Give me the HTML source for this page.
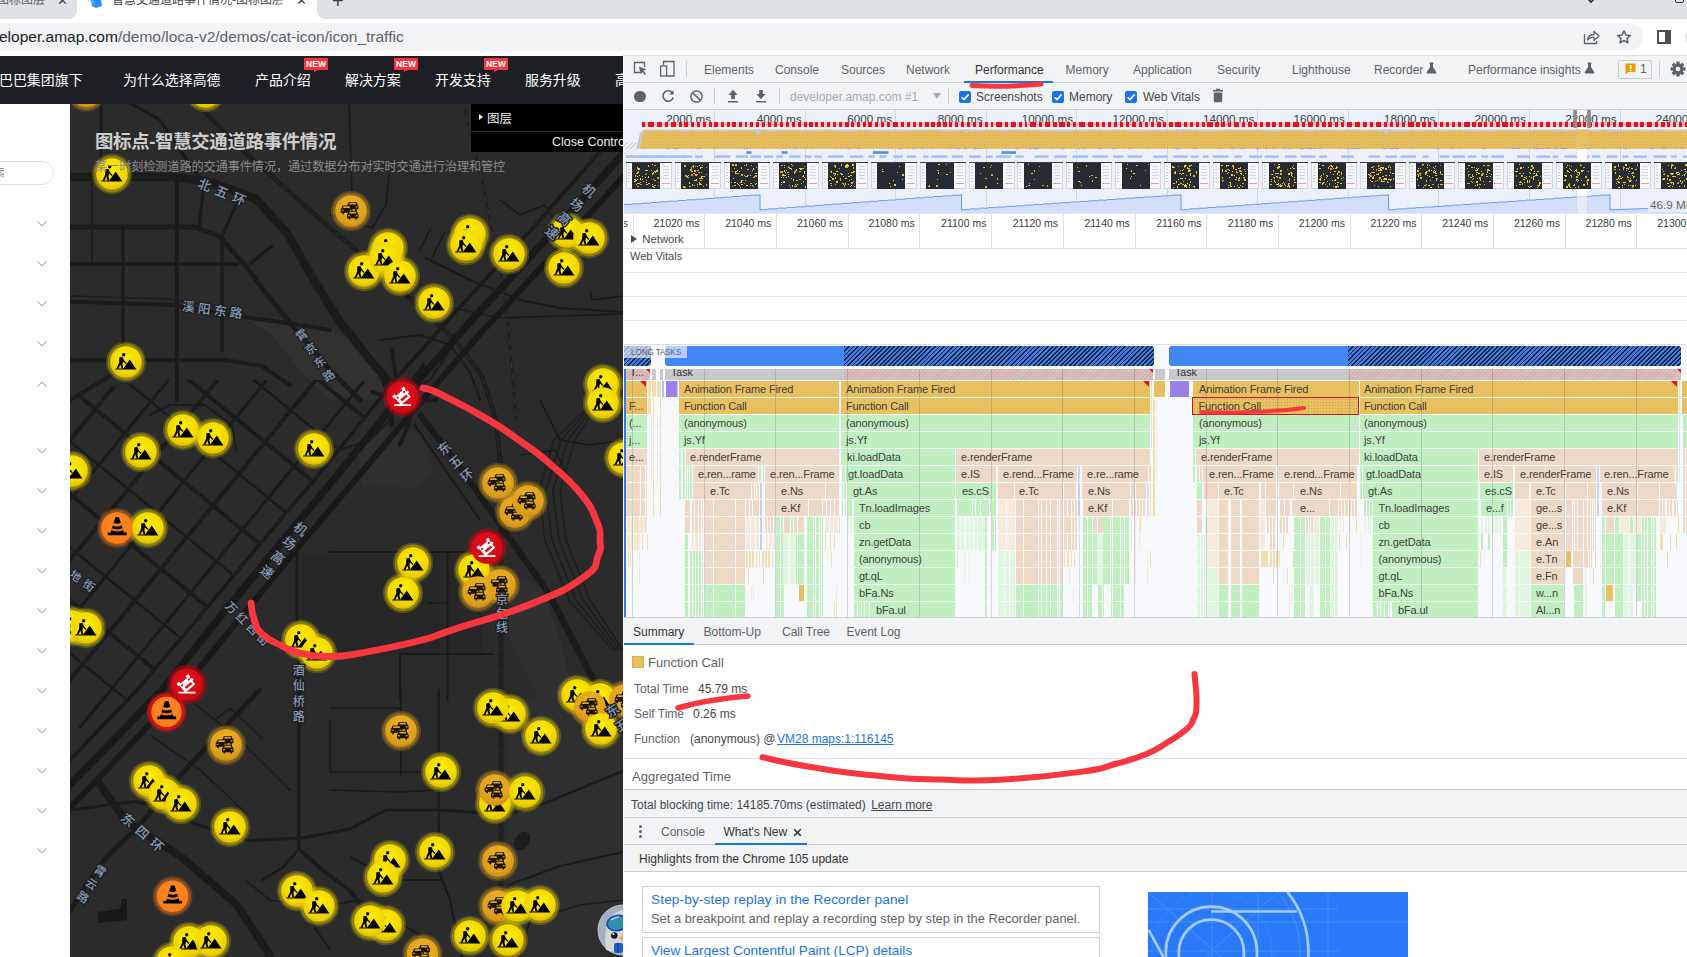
<!DOCTYPE html>
<html lang="zh"><head><meta charset="utf-8"><title>智慧交通道路事件情况-图标图层</title>
<style>
*{box-sizing:border-box;margin:0;padding:0}
html,body{width:1687px;height:957px;overflow:hidden;background:#fff}
body{position:relative;font-family:"Liberation Sans","Noto Sans CJK SC",sans-serif;font-size:12px;color:#303942}
.abs{position:absolute}
#tabstrip{left:0;top:0;width:1687px;height:19px;background:#dee1e6}
#tab0{left:-20px;top:-16px;width:96px;height:34px;border-radius:0 0 8px 8px;background:#dee1e6}
#tabA{left:77px;top:-20px;width:240px;height:40px;background:#fff;border-radius:8px 8px 0 0}
#toolbar{left:0;top:19px;width:1687px;height:37px;background:#fff}
#omni{left:-40px;top:23px;width:1683px;height:28px;border-radius:14px;background:#f1f3f4}
#url{left:-1px;top:26px;font-size:15.5px;line-height:22px;color:#5f6368;white-space:nowrap;letter-spacing:0px}
#url b{font-weight:normal;color:#202124}
#nav{left:0;top:56px;width:623px;height:48px;background:#1d1f24}
.navi{top:56.6px;height:47px;line-height:47px;color:#fff;font-size:13.95px;white-space:nowrap}
.new{top:58px;width:24px;height:12px;background:#f4363c;color:#fff;font-size:8.5px;line-height:12px;text-align:center;border-radius:1px;font-weight:bold}
.new:after{content:"";position:absolute;left:10px;top:12px;border:solid transparent;border-top-color:#f4363c;border-left-color:#f4363c;border-width:1.8px 2.4px}
#side{left:0;top:103px;width:70px;height:854px;background:#fff}
#map{left:70px;top:103px;width:553px;height:854px;background:#2a2a2a;overflow:hidden}
#dt{left:623px;top:56px;width:1064px;height:901px;background:#fff;overflow:hidden;font-size:12px}

.tab{top:63px;font-size:12px;line-height:15px;white-space:nowrap}
.ovl{top:111px;width:80px;text-align:right;font-size:11.7px;line-height:15px;color:#3a3d42;white-space:nowrap}
.rl{top:216px;width:80px;text-align:right;font-size:10.5px;line-height:15px;color:#3c4043;white-space:nowrap}
.fb{position:absolute;height:16px;overflow:hidden;white-space:nowrap;font-size:11px;line-height:16px;color:#404040;letter-spacing:-0.12px}
.shot{top:162px;width:46px;height:26.5px;background:#f4f6fa;outline:1px solid #d4d7de;outline-offset:-1px;overflow:hidden}
.sm{width:28.2px;height:26.5px;background:#262b34}
i.sp{position:absolute;top:0;width:0.9px;height:100%;background:#f8f9fd}
i.sp2{width:0.9px;height:16px;background:#f8f9fd}
.sm i{position:absolute;width:1.3px;height:1.3px}
</style></head>
<body>
<div class="abs" id="tabstrip"></div>
<div class="abs" id="tabA"></div>
<div class="abs" style="left:69px;top:11px;width:8px;height:8px;background:#fff"></div><div class="abs" style="left:61px;top:3px;width:16px;height:16px;border-radius:8px;background:#dee1e6"></div>
<div class="abs" style="left:317px;top:11px;width:8px;height:8px;background:#fff"></div><div class="abs" style="left:317px;top:3px;width:16px;height:16px;border-radius:8px;background:#dee1e6"></div>
<div class="abs" style="left:-3px;top:-7px;font-size:12px;color:#5f6368;white-space:nowrap;line-height:14px;height:14px;overflow:hidden">图标图层</div>
<div class="abs" style="left:57px;top:-6px;font-size:13px;color:#3c4043;line-height:14px">✕</div>
<svg class="abs" style="left:88px;top:0" width="16" height="10" viewBox="0 0 16 10"><path d="M3 0 L13 0 L14 6 L8 8 L4 6 Z" fill="#2a8cf0"/><path d="M2 2 L6 0 L7 5 Z" fill="#55b4ff"/></svg>
<div class="abs" style="left:112px;top:-7px;font-size:12px;color:#3c4043;white-space:nowrap;line-height:14px;width:176px;overflow:hidden">智慧交通道路事件情况-图标图层</div>
<div class="abs" style="left:273px;top:-7px;width:16px;height:16px;background:linear-gradient(90deg,rgba(255,255,255,0),#fff)"></div>
<div class="abs" style="left:296px;top:-6px;font-size:13px;color:#3c4043;line-height:14px">✕</div>
<div class="abs" style="left:332px;top:-9px;font-size:20px;color:#3c4043;line-height:20px">+</div>
<svg class="abs" style="left:1585px;top:0" width="12" height="4" viewBox="0 0 12 4"><path d="M2 -2 L6 2 L10 -2" stroke="#333" stroke-width="1.6" fill="none"/></svg>
<div class="abs" style="left:1675px;top:-6px;width:9px;height:9px;border:1.5px solid #333;border-radius:2px"></div>
<div class="abs" id="toolbar"></div><div class="abs" id="omni"></div>
<div class="abs" id="url"><b>eloper.amap.com</b>/demo/loca-v2/demos/cat-icon/icon_traffic</div>
<svg class="abs" style="left:1583px;top:29px" width="18" height="16" viewBox="0 0 18 16"><path d="M1.5 5 V14.5 H13.5 V12" stroke="#5f6368" stroke-width="1.3" fill="none"/><path d="M4.5 11 C5 7 8 5.5 11 5.5 V2.5 L16 7 L11 11.5 V8.5 C8 8.3 6 9 4.5 11 Z" stroke="#5f6368" stroke-width="1.3" fill="none" stroke-linejoin="round"/></svg>
<svg class="abs" style="left:1616px;top:29px" width="16" height="16" viewBox="0 0 16 16"><path d="M8 1.8 L9.9 6 L14.4 6.4 L11 9.4 L12 13.8 L8 11.5 L4 13.8 L5 9.4 L1.6 6.4 L6.1 6 Z" stroke="#5f6368" stroke-width="1.5" fill="none" stroke-linejoin="round"/></svg>
<div class="abs" style="left:1657px;top:30px;width:14px;height:14px;border:2px solid #4a4f55;border-right-width:6px"></div>
<div class="abs" style="left:1685px;top:28px;width:20px;height:20px;border-radius:10px;background:#e3e5e8"></div>
<div class="abs" id="nav"></div>
<div class="abs navi" style="left:-1px">巴巴集团旗下</div>
<div class="abs navi" style="left:123px">为什么选择高德</div>
<div class="abs navi" style="left:255px">产品介绍</div>
<div class="abs navi" style="left:345px">解决方案</div>
<div class="abs navi" style="left:435px">开发支持</div>
<div class="abs navi" style="left:525px">服务升级</div>
<div class="abs navi" style="left:615px">高</div>
<div class="abs new" style="left:304px">NEW</div>
<div class="abs new" style="left:394px">NEW</div>
<div class="abs new" style="left:484px">NEW</div>
<div class="abs" id="side"></div>
<div class="abs" style="left:-20px;top:161px;width:74px;height:24px;border:1px solid #dcdfe6;border-radius:12px;background:#fff"></div>
<div class="abs" style="left:-6px;top:166px;font-size:11px;color:#888;line-height:14px;width:10px;overflow:hidden">索</div>
<svg class="abs" style="left:36.3px;top:220.4px" width="12" height="8" viewBox="0 0 12 8"><path d="M1.5 1.5 L6 6 L10.5 1.5" stroke="#b4b8bf" stroke-width="1.2" fill="none"/></svg>
<svg class="abs" style="left:36.3px;top:260.4px" width="12" height="8" viewBox="0 0 12 8"><path d="M1.5 1.5 L6 6 L10.5 1.5" stroke="#b4b8bf" stroke-width="1.2" fill="none"/></svg>
<svg class="abs" style="left:36.3px;top:300.4px" width="12" height="8" viewBox="0 0 12 8"><path d="M1.5 1.5 L6 6 L10.5 1.5" stroke="#b4b8bf" stroke-width="1.2" fill="none"/></svg>
<svg class="abs" style="left:36.3px;top:340.4px" width="12" height="8" viewBox="0 0 12 8"><path d="M1.5 1.5 L6 6 L10.5 1.5" stroke="#b4b8bf" stroke-width="1.2" fill="none"/></svg>
<svg class="abs" style="left:36.3px;top:447.4px" width="12" height="8" viewBox="0 0 12 8"><path d="M1.5 1.5 L6 6 L10.5 1.5" stroke="#b4b8bf" stroke-width="1.2" fill="none"/></svg>
<svg class="abs" style="left:36.3px;top:487.4px" width="12" height="8" viewBox="0 0 12 8"><path d="M1.5 1.5 L6 6 L10.5 1.5" stroke="#b4b8bf" stroke-width="1.2" fill="none"/></svg>
<svg class="abs" style="left:36.3px;top:527.4px" width="12" height="8" viewBox="0 0 12 8"><path d="M1.5 1.5 L6 6 L10.5 1.5" stroke="#b4b8bf" stroke-width="1.2" fill="none"/></svg>
<svg class="abs" style="left:36.3px;top:567.4px" width="12" height="8" viewBox="0 0 12 8"><path d="M1.5 1.5 L6 6 L10.5 1.5" stroke="#b4b8bf" stroke-width="1.2" fill="none"/></svg>
<svg class="abs" style="left:36.3px;top:607.4px" width="12" height="8" viewBox="0 0 12 8"><path d="M1.5 1.5 L6 6 L10.5 1.5" stroke="#b4b8bf" stroke-width="1.2" fill="none"/></svg>
<svg class="abs" style="left:36.3px;top:647.4px" width="12" height="8" viewBox="0 0 12 8"><path d="M1.5 1.5 L6 6 L10.5 1.5" stroke="#b4b8bf" stroke-width="1.2" fill="none"/></svg>
<svg class="abs" style="left:36.3px;top:687.4px" width="12" height="8" viewBox="0 0 12 8"><path d="M1.5 1.5 L6 6 L10.5 1.5" stroke="#b4b8bf" stroke-width="1.2" fill="none"/></svg>
<svg class="abs" style="left:36.3px;top:727.4px" width="12" height="8" viewBox="0 0 12 8"><path d="M1.5 1.5 L6 6 L10.5 1.5" stroke="#b4b8bf" stroke-width="1.2" fill="none"/></svg>
<svg class="abs" style="left:36.3px;top:767.4px" width="12" height="8" viewBox="0 0 12 8"><path d="M1.5 1.5 L6 6 L10.5 1.5" stroke="#b4b8bf" stroke-width="1.2" fill="none"/></svg>
<svg class="abs" style="left:36.3px;top:807.4px" width="12" height="8" viewBox="0 0 12 8"><path d="M1.5 1.5 L6 6 L10.5 1.5" stroke="#b4b8bf" stroke-width="1.2" fill="none"/></svg>
<svg class="abs" style="left:36.3px;top:847.4px" width="12" height="8" viewBox="0 0 12 8"><path d="M1.5 1.5 L6 6 L10.5 1.5" stroke="#b4b8bf" stroke-width="1.2" fill="none"/></svg>
<svg class="abs" style="left:36.3px;top:379.6px" width="12" height="8" viewBox="0 0 12 8"><path d="M1.5 6.5 L6 2 L10.5 6.5" stroke="#b4b8bf" stroke-width="1.2" fill="none"/></svg>
<svg class="abs" style="left:70px;top:103px" width="553" height="854" viewBox="70 103 553 854">

<defs>
<clipPath id="cw"><polygon points="70,395 150,380 340,380 392,383 137,690 70,760"/></clipPath>
<radialGradient id="gy" cx="50%" cy="38%" r="65%"><stop offset="0" stop-color="#fff000"/><stop offset="0.75" stop-color="#f0d400"/><stop offset="1" stop-color="#d8b800"/></radialGradient>
<radialGradient id="ga" cx="50%" cy="35%" r="70%"><stop offset="0" stop-color="#eeb428"/><stop offset="0.7" stop-color="#dfa01c"/><stop offset="1" stop-color="#c48a14"/></radialGradient>
<radialGradient id="go" cx="50%" cy="40%" r="65%"><stop offset="0" stop-color="#ff8a26"/><stop offset="1" stop-color="#f87a18"/></radialGradient>
<radialGradient id="gr" cx="50%" cy="40%" r="65%"><stop offset="0" stop-color="#e8101c"/><stop offset="1" stop-color="#cc0812"/></radialGradient>
<g id="wk"><path d="M-10.8 6.4 H10.2 V7.4 H-10.8 Z M-3.2 7 L3.8 -2.6 L10 7 Z" fill="#000"/><circle cx="-2.3" cy="-7.2" r="1.7" fill="#000"/><path d="M-6.8 -4.6 L-3.6 -5.2 L-2 -1.8 L0.6 1.2 L-0.2 2 L-3 -0.4 L-3.6 2.2 L-2.6 6.6 L-4.4 6.8 L-5.6 2.6 L-7.6 6.8 L-9.4 6.6 L-6.8 0.4 Z" fill="#000"/></g>
<g id="car1"><path d="M-4.6 0.2 L-3.4 -2.6 H3.4 L4.6 0.2 L5.2 0.8 V4 H3.8 V5.2 H2.2 V4 H-2.2 V5.2 H-3.8 V4 H-5.2 V0.8 Z" fill="#1a1408"/><path d="M-3.2 -0.2 L-2.6 -1.8 H2.6 L3.2 -0.2 Z" fill="#e0a422"/><rect x="-4.4" y="1.3" width="1.8" height="1" fill="#e0a422"/><rect x="2.6" y="1.3" width="1.8" height="1" fill="#e0a422"/></g>
<g id="cars"><use href="#car1" x="1.5" y="-5.5"/><use href="#car1" x="-4" y="-2.4" /><use href="#car1" x="1.6" y="2.4"/></g>
<g id="cone"><path d="M-9.2 4.6 H9.6 V7.2 H-9.2 Z M-1.6 -10.8 H2 L7 4.6 H-6.4 Z" fill="#000"/><path d="M-3.2 -5 Q0.4 -3.4 4 -5.2 L4.9 -2.6 Q0.4 -0.6 -4.2 -2.2 Z" fill="#ff8420"/><path d="M-5 0.2 Q0.4 2.4 5.8 0 L6.4 2.2 Q0.4 4.4 -5.8 2.6 Z" fill="#ff8420" opacity="0.9"/></g>
<g id="crash"><path d="M-8.5 7.2 H8.5 V9 H-8.5 Z" fill="#fff"/><g transform="rotate(-40)"><rect x="-6.5" y="-5" width="13" height="10.2" rx="0.8" fill="#fff"/><rect x="-7.6" y="-7.2" width="3.2" height="3" fill="#fff"/><rect x="4.4" y="-7.2" width="3.2" height="3" fill="#fff"/><rect x="6" y="-1.8" width="2.2" height="2.4" fill="#fff"/><circle cx="-4.3" cy="-2.5" r="1.15" fill="#dc0c16"/><circle cx="4.6" cy="-2.7" r="1.15" fill="#dc0c16"/><rect x="-3.4" y="0.5" width="8" height="2.5" fill="#dc0c16"/></g></g>
<g id="iy_g"><circle r="20.2" fill="#e8d000" opacity="0.22"/><circle r="18.4" fill="#e8d000" opacity="0.38"/></g><g id="iy"><circle r="15.8" fill="url(#gy)"/><use href="#wk"/></g>
<g id="ia_g"><circle r="20.2" fill="#e0a010" opacity="0.22"/><circle r="18.4" fill="#e0a010" opacity="0.36"/></g><g id="ia"><circle r="15.8" fill="url(#ga)"/><use href="#cars" transform="scale(1.12)"/></g>
<g id="io_g"><circle r="20.2" fill="#f07818" opacity="0.22"/><circle r="18.4" fill="#f07818" opacity="0.38"/></g><g id="io"><circle r="15.8" fill="url(#go)"/><use href="#cone"/></g>
<g id="ior_g"><circle r="20.2" fill="#d01018" opacity="0.4"/><circle r="18.4" fill="#e01018" opacity="0.85"/></g><g id="ior"><circle r="15.2" fill="url(#go)"/><use href="#cone"/></g>
<g id="ir_g"><circle r="20.2" fill="#c00812" opacity="0.3"/><circle r="18.4" fill="#b00a14" opacity="0.55"/></g><g id="ir"><circle r="15.8" fill="url(#gr)"/><use href="#crash"/></g>
</defs>
<rect x="70" y="103" width="553" height="854" fill="#2b2b2b"/>
<polygon points="244,317 287,323 330,330 372,350 392,385 380,400 330,400 300,370 272,335" fill="#313131"/>
<polygon points="355,440 380,428 420,432 433,470 420,488 362,486" fill="#2f2f2f"/>
<polygon points="302,554 483,554 483,655 302,655" fill="#272727"/>
<polygon points="505,575 540,585 560,640 575,700 540,700 510,640" fill="#303030"/>
<polygon points="508,700 623,690 623,957 508,957" fill="#2f2f2f"/>
<polyline points="70,177 172,177 210,182 256,199 287,233 312,277 340,322 372,362 401,396" fill="none" stroke="#1b1b1b" stroke-width="8.5" stroke-linejoin="round" stroke-linecap="round" />
<polyline points="70,227 194,227 219,236 244,264 272,301 293,326 330,370 360,400" fill="none" stroke="#1b1b1b" stroke-width="5" stroke-linejoin="round" stroke-linecap="round" />
<polyline points="70,264 237,264" fill="none" stroke="#1b1b1b" stroke-width="4" stroke-linejoin="round" stroke-linecap="round" />
<polyline points="70,301.6 172,305 244,317 287,323 330,330" fill="none" stroke="#1b1b1b" stroke-width="4" stroke-linejoin="round" stroke-linecap="round" />
<polyline points="70,296 170,299 240,311" fill="none" stroke="#1b1b1b" stroke-width="1.5" stroke-linejoin="round" stroke-linecap="round" />
<polyline points="70,360.5 225,360 262,366 290,385" fill="none" stroke="#1b1b1b" stroke-width="4" stroke-linejoin="round" stroke-linecap="round" />
<polyline points="123,227 123,360" fill="none" stroke="#1b1b1b" stroke-width="3.5" stroke-linejoin="round" stroke-linecap="round" />
<polyline points="177,179 177,400" fill="none" stroke="#1b1b1b" stroke-width="4" stroke-linejoin="round" stroke-linecap="round" />
<polyline points="222,236 222,351" fill="none" stroke="#1b1b1b" stroke-width="3.5" stroke-linejoin="round" stroke-linecap="round" />
<polyline points="92,183 92,264" fill="none" stroke="#1b1b1b" stroke-width="1.5" stroke-linejoin="round" stroke-linecap="round" />
<polyline points="203,193 199,227" fill="none" stroke="#1b1b1b" stroke-width="3" stroke-linejoin="round" stroke-linecap="round" />
<polyline points="237.5,202 222,236" fill="none" stroke="#1b1b1b" stroke-width="3" stroke-linejoin="round" stroke-linecap="round" />
<polyline points="272,246 250,264" fill="none" stroke="#1b1b1b" stroke-width="3" stroke-linejoin="round" stroke-linecap="round" />
<polyline points="101,103 101,165" fill="none" stroke="#1b1b1b" stroke-width="3" stroke-linejoin="round" stroke-linecap="round" />
<polyline points="70,400 110,376 123,360" fill="none" stroke="#1b1b1b" stroke-width="4" stroke-linejoin="round" stroke-linecap="round" />
<polyline points="130,103 160,120 180,150 200,178" fill="none" stroke="#1b1b1b" stroke-width="3" stroke-linejoin="round" stroke-linecap="round" />
<polyline points="196,103 240,148 330,228 355,249 414,302 457,342 482,376 496,420 501,470 501,957" fill="none" stroke="#1e1e1e" stroke-width="4.5" stroke-linejoin="round" stroke-linecap="round" />
<polyline points="196,103 240,148 330,228 355,249 414,302 457,342 482,376 496,420 501,470 501,957" fill="none" stroke="#2f2f2f" stroke-width="1" stroke-linejoin="round" stroke-linecap="round" stroke-dasharray="5 5"/>
<polyline points="463,103 472,140 482,180 490,220 498,258 507,314 513,382 516,420" fill="none" stroke="#202020" stroke-width="2.5" stroke-linejoin="round" stroke-linecap="round" />
<polyline points="463,103 472,140 482,180 490,220 498,258 507,314 513,382 516,420" fill="none" stroke="#3a3a3a" stroke-width="1" stroke-linejoin="round" stroke-linecap="round" stroke-dasharray="6 6"/>
<polyline points="349,103 352,193 345,215" fill="none" stroke="#1b1b1b" stroke-width="1.5" stroke-linejoin="round" stroke-linecap="round" />
<polyline points="389,174 386,205 372,228" fill="none" stroke="#1b1b1b" stroke-width="1.5" stroke-linejoin="round" stroke-linecap="round" />
<polyline points="330,215 372,228" fill="none" stroke="#1b1b1b" stroke-width="1.5" stroke-linejoin="round" stroke-linecap="round" />
<polyline points="426,258 470,280 520,300 560,308 623,312" fill="none" stroke="#1b1b1b" stroke-width="2" stroke-linejoin="round" stroke-linecap="round" />
<polyline points="454,308 500,318 560,316 623,314" fill="none" stroke="#1b1b1b" stroke-width="1.5" stroke-linejoin="round" stroke-linecap="round" />
<polyline points="500,200 520,215 545,205 555,222" fill="none" stroke="#1b1b1b" stroke-width="1.5" stroke-linejoin="round" stroke-linecap="round" />
<polyline points="590,290 592,300 623,296" fill="none" stroke="#1b1b1b" stroke-width="1.5" stroke-linejoin="round" stroke-linecap="round" />
<polyline points="430,230 420,250" fill="none" stroke="#1b1b1b" stroke-width="1.5" stroke-linejoin="round" stroke-linecap="round" />
<polyline points="445,232 432,258" fill="none" stroke="#1b1b1b" stroke-width="1.5" stroke-linejoin="round" stroke-linecap="round" />
<polyline points="380,340 420,335 450,345 470,372 480,400" fill="none" stroke="#1b1b1b" stroke-width="2" stroke-linejoin="round" stroke-linecap="round" />
<polyline points="640,135 560,224 470,322 417,382 401,396 330,484 290,532 220,617 162,690 70,785" fill="none" stroke="#191919" stroke-width="7.5" stroke-linejoin="round" stroke-linecap="round" />
<polyline points="640,158 570,236 480,334 426,396 345,492 300,545 232,628 175,698 70,808" fill="none" stroke="#191919" stroke-width="6" stroke-linejoin="round" stroke-linecap="round" />
<polyline points="610,140 540,220 450,318 395,380 316,478 275,526 205,610 137,690 70,760" fill="none" stroke="#1b1b1b" stroke-width="3.5" stroke-linejoin="round" stroke-linecap="round" />
<polyline points="401,396 390,420 370,440 340,450" fill="none" stroke="#1b1b1b" stroke-width="2" stroke-linejoin="round" stroke-linecap="round" />
<polyline points="401,396 430,380 450,350" fill="none" stroke="#1b1b1b" stroke-width="2" stroke-linejoin="round" stroke-linecap="round" />
<polyline points="378,366 388,392 392,425" fill="none" stroke="#1b1b1b" stroke-width="5" stroke-linejoin="round" stroke-linecap="round" />
<polyline points="424,366 404,392 380,420" fill="none" stroke="#1b1b1b" stroke-width="5" stroke-linejoin="round" stroke-linecap="round" />
<polyline points="372,392 402,402 436,400" fill="none" stroke="#1b1b1b" stroke-width="4" stroke-linejoin="round" stroke-linecap="round" />
<polyline points="392,350 396,380" fill="none" stroke="#1b1b1b" stroke-width="4" stroke-linejoin="round" stroke-linecap="round" />
<polyline points="410,420 400,445" fill="none" stroke="#1b1b1b" stroke-width="4" stroke-linejoin="round" stroke-linecap="round" />
<g clip-path="url(#cw)">
<polyline points="422.346,310.068 79.986,727.488" fill="none" stroke="#1b1b1b" stroke-width="3" stroke-linejoin="round" stroke-linecap="round" />
<polyline points="392.972,285.976 50.612,703.396" fill="none" stroke="#1b1b1b" stroke-width="4" stroke-linejoin="round" stroke-linecap="round" />
<polyline points="363.598,261.884 21.238,679.304" fill="none" stroke="#1b1b1b" stroke-width="3" stroke-linejoin="round" stroke-linecap="round" />
<polyline points="334.224,237.792 -8.136,655.212" fill="none" stroke="#1b1b1b" stroke-width="4" stroke-linejoin="round" stroke-linecap="round" />
<polyline points="304.85,213.7 -37.51,631.12" fill="none" stroke="#1b1b1b" stroke-width="3" stroke-linejoin="round" stroke-linecap="round" />
<polyline points="275.476,189.608 -66.884,607.028" fill="none" stroke="#1b1b1b" stroke-width="4" stroke-linejoin="round" stroke-linecap="round" />
<polyline points="246.102,165.516 -96.258,582.936" fill="none" stroke="#1b1b1b" stroke-width="3" stroke-linejoin="round" stroke-linecap="round" />
<polyline points="375.98,427.19 66.78,173.59" fill="none" stroke="#1b1b1b" stroke-width="4" stroke-linejoin="round" stroke-linecap="round" />
<polyline points="349.986,458.883 40.786,205.283" fill="none" stroke="#1b1b1b" stroke-width="2.5" stroke-linejoin="round" stroke-linecap="round" />
<polyline points="323.992,490.576 14.792,236.976" fill="none" stroke="#1b1b1b" stroke-width="4" stroke-linejoin="round" stroke-linecap="round" />
<polyline points="297.998,522.269 -11.202,268.669" fill="none" stroke="#1b1b1b" stroke-width="2.5" stroke-linejoin="round" stroke-linecap="round" />
<polyline points="272.004,553.962 -37.196,300.362" fill="none" stroke="#1b1b1b" stroke-width="4" stroke-linejoin="round" stroke-linecap="round" />
<polyline points="246.01,585.655 -63.19,332.055" fill="none" stroke="#1b1b1b" stroke-width="2.5" stroke-linejoin="round" stroke-linecap="round" />
<polyline points="220.016,617.348 -89.184,363.748" fill="none" stroke="#1b1b1b" stroke-width="4" stroke-linejoin="round" stroke-linecap="round" />
<polyline points="194.022,649.041 -115.178,395.441" fill="none" stroke="#1b1b1b" stroke-width="2.5" stroke-linejoin="round" stroke-linecap="round" />
<polyline points="168.028,680.734 -141.172,427.134" fill="none" stroke="#1b1b1b" stroke-width="4" stroke-linejoin="round" stroke-linecap="round" />
<polyline points="142.034,712.427 -167.166,458.827" fill="none" stroke="#1b1b1b" stroke-width="2.5" stroke-linejoin="round" stroke-linecap="round" />
</g>
<polyline points="150,415 170,405 205,405 232,425 236,450" fill="none" stroke="#1b1b1b" stroke-width="2" stroke-linejoin="round" stroke-linecap="round" />
<polyline points="421,416 462,470 505.5,532 549,594 590,673 606,700 623,730" fill="none" stroke="#1b1b1b" stroke-width="6.5" stroke-linejoin="round" stroke-linecap="round" />
<polyline points="414,424 440,462 480,520" fill="none" stroke="#1b1b1b" stroke-width="2" stroke-linejoin="round" stroke-linecap="round" />
<polyline points="330,552 483.6,552" fill="none" stroke="#1b1b1b" stroke-width="2" stroke-linejoin="round" stroke-linecap="round" />
<polyline points="447.5,552 447.5,700" fill="none" stroke="#1b1b1b" stroke-width="2" stroke-linejoin="round" stroke-linecap="round" />
<polyline points="297,553.6 297,660" fill="none" stroke="#1b1b1b" stroke-width="3" stroke-linejoin="round" stroke-linecap="round" />
<polyline points="399,654 493,654" fill="none" stroke="#1b1b1b" stroke-width="2" stroke-linejoin="round" stroke-linecap="round" />
<polyline points="400,654 400,700" fill="none" stroke="#1b1b1b" stroke-width="1.5" stroke-linejoin="round" stroke-linecap="round" />
<polyline points="483,552 483,600" fill="none" stroke="#1b1b1b" stroke-width="1.5" stroke-linejoin="round" stroke-linecap="round" />
<polyline points="428,603 447,603" fill="none" stroke="#1b1b1b" stroke-width="1.5" stroke-linejoin="round" stroke-linecap="round" />
<polyline points="600,400 575,440 560,490 566,540 590,600 623,650" fill="none" stroke="#1e1e1e" stroke-width="1.5" stroke-linejoin="round" stroke-linecap="round" />
<polyline points="598.6,400 568,440 553,490 559,540 583,600 619.5,650" fill="none" stroke="#1e1e1e" stroke-width="1.5" stroke-linejoin="round" stroke-linecap="round" />
<polyline points="597.2,400 561,440 546,490 552,540 576,600 616,650" fill="none" stroke="#1e1e1e" stroke-width="1.5" stroke-linejoin="round" stroke-linecap="round" />
<polyline points="595.8,400 554,440 539,490 545,540 569,600 612.5,650" fill="none" stroke="#1e1e1e" stroke-width="1.5" stroke-linejoin="round" stroke-linecap="round" />
<polyline points="540,400 560,440 590,445 623,440" fill="none" stroke="#1b1b1b" stroke-width="1.5" stroke-linejoin="round" stroke-linecap="round" />
<polyline points="520,455 555,450 565,470" fill="none" stroke="#1b1b1b" stroke-width="1.5" stroke-linejoin="round" stroke-linecap="round" />
<polyline points="299,660 299,849 320,868 350,891 380,930" fill="none" stroke="#1b1b1b" stroke-width="4" stroke-linejoin="round" stroke-linecap="round" />
<polyline points="299,849 282,868 262,880" fill="none" stroke="#1b1b1b" stroke-width="2.5" stroke-linejoin="round" stroke-linecap="round" />
<polyline points="98,782 126,821 181.5,857 237,905 271,957" fill="none" stroke="#1b1b1b" stroke-width="8" stroke-linejoin="round" stroke-linecap="round" />
<polyline points="259.6,690 181.5,774 152,810 136,829 108.5,855 85.4,886 70,911" fill="none" stroke="#1b1b1b" stroke-width="5" stroke-linejoin="round" stroke-linecap="round" />
<polyline points="70,810 134,801.5 165,808 195.5,824 248.5,840.6 301.5,838 350,829 386,810 441.6,810 483.5,813" fill="none" stroke="#1b1b1b" stroke-width="3" stroke-linejoin="round" stroke-linecap="round" />
<polyline points="623,771 542,804.4 505,815" fill="none" stroke="#1b1b1b" stroke-width="2.5" stroke-linejoin="round" stroke-linecap="round" />
<polyline points="623,852 560,866 508.6,885" fill="none" stroke="#1b1b1b" stroke-width="2" stroke-linejoin="round" stroke-linecap="round" />
<polyline points="438.8,690 438.8,871 450,900 462,957" fill="none" stroke="#1b1b1b" stroke-width="2" stroke-linejoin="round" stroke-linecap="round" />
<polyline points="401,690 401,775" fill="none" stroke="#1b1b1b" stroke-width="1.5" stroke-linejoin="round" stroke-linecap="round" />
<polyline points="330,708 401,708" fill="none" stroke="#1b1b1b" stroke-width="1.5" stroke-linejoin="round" stroke-linecap="round" />
<polyline points="330,772 438,772" fill="none" stroke="#1b1b1b" stroke-width="1.5" stroke-linejoin="round" stroke-linecap="round" />
<polyline points="330,790 400,792 438,790" fill="none" stroke="#1b1b1b" stroke-width="1.5" stroke-linejoin="round" stroke-linecap="round" />
<polyline points="150,735 200,770 245,812" fill="none" stroke="#1b1b1b" stroke-width="1.5" stroke-linejoin="round" stroke-linecap="round" />
<polyline points="190,700 240,740 290,790" fill="none" stroke="#1b1b1b" stroke-width="1.5" stroke-linejoin="round" stroke-linecap="round" />
<polyline points="215,720 230,708 262,738" fill="none" stroke="#1b1b1b" stroke-width="1.5" stroke-linejoin="round" stroke-linecap="round" />
<polyline points="350,857 395,880 440,880" fill="none" stroke="#1b1b1b" stroke-width="2" stroke-linejoin="round" stroke-linecap="round" />
<polyline points="330,905 360,900 420,935" fill="none" stroke="#1b1b1b" stroke-width="2" stroke-linejoin="round" stroke-linecap="round" />
<polyline points="245,880 270,900 300,905 330,950" fill="none" stroke="#1b1b1b" stroke-width="1.5" stroke-linejoin="round" stroke-linecap="round" />
<polyline points="330,720 330,770" fill="none" stroke="#1b1b1b" stroke-width="1.5" stroke-linejoin="round" stroke-linecap="round" />
<polyline points="520,957 530,920 580,905 623,900" fill="none" stroke="#1b1b1b" stroke-width="1.5" stroke-linejoin="round" stroke-linecap="round" />
<path d="M98 912 l22 -3 l2 -10 l5 0 l0 21 l-29 3 Z" fill="#181818"/>
<ellipse cx="522" cy="841" rx="7" ry="10" fill="#1c1c1c" transform="rotate(35 522 841)"/>
<use href="#ia_g" x="86.5" y="91.5"/>
<use href="#iy_g" x="205.5" y="92"/>
<use href="#iy_g" x="112" y="174"/>
<use href="#ia_g" x="351" y="211"/>
<use href="#iy_g" x="388" y="248"/>
<use href="#iy_g" x="364" y="271"/>
<use href="#iy_g" x="385" y="258"/>
<use href="#iy_g" x="400" y="276"/>
<use href="#iy_g" x="470" y="234"/>
<use href="#iy_g" x="466" y="245"/>
<use href="#iy_g" x="509" y="254"/>
<use href="#iy_g" x="434" y="303"/>
<use href="#iy_g" x="567" y="232"/>
<use href="#iy_g" x="589" y="238"/>
<use href="#iy_g" x="564" y="268"/>
<use href="#iy_g" x="126" y="362"/>
<use href="#iy_g" x="603" y="384"/>
<use href="#iy_g" x="603" y="403"/>
<use href="#iy_g" x="183" y="430"/>
<use href="#iy_g" x="213" y="438"/>
<use href="#iy_g" x="141" y="452"/>
<use href="#iy_g" x="314" y="449"/>
<use href="#iy_g" x="72" y="471"/>
<use href="#iy_g" x="624" y="458"/>
<use href="#io_g" x="117" y="528"/>
<use href="#iy_g" x="148" y="528"/>
<use href="#ia_g" x="515" y="512"/>
<use href="#ia_g" x="528" y="501"/>
<use href="#ia_g" x="498" y="483"/>
<use href="#iy_g" x="413" y="563"/>
<use href="#iy_g" x="403" y="593"/>
<use href="#iy_g" x="474" y="570"/>
<use href="#ia_g" x="500" y="585"/>
<use href="#ia_g" x="478" y="592"/>
<use href="#ir_g" x="487" y="548"/>
<use href="#iy_g" x="72" y="626"/>
<use href="#iy_g" x="86" y="628"/>
<use href="#iy_g" x="301" y="640"/>
<use href="#iy_g" x="317" y="653"/>
<use href="#ir_g" x="402.5" y="397"/>
<use href="#ior_g" x="166.5" y="712"/>
<use href="#ir_g" x="187" y="684.5"/>
<use href="#ia_g" x="226" y="745"/>
<use href="#ia_g" x="401" y="731"/>
<use href="#iy_g" x="510" y="714"/>
<use href="#iy_g" x="493" y="708"/>
<use href="#iy_g" x="577" y="695"/>
<use href="#iy_g" x="600" y="699"/>
<use href="#ia_g" x="590" y="707"/>
<use href="#iy_g" x="601" y="729"/>
<use href="#ia_g" x="625" y="700"/>
<use href="#iy_g" x="541" y="736"/>
<use href="#iy_g" x="441" y="772"/>
<use href="#iy_g" x="495" y="804"/>
<use href="#ia_g" x="495" y="790"/>
<use href="#iy_g" x="525" y="792"/>
<use href="#iy_g" x="149" y="781"/>
<use href="#iy_g" x="164" y="794"/>
<use href="#iy_g" x="181" y="804"/>
<use href="#iy_g" x="230" y="827"/>
<use href="#iy_g" x="435" y="852"/>
<use href="#iy_g" x="390" y="860"/>
<use href="#iy_g" x="383" y="877"/>
<use href="#ia_g" x="498" y="861"/>
<use href="#io_g" x="172.5" y="896.3"/>
<use href="#iy_g" x="297" y="891"/>
<use href="#iy_g" x="319" y="906"/>
<use href="#iy_g" x="386" y="925"/>
<use href="#iy_g" x="370" y="921"/>
<use href="#ia_g" x="498" y="906"/>
<use href="#iy_g" x="517" y="906"/>
<use href="#iy_g" x="540" y="905"/>
<use href="#iy_g" x="470" y="936"/>
<use href="#iy_g" x="508" y="940"/>
<use href="#iy_g" x="189" y="942"/>
<use href="#iy_g" x="211" y="941"/>
<use href="#ia_g" x="422.5" y="954"/>
<use href="#iy_g" x="172" y="962"/>
<use href="#ia" x="86.5" y="91.5"/>
<use href="#iy" x="205.5" y="92"/>
<use href="#iy" x="112" y="174"/>
<use href="#ia" x="351" y="211"/>
<use href="#iy" x="388" y="248"/>
<use href="#iy" x="364" y="271"/>
<use href="#iy" x="385" y="258"/>
<use href="#iy" x="400" y="276"/>
<use href="#iy" x="470" y="234"/>
<use href="#iy" x="466" y="245"/>
<use href="#iy" x="509" y="254"/>
<use href="#iy" x="434" y="303"/>
<use href="#iy" x="567" y="232"/>
<use href="#iy" x="589" y="238"/>
<use href="#iy" x="564" y="268"/>
<use href="#iy" x="126" y="362"/>
<use href="#iy" x="603" y="384"/>
<use href="#iy" x="603" y="403"/>
<use href="#iy" x="183" y="430"/>
<use href="#iy" x="213" y="438"/>
<use href="#iy" x="141" y="452"/>
<use href="#iy" x="314" y="449"/>
<use href="#iy" x="72" y="471"/>
<use href="#iy" x="624" y="458"/>
<use href="#io" x="117" y="528"/>
<use href="#iy" x="148" y="528"/>
<use href="#ia" x="515" y="512"/>
<use href="#ia" x="528" y="501"/>
<use href="#ia" x="498" y="483"/>
<use href="#iy" x="413" y="563"/>
<use href="#iy" x="403" y="593"/>
<use href="#iy" x="474" y="570"/>
<use href="#ia" x="500" y="585"/>
<use href="#ia" x="478" y="592"/>
<use href="#ir" x="487" y="548"/>
<use href="#iy" x="72" y="626"/>
<use href="#iy" x="86" y="628"/>
<use href="#iy" x="301" y="640"/>
<use href="#iy" x="317" y="653"/>
<use href="#ir" x="402.5" y="397"/>
<use href="#ior" x="166.5" y="712"/>
<use href="#ir" x="187" y="684.5"/>
<use href="#ia" x="226" y="745"/>
<use href="#ia" x="401" y="731"/>
<use href="#iy" x="510" y="714"/>
<use href="#iy" x="493" y="708"/>
<use href="#iy" x="577" y="695"/>
<use href="#iy" x="600" y="699"/>
<use href="#ia" x="590" y="707"/>
<use href="#iy" x="601" y="729"/>
<use href="#ia" x="625" y="700"/>
<use href="#iy" x="541" y="736"/>
<use href="#iy" x="441" y="772"/>
<use href="#iy" x="495" y="804"/>
<use href="#ia" x="495" y="790"/>
<use href="#iy" x="525" y="792"/>
<use href="#iy" x="149" y="781"/>
<use href="#iy" x="164" y="794"/>
<use href="#iy" x="181" y="804"/>
<use href="#iy" x="230" y="827"/>
<use href="#iy" x="435" y="852"/>
<use href="#iy" x="390" y="860"/>
<use href="#iy" x="383" y="877"/>
<use href="#ia" x="498" y="861"/>
<use href="#io" x="172.5" y="896.3"/>
<use href="#iy" x="297" y="891"/>
<use href="#iy" x="319" y="906"/>
<use href="#iy" x="386" y="925"/>
<use href="#iy" x="370" y="921"/>
<use href="#ia" x="498" y="906"/>
<use href="#iy" x="517" y="906"/>
<use href="#iy" x="540" y="905"/>
<use href="#iy" x="470" y="936"/>
<use href="#iy" x="508" y="940"/>
<use href="#iy" x="189" y="942"/>
<use href="#iy" x="211" y="941"/>
<use href="#ia" x="422.5" y="954"/>
<use href="#iy" x="172" y="962"/>
<text x="196.8 214.0 231.2" y="187.0 194.0 201.0" rotate="22 22 22" font-size="13" fill="#8698b4" stroke="#1f1f1f" stroke-width="2.6" paint-order="stroke" style="font-weight:500;font-family:'Liberation Sans','Noto Sans CJK SC',sans-serif">北五环</text>
<text x="181.8 197.6 213.4 229.2" y="310.3 312.4 314.5 316.6" rotate="8 8 8 8" font-size="12.5" fill="#8698b4" stroke="#1f1f1f" stroke-width="2.6" paint-order="stroke" style="font-weight:500;font-family:'Liberation Sans','Noto Sans CJK SC',sans-serif">溪阳东路</text>
<text x="299.3 308.2 317.2 326.2" y="341.7 355.3 368.8 382.3" rotate="-34 -34 -34 -34" font-size="11.5" fill="#8698b4" stroke="#1f1f1f" stroke-width="2.6" paint-order="stroke" style="font-weight:500;font-family:'Liberation Sans','Noto Sans CJK SC',sans-serif">霄京东路</text>
<text x="580.9 568.6 556.3 543.9" y="190.0 204.0 217.9 231.9" rotate="41 41 41 41" font-size="13" fill="#8698b4" stroke="#1f1f1f" stroke-width="2.6" paint-order="stroke" style="font-weight:500;font-family:'Liberation Sans','Noto Sans CJK SC',sans-serif">机场高速</text>
<text x="442.5 453.7 464.9" y="455.9 469.4 482.9" rotate="-40 -40 -40" font-size="13" fill="#8698b4" stroke="#1f1f1f" stroke-width="2.6" paint-order="stroke" style="font-weight:500;font-family:'Liberation Sans','Noto Sans CJK SC',sans-serif">东五环</text>
<text x="292.5 281.3 270.1 258.9" y="528.8 543.1 557.5 571.8" rotate="38 38 38 38" font-size="13" fill="#8698b4" stroke="#1f1f1f" stroke-width="2.6" paint-order="stroke" style="font-weight:500;font-family:'Liberation Sans','Noto Sans CJK SC',sans-serif">机场高速</text>
<text x="68.6 81.7" y="576.1 585.5" rotate="36 36" font-size="11.5" fill="#8698b4" stroke="#1f1f1f" stroke-width="2.6" paint-order="stroke" style="font-weight:500;font-family:'Liberation Sans','Noto Sans CJK SC',sans-serif">地街</text>
<text x="224.4 234.9 245.4 255.9" y="606.7 617.3 627.9 638.4" rotate="45 45 45 45" font-size="11.5" fill="#8698b4" stroke="#1f1f1f" stroke-width="2.6" paint-order="stroke" style="font-weight:500;font-family:'Liberation Sans','Noto Sans CJK SC',sans-serif">万红西街</text>
<text x="496.0 496.0 496.0" y="604.4 618.4 632.4" rotate="0 0 0" font-size="12" fill="#8698b4" stroke="#1f1f1f" stroke-width="2.6" paint-order="stroke" style="font-weight:500;font-family:'Liberation Sans','Noto Sans CJK SC',sans-serif">京包线</text>
<text x="292.7 292.7 292.7 292.7" y="674.9 690.4 705.8 721.2" rotate="0 0 0 0" font-size="12" fill="#8698b4" stroke="#1f1f1f" stroke-width="2.6" paint-order="stroke" style="font-weight:500;font-family:'Liberation Sans','Noto Sans CJK SC',sans-serif">酒仙桥路</text>
<text x="119.9 134.3 148.7" y="819.2 831.7 844.2" rotate="41 41 41" font-size="13" fill="#8698b4" stroke="#1f1f1f" stroke-width="2.6" paint-order="stroke" style="font-weight:500;font-family:'Liberation Sans','Noto Sans CJK SC',sans-serif">东四环</text>
<text x="92.9 84.3 75.8" y="871.4 884.4 897.4" rotate="33 33 33" font-size="11.5" fill="#8698b4" stroke="#1f1f1f" stroke-width="2.6" paint-order="stroke" style="font-weight:500;font-family:'Liberation Sans','Noto Sans CJK SC',sans-serif">霄云路</text>
<text x="609.5 618.8 628.1" y="717.9 732.5 747.1" rotate="-32 -32 -32" font-size="13" fill="#8698b4" stroke="#1f1f1f" stroke-width="2.6" paint-order="stroke" style="font-weight:500;font-family:'Liberation Sans','Noto Sans CJK SC',sans-serif">东五环</text>
<circle cx="623" cy="930" r="25" fill="#a4b0bd" stroke="#bcc4cc" stroke-width="1"/><path d="M606 950 Q603 930 610 918 Q618 908 630 910 L630 955 Z" fill="#d3d7dc"/><ellipse cx="617.5" cy="923" rx="10.5" ry="7.5" fill="#2f90b2" stroke="#1d4fb6" stroke-width="1.8" transform="rotate(-12 617.5 923)"/><path d="M611 920 q4 -3 8 -3" stroke="#cfe6f0" stroke-width="1.2" fill="none"/><circle cx="614.3" cy="935.5" r="3.2" fill="#101418"/><circle cx="613.4" cy="934" r="1" fill="#fff"/><path d="M618.5 938 L623 935 L623 941 Z" fill="#d8b24a"/><rect x="614" y="943" width="9" height="10" rx="2" fill="#1f5cc4"/><rect x="617.3" y="943" width="1.2" height="10" fill="#123a8a"/>
</svg>
<div class="abs" style="left:95px;top:130px;font-size:18.4px;line-height:24px;font-weight:bold;color:#cdcdcd;white-space:nowrap;letter-spacing:-0.3px">图标点-智慧交通道路事件情况</div>
<div class="abs" style="left:95px;top:159px;font-size:12.1px;line-height:16px;color:#8c8c8c;white-space:nowrap;letter-spacing:-0.03px">某一时刻检测道路的交通事件情况，通过数据分布对实时交通进行治理和管控</div>
<div class="abs" style="left:471px;top:103px;width:152px;height:28px;background:#000"></div>
<div class="abs" style="left:471px;top:131px;width:152px;height:20.6px;background:#000;border-top:1px solid #2e2e2e;overflow:hidden"></div>
<div class="abs" style="left:478.6px;top:113.5px;width:0;height:0;border:3px solid transparent;border-left:4px solid #eee"></div>
<div class="abs" style="left:487px;top:110.5px;font-size:12.5px;line-height:17px;color:#eee">图层</div>
<div class="abs" style="left:552px;top:134px;width:71px;overflow:hidden;font-size:12.5px;line-height:17px;color:#eee;white-space:nowrap">Close Controls</div>
<div class="abs" style="left:0;top:103px;width:623px;height:1px;background:#1d1f24"></div>
<div class="abs" style="left:623px;top:56px;width:1064px;height:54px;background:#f1f3f4"></div>
<div class="abs" style="left:623px;top:56px;width:1.2px;height:901px;background:#f6f7f9"></div>
<div class="abs" style="left:623px;top:55px;width:1064px;height:1px;background:#dadce0"></div>
<div class="abs" style="left:624px;top:82px;width:1063px;height:1px;background:#cbcdd1"></div>
<div class="abs" style="left:624px;top:109px;width:1063px;height:1px;background:#cbcdd1"></div>
<svg class="abs" style="left:633px;top:61px" width="16" height="16" viewBox="0 0 16 16"><path d="M9 11.5 H1.5 V1.5 H11.5 V6" stroke="#5f6368" stroke-width="1.3" fill="none"/><path d="M6 5.5 L13.5 8.5 L10.5 9.8 L13 13 L11.8 14 L9.3 10.8 L7.5 13 Z" fill="#5f6368"/></svg>
<svg class="abs" style="left:659px;top:60px" width="17" height="18" viewBox="0 0 17 18"><path d="M4.5 5 V1.5 H15 V16 H8" stroke="#5f6368" stroke-width="1.3" fill="none"/><rect x="1.6" y="6" width="6" height="10" stroke="#5f6368" stroke-width="1.3" fill="#f1f3f4"/></svg>
<div class="abs" style="left:686px;top:61px;width:1px;height:16px;background:#cbcdd1"></div>
<div class="abs tab" style="left:704px;color:#5f6368">Elements</div>
<div class="abs tab" style="left:775px;color:#5f6368">Console</div>
<div class="abs tab" style="left:841px;color:#5f6368">Sources</div>
<div class="abs tab" style="left:906px;color:#5f6368">Network</div>
<div class="abs tab" style="left:975px;color:#333">Performance</div>
<div class="abs tab" style="left:1065.5px;color:#5f6368">Memory</div>
<div class="abs tab" style="left:1133px;color:#5f6368">Application</div>
<div class="abs tab" style="left:1217px;color:#5f6368">Security</div>
<div class="abs tab" style="left:1292px;color:#5f6368">Lighthouse</div>
<div class="abs tab" style="left:1374px;color:#5f6368">Recorder</div>
<div class="abs tab" style="left:1468px;color:#5f6368">Performance insights</div>
<div class="abs" style="left:964px;top:81px;width:89px;height:2px;background:#1a73e8"></div>
<svg class="abs" style="left:1426px;top:62px" width="11" height="12" viewBox="0 0 11 12"><path d="M3.5 0.5 H7.5 V1.8 H7 V5 L10.4 10.6 Q10.6 11.5 9.6 11.5 H1.4 Q0.4 11.5 0.6 10.6 L4 5 V1.8 H3.5 Z" fill="#5f6368"/></svg>
<svg class="abs" style="left:1584px;top:62px" width="11" height="12" viewBox="0 0 11 12"><path d="M3.5 0.5 H7.5 V1.8 H7 V5 L10.4 10.6 Q10.6 11.5 9.6 11.5 H1.4 Q0.4 11.5 0.6 10.6 L4 5 V1.8 H3.5 Z" fill="#5f6368"/></svg>
<div class="abs" style="left:1618px;top:60px;width:34px;height:19px;border:1px solid #cbcdd1;border-radius:2px;background:#f3f4f5"></div>
<svg class="abs" style="left:1625px;top:63px" width="11" height="12" viewBox="0 0 11 12"><path d="M0.5 0.5 H10.5 V9 H3 L0.5 11.5 Z" fill="#f29900"/><rect x="4.8" y="2" width="1.6" height="4" fill="#fff"/><rect x="4.8" y="6.8" width="1.6" height="1.4" fill="#fff"/></svg>
<div class="abs" style="left:1640px;top:62px;font-size:12px;line-height:15px;color:#5f6368">1</div>
<div class="abs" style="left:1659px;top:61px;width:1px;height:16px;background:#cbcdd1"></div>
<svg class="abs" style="left:1670px;top:61px" width="16" height="16" viewBox="-8 -8 16 16"><g fill="#5f6368"><circle r="5.2"/><rect x="-1.7" y="-7.4" width="3.4" height="4" transform="rotate(0)"/><rect x="-1.7" y="-7.4" width="3.4" height="4" transform="rotate(45)"/><rect x="-1.7" y="-7.4" width="3.4" height="4" transform="rotate(90)"/><rect x="-1.7" y="-7.4" width="3.4" height="4" transform="rotate(135)"/><rect x="-1.7" y="-7.4" width="3.4" height="4" transform="rotate(180)"/><rect x="-1.7" y="-7.4" width="3.4" height="4" transform="rotate(225)"/><rect x="-1.7" y="-7.4" width="3.4" height="4" transform="rotate(270)"/><rect x="-1.7" y="-7.4" width="3.4" height="4" transform="rotate(315)"/></g><circle r="2.3" fill="#f1f3f4"/></svg>
<div class="abs" style="left:634px;top:90.5px;width:11.5px;height:11.5px;border-radius:6px;background:#5f6368"></div>
<svg class="abs" style="left:660px;top:88px" width="16" height="16" viewBox="0 0 16 16"><path d="M12.6 5.2 A5.2 5.2 0 1 0 13.2 9.5" stroke="#5f6368" stroke-width="1.6" fill="none"/><path d="M13.6 2.2 V6.6 H9.2 Z" fill="#5f6368"/></svg>
<svg class="abs" style="left:689px;top:89px" width="15" height="15" viewBox="0 0 15 15"><circle cx="7.5" cy="7.5" r="5.6" stroke="#5f6368" stroke-width="1.5" fill="none"/><path d="M3.6 3.6 L11.4 11.4" stroke="#5f6368" stroke-width="1.5"/></svg>
<div class="abs" style="left:714px;top:88px;width:1px;height:16px;background:#cbcdd1"></div>
<svg class="abs" style="left:727px;top:89px" width="12" height="14" viewBox="0 0 12 14"><path d="M6 0.8 L10.6 6 H7.8 V10 H4.2 V6 H1.4 Z M1 12 H11 V13.4 H1 Z" fill="#5f6368"/></svg>
<svg class="abs" style="left:755px;top:89px" width="12" height="14" viewBox="0 0 12 14"><path d="M6 10.2 L10.6 5 H7.8 V1 H4.2 V5 H1.4 Z M1 12 H11 V13.4 H1 Z" fill="#5f6368"/></svg>
<div class="abs" style="left:779px;top:88px;width:1px;height:16px;background:#cbcdd1"></div>
<div class="abs" style="left:790px;top:90px;font-size:12px;line-height:15px;color:#a8abb0;white-space:nowrap;letter-spacing:0">developer.amap.com #1</div>
<div class="abs" style="left:933px;top:93px;width:0;height:0;border:4px solid transparent;border-top:6px solid #a8abb0;border-bottom:0"></div>
<div class="abs" style="left:948px;top:88px;width:1px;height:16px;background:#cbcdd1"></div>
<div class="abs" style="left:959px;top:90.5px;width:12px;height:12px;border-radius:2px;background:#1a73e8"></div>
<svg class="abs" style="left:959px;top:90.5px" width="12" height="12" viewBox="0 0 12 12"><path d="M2.6 6.2 L5 8.6 L9.6 3.4" stroke="#fff" stroke-width="1.6" fill="none"/></svg>
<div class="abs" style="left:976px;top:90px;font-size:12px;line-height:15px;color:#44484d;white-space:nowrap">Screenshots</div>
<div class="abs" style="left:1052px;top:90.5px;width:12px;height:12px;border-radius:2px;background:#1a73e8"></div>
<svg class="abs" style="left:1052px;top:90.5px" width="12" height="12" viewBox="0 0 12 12"><path d="M2.6 6.2 L5 8.6 L9.6 3.4" stroke="#fff" stroke-width="1.6" fill="none"/></svg>
<div class="abs" style="left:1069px;top:90px;font-size:12px;line-height:15px;color:#44484d;white-space:nowrap">Memory</div>
<div class="abs" style="left:1125px;top:90.5px;width:12px;height:12px;border-radius:2px;background:#1a73e8"></div>
<svg class="abs" style="left:1125px;top:90.5px" width="12" height="12" viewBox="0 0 12 12"><path d="M2.6 6.2 L5 8.6 L9.6 3.4" stroke="#fff" stroke-width="1.6" fill="none"/></svg>
<div class="abs" style="left:1143px;top:90px;font-size:12px;line-height:15px;color:#44484d;white-space:nowrap">Web Vitals</div>
<svg class="abs" style="left:1212px;top:88px" width="12" height="15" viewBox="0 0 12 15"><path d="M4 0.8 H8 V2 H11 V3.6 H1 V2 H4 Z M1.8 4.6 H10.2 V13 Q10.2 14.2 9 14.2 H3 Q1.8 14.2 1.8 13 Z" fill="#5f6368"/></svg>
<div class="abs" style="left:624px;top:110px;width:1063px;height:104px;background:#ecf0fa"></div>
<div class="abs" style="left:1576.9px;top:110px;width:10.4px;height:19px;background:#fff"></div>
<div class="abs" style="left:714.0px;top:110px;width:1px;height:104px;background:#d3d8e6"></div>
<div class="abs ovl" style="left:631.0px">2000 ms</div>
<div class="abs" style="left:804.5px;top:110px;width:1px;height:104px;background:#d3d8e6"></div>
<div class="abs ovl" style="left:721.5px">4000 ms</div>
<div class="abs" style="left:895.1px;top:110px;width:1px;height:104px;background:#d3d8e6"></div>
<div class="abs ovl" style="left:812.1px">6000 ms</div>
<div class="abs" style="left:985.6px;top:110px;width:1px;height:104px;background:#d3d8e6"></div>
<div class="abs ovl" style="left:902.6px">8000 ms</div>
<div class="abs" style="left:1076.2px;top:110px;width:1px;height:104px;background:#d3d8e6"></div>
<div class="abs ovl" style="left:993.2px">10000 ms</div>
<div class="abs" style="left:1166.8px;top:110px;width:1px;height:104px;background:#d3d8e6"></div>
<div class="abs ovl" style="left:1083.8px">12000 ms</div>
<div class="abs" style="left:1257.3px;top:110px;width:1px;height:104px;background:#d3d8e6"></div>
<div class="abs ovl" style="left:1174.3px">14000 ms</div>
<div class="abs" style="left:1347.8px;top:110px;width:1px;height:104px;background:#d3d8e6"></div>
<div class="abs ovl" style="left:1264.8px">16000 ms</div>
<div class="abs" style="left:1438.4px;top:110px;width:1px;height:104px;background:#d3d8e6"></div>
<div class="abs ovl" style="left:1355.4px">18000 ms</div>
<div class="abs" style="left:1528.9px;top:110px;width:1px;height:104px;background:#d3d8e6"></div>
<div class="abs ovl" style="left:1445.9px">20000 ms</div>
<div class="abs" style="left:1619.5px;top:110px;width:1px;height:104px;background:#d3d8e6"></div>
<div class="abs ovl" style="left:1536.5px">22000 ms</div>
<div class="abs" style="left:1710.0px;top:110px;width:1px;height:104px;background:#d3d8e6"></div>
<div class="abs ovl" style="left:1627.0px">24000 ms</div>
<div class="abs" style="left:642px;top:122.3px;width:1045px;height:4.6px;background:linear-gradient(90deg,#e8101c 0.0px,#e8101c 3.4px,#f6c6cf 3.4px,#f6c6cf 6.2px,#e8101c 6.2px,#e8101c 11.8px,#f6c6cf 11.8px,#f6c6cf 14.6px,#e8101c 14.6px,#e8101c 20.2px,#f6c6cf 20.2px,#f6c6cf 22.6px,#e8101c 22.6px,#e8101c 26.0px,#f6c6cf 26.0px,#f6c6cf 28.8px,#e8101c 28.8px,#e8101c 34.4px,#f6c6cf 34.4px,#f6c6cf 36.8px,#e8101c 36.8px,#e8101c 40.0px,#f6c6cf 40.0px,#f6c6cf 42.4px,#e8101c 42.4px,#e8101c 45.6px,#f6c6cf 45.6px,#f6c6cf 48.6px,#e8101c 48.6px,#e8101c 51.8px,#f6c6cf 51.8px,#f6c6cf 54.8px,#e8101c 54.8px,#e8101c 58.2px,#f6c6cf 58.2px,#f6c6cf 60.6px,#e8101c 60.6px,#e8101c 64.0px,#f6c6cf 64.0px,#f6c6cf 66.8px,#e8101c 66.8px,#e8101c 69.6px,#f6c6cf 69.6px,#f6c6cf 72.4px,#e8101c 72.4px,#e8101c 75.8px,#f6c6cf 75.8px,#f6c6cf 78.6px,#e8101c 78.6px,#e8101c 81.8px,#f6c6cf 81.8px,#f6c6cf 84.8px,#e8101c 84.8px,#e8101c 88.0px,#f6c6cf 88.0px,#f6c6cf 90.4px,#e8101c 90.4px,#e8101c 93.6px,#f6c6cf 93.6px,#f6c6cf 96.6px,#e8101c 96.6px,#e8101c 99.8px,#f6c6cf 99.8px,#f6c6cf 102.6px,#e8101c 102.6px,#e8101c 105.4px,#f6c6cf 105.4px,#f6c6cf 107.8px,#e8101c 107.8px,#e8101c 111.0px,#f6c6cf 111.0px,#f6c6cf 113.8px,#e8101c 113.8px,#e8101c 117.0px,#f6c6cf 117.0px,#f6c6cf 119.8px,#e8101c 119.8px,#e8101c 123.0px,#f6c6cf 123.0px,#f6c6cf 125.8px,#e8101c 125.8px,#e8101c 129.0px,#f6c6cf 129.0px,#f6c6cf 131.8px,#e8101c 131.8px,#e8101c 135.0px,#f6c6cf 135.0px,#f6c6cf 137.8px,#e8101c 137.8px,#e8101c 141.2px,#f6c6cf 141.2px,#f6c6cf 144.0px,#e8101c 144.0px,#e8101c 146.8px,#f6c6cf 146.8px,#f6c6cf 149.6px,#e8101c 149.6px,#e8101c 153.0px,#f6c6cf 153.0px,#f6c6cf 155.8px,#e8101c 155.8px,#e8101c 159.0px,#f6c6cf 159.0px,#f6c6cf 161.8px,#e8101c 161.8px,#e8101c 164.6px,#f6c6cf 164.6px,#f6c6cf 167.4px,#e8101c 167.4px,#e8101c 170.6px,#f6c6cf 170.6px,#f6c6cf 173.0px,#e8101c 173.0px,#e8101c 176.4px,#f6c6cf 176.4px,#f6c6cf 179.2px,#e8101c 179.2px,#e8101c 182.0px,#f6c6cf 182.0px,#f6c6cf 184.8px,#e8101c 184.8px,#e8101c 188.0px,#f6c6cf 188.0px,#f6c6cf 190.8px,#e8101c 190.8px,#e8101c 194.2px,#f6c6cf 194.2px,#f6c6cf 197.0px,#e8101c 197.0px,#e8101c 200.2px,#f6c6cf 200.2px,#f6c6cf 203.2px,#e8101c 203.2px,#e8101c 206.6px,#f6c6cf 206.6px,#f6c6cf 209.4px,#e8101c 209.4px,#e8101c 212.2px,#f6c6cf 212.2px,#f6c6cf 215.0px,#e8101c 215.0px,#e8101c 217.8px,#f6c6cf 217.8px,#f6c6cf 220.6px,#e8101c 220.6px,#e8101c 224.0px,#f6c6cf 224.0px,#f6c6cf 226.4px,#e8101c 226.4px,#e8101c 229.8px,#f6c6cf 229.8px,#f6c6cf 232.8px,#e8101c 232.8px,#e8101c 236.0px,#f6c6cf 236.0px,#f6c6cf 239.0px,#e8101c 239.0px,#e8101c 242.4px,#f6c6cf 242.4px,#f6c6cf 244.8px,#e8101c 244.8px,#e8101c 248.2px,#f6c6cf 248.2px,#f6c6cf 250.6px,#e8101c 250.6px,#e8101c 256.2px,#f6c6cf 256.2px,#f6c6cf 259.0px,#e8101c 259.0px,#e8101c 262.4px,#f6c6cf 262.4px,#f6c6cf 265.2px,#e8101c 265.2px,#e8101c 268.0px,#f6c6cf 268.0px,#f6c6cf 270.8px,#e8101c 270.8px,#e8101c 274.2px,#f6c6cf 274.2px,#f6c6cf 277.0px,#e8101c 277.0px,#e8101c 280.4px,#f6c6cf 280.4px,#f6c6cf 283.2px,#e8101c 283.2px,#e8101c 286.6px,#f6c6cf 286.6px,#f6c6cf 289.4px,#e8101c 289.4px,#e8101c 292.8px,#f6c6cf 292.8px,#f6c6cf 295.2px,#e8101c 295.2px,#e8101c 298.6px,#f6c6cf 298.6px,#f6c6cf 301.4px,#e8101c 301.4px,#e8101c 304.6px,#f6c6cf 304.6px,#f6c6cf 307.0px,#e8101c 307.0px,#e8101c 310.4px,#f6c6cf 310.4px,#f6c6cf 312.8px,#e8101c 312.8px,#e8101c 316.0px,#f6c6cf 316.0px,#f6c6cf 318.8px,#e8101c 318.8px,#e8101c 322.2px,#f6c6cf 322.2px,#f6c6cf 325.0px,#e8101c 325.0px,#e8101c 328.2px,#f6c6cf 328.2px,#f6c6cf 331.0px,#e8101c 331.0px,#e8101c 334.2px,#f6c6cf 334.2px,#f6c6cf 336.6px,#e8101c 336.6px,#e8101c 339.8px,#f6c6cf 339.8px,#f6c6cf 342.6px,#e8101c 342.6px,#e8101c 345.8px,#f6c6cf 345.8px,#f6c6cf 348.6px,#e8101c 348.6px,#e8101c 351.4px,#f6c6cf 351.4px,#f6c6cf 354.2px,#e8101c 354.2px,#e8101c 359.8px,#f6c6cf 359.8px,#f6c6cf 362.6px,#e8101c 362.6px,#e8101c 366.0px,#f6c6cf 366.0px,#f6c6cf 368.8px,#e8101c 368.8px,#e8101c 374.4px,#f6c6cf 374.4px,#f6c6cf 376.8px,#e8101c 376.8px,#e8101c 379.6px,#f6c6cf 379.6px,#f6c6cf 382.6px,#e8101c 382.6px,#e8101c 385.4px,#f6c6cf 385.4px,#f6c6cf 388.2px,#e8101c 388.2px,#e8101c 393.8px,#f6c6cf 393.8px,#f6c6cf 396.6px,#e8101c 396.6px,#e8101c 399.8px,#f6c6cf 399.8px,#f6c6cf 402.8px,#e8101c 402.8px,#e8101c 408.4px,#f6c6cf 408.4px,#f6c6cf 411.4px,#e8101c 411.4px,#e8101c 414.6px,#f6c6cf 414.6px,#f6c6cf 417.0px,#e8101c 417.0px,#e8101c 422.6px,#f6c6cf 422.6px,#f6c6cf 425.0px,#e8101c 425.0px,#e8101c 428.4px,#f6c6cf 428.4px,#f6c6cf 431.2px,#e8101c 431.2px,#e8101c 434.4px,#f6c6cf 434.4px,#f6c6cf 437.2px,#e8101c 437.2px,#e8101c 442.8px,#f6c6cf 442.8px,#f6c6cf 445.6px,#e8101c 445.6px,#e8101c 451.2px,#f6c6cf 451.2px,#f6c6cf 454.2px,#e8101c 454.2px,#e8101c 457.0px,#f6c6cf 457.0px,#f6c6cf 459.8px,#e8101c 459.8px,#e8101c 463.2px,#f6c6cf 463.2px,#f6c6cf 466.0px,#e8101c 466.0px,#e8101c 469.2px,#f6c6cf 469.2px,#f6c6cf 471.6px,#e8101c 471.6px,#e8101c 475.0px,#f6c6cf 475.0px,#f6c6cf 477.8px,#e8101c 477.8px,#e8101c 481.0px,#f6c6cf 481.0px,#f6c6cf 484.0px,#e8101c 484.0px,#e8101c 487.4px,#f6c6cf 487.4px,#f6c6cf 490.2px,#e8101c 490.2px,#e8101c 493.6px,#f6c6cf 493.6px,#f6c6cf 496.6px,#e8101c 496.6px,#e8101c 500.0px,#f6c6cf 500.0px,#f6c6cf 502.8px,#e8101c 502.8px,#e8101c 506.2px,#f6c6cf 506.2px,#f6c6cf 509.0px,#e8101c 509.0px,#e8101c 512.2px,#f6c6cf 512.2px,#f6c6cf 515.2px,#e8101c 515.2px,#e8101c 518.6px,#f6c6cf 518.6px,#f6c6cf 521.4px,#e8101c 521.4px,#e8101c 524.2px,#f6c6cf 524.2px,#f6c6cf 527.2px,#e8101c 527.2px,#e8101c 530.6px,#f6c6cf 530.6px,#f6c6cf 533.4px,#e8101c 533.4px,#e8101c 539.0px,#f6c6cf 539.0px,#f6c6cf 542.0px,#e8101c 542.0px,#e8101c 545.2px,#f6c6cf 545.2px,#f6c6cf 548.0px,#e8101c 548.0px,#e8101c 550.8px,#f6c6cf 550.8px,#f6c6cf 553.8px,#e8101c 553.8px,#e8101c 557.0px,#f6c6cf 557.0px,#f6c6cf 559.8px,#e8101c 559.8px,#e8101c 562.6px,#f6c6cf 562.6px,#f6c6cf 565.4px,#e8101c 565.4px,#e8101c 571.0px,#f6c6cf 571.0px,#f6c6cf 573.4px,#e8101c 573.4px,#e8101c 576.6px,#f6c6cf 576.6px,#f6c6cf 579.4px,#e8101c 579.4px,#e8101c 582.8px,#f6c6cf 582.8px,#f6c6cf 585.6px,#e8101c 585.6px,#e8101c 589.0px,#f6c6cf 589.0px,#f6c6cf 591.8px,#e8101c 591.8px,#e8101c 597.4px,#f6c6cf 597.4px,#f6c6cf 600.2px,#e8101c 600.2px,#e8101c 603.4px,#f6c6cf 603.4px,#f6c6cf 606.2px,#e8101c 606.2px,#e8101c 609.6px,#f6c6cf 609.6px,#f6c6cf 612.0px,#e8101c 612.0px,#e8101c 615.4px,#f6c6cf 615.4px,#f6c6cf 618.2px,#e8101c 618.2px,#e8101c 621.4px,#f6c6cf 621.4px,#f6c6cf 624.2px,#e8101c 624.2px,#e8101c 627.6px,#f6c6cf 627.6px,#f6c6cf 630.4px,#e8101c 630.4px,#e8101c 633.8px,#f6c6cf 633.8px,#f6c6cf 636.6px,#e8101c 636.6px,#e8101c 639.8px,#f6c6cf 639.8px,#f6c6cf 642.6px,#e8101c 642.6px,#e8101c 648.2px,#f6c6cf 648.2px,#f6c6cf 651.0px,#e8101c 651.0px,#e8101c 656.6px,#f6c6cf 656.6px,#f6c6cf 659.6px,#e8101c 659.6px,#e8101c 662.8px,#f6c6cf 662.8px,#f6c6cf 665.6px,#e8101c 665.6px,#e8101c 671.2px,#f6c6cf 671.2px,#f6c6cf 674.2px,#e8101c 674.2px,#e8101c 677.4px,#f6c6cf 677.4px,#f6c6cf 680.2px,#e8101c 680.2px,#e8101c 683.6px,#f6c6cf 683.6px,#f6c6cf 686.4px,#e8101c 686.4px,#e8101c 689.8px,#f6c6cf 689.8px,#f6c6cf 692.6px,#e8101c 692.6px,#e8101c 695.8px,#f6c6cf 695.8px,#f6c6cf 698.6px,#e8101c 698.6px,#e8101c 702.0px,#f6c6cf 702.0px,#f6c6cf 704.8px,#e8101c 704.8px,#e8101c 710.4px,#f6c6cf 710.4px,#f6c6cf 712.8px,#e8101c 712.8px,#e8101c 718.4px,#f6c6cf 718.4px,#f6c6cf 721.4px,#e8101c 721.4px,#e8101c 724.6px,#f6c6cf 724.6px,#f6c6cf 727.6px,#e8101c 727.6px,#e8101c 730.8px,#f6c6cf 730.8px,#f6c6cf 733.6px,#e8101c 733.6px,#e8101c 739.2px,#f6c6cf 739.2px,#f6c6cf 741.6px,#e8101c 741.6px,#e8101c 744.8px,#f6c6cf 744.8px,#f6c6cf 747.6px,#e8101c 747.6px,#e8101c 751.0px,#f6c6cf 751.0px,#f6c6cf 754.0px,#e8101c 754.0px,#e8101c 757.4px,#f6c6cf 757.4px,#f6c6cf 760.2px,#e8101c 760.2px,#e8101c 763.4px,#f6c6cf 763.4px,#f6c6cf 766.2px,#e8101c 766.2px,#e8101c 771.8px,#f6c6cf 771.8px,#f6c6cf 774.2px,#e8101c 774.2px,#e8101c 777.6px,#f6c6cf 777.6px,#f6c6cf 780.4px,#e8101c 780.4px,#e8101c 783.6px,#f6c6cf 783.6px,#f6c6cf 786.0px,#e8101c 786.0px,#e8101c 789.2px,#f6c6cf 789.2px,#f6c6cf 791.6px,#e8101c 791.6px,#e8101c 794.8px,#f6c6cf 794.8px,#f6c6cf 797.6px,#e8101c 797.6px,#e8101c 801.0px,#f6c6cf 801.0px,#f6c6cf 803.8px,#e8101c 803.8px,#e8101c 807.2px,#f6c6cf 807.2px,#f6c6cf 809.6px,#e8101c 809.6px,#e8101c 813.0px,#f6c6cf 813.0px,#f6c6cf 816.0px,#e8101c 816.0px,#e8101c 819.2px,#f6c6cf 819.2px,#f6c6cf 822.2px,#e8101c 822.2px,#e8101c 827.8px,#f6c6cf 827.8px,#f6c6cf 830.2px,#e8101c 830.2px,#e8101c 833.6px,#f6c6cf 833.6px,#f6c6cf 836.4px,#e8101c 836.4px,#e8101c 839.6px,#f6c6cf 839.6px,#f6c6cf 842.4px,#e8101c 842.4px,#e8101c 845.2px,#f6c6cf 845.2px,#f6c6cf 848.0px,#e8101c 848.0px,#e8101c 851.4px,#f6c6cf 851.4px,#f6c6cf 854.2px,#e8101c 854.2px,#e8101c 857.6px,#f6c6cf 857.6px,#f6c6cf 860.0px,#e8101c 860.0px,#e8101c 865.6px,#f6c6cf 865.6px,#f6c6cf 868.4px,#e8101c 868.4px,#e8101c 871.2px,#f6c6cf 871.2px,#f6c6cf 874.0px,#e8101c 874.0px,#e8101c 876.8px,#f6c6cf 876.8px,#f6c6cf 879.6px,#e8101c 879.6px,#e8101c 883.0px,#f6c6cf 883.0px,#f6c6cf 885.8px,#e8101c 885.8px,#e8101c 889.2px,#f6c6cf 889.2px,#f6c6cf 892.0px,#e8101c 892.0px,#e8101c 895.2px,#f6c6cf 895.2px,#f6c6cf 898.0px,#e8101c 898.0px,#e8101c 901.4px,#f6c6cf 901.4px,#f6c6cf 904.4px,#e8101c 904.4px,#e8101c 907.8px,#f6c6cf 907.8px,#f6c6cf 910.6px,#e8101c 910.6px,#e8101c 914.0px,#f6c6cf 914.0px,#f6c6cf 916.8px,#e8101c 916.8px,#e8101c 920.0px,#f6c6cf 920.0px,#f6c6cf 923.0px,#e8101c 923.0px,#e8101c 926.4px,#f6c6cf 926.4px,#f6c6cf 929.4px,#e8101c 929.4px,#e8101c 932.6px,#f6c6cf 932.6px,#f6c6cf 935.4px,#e8101c 935.4px,#e8101c 938.8px,#f6c6cf 938.8px,#f6c6cf 941.2px,#e8101c 941.2px,#e8101c 944.4px,#f6c6cf 944.4px,#f6c6cf 946.8px,#e8101c 946.8px,#e8101c 950.2px,#f6c6cf 950.2px,#f6c6cf 952.6px,#e8101c 952.6px,#e8101c 955.8px,#f6c6cf 955.8px,#f6c6cf 958.6px,#e8101c 958.6px,#e8101c 961.8px,#f6c6cf 961.8px,#f6c6cf 964.8px,#e8101c 964.8px,#e8101c 968.2px,#f6c6cf 968.2px,#f6c6cf 971.2px,#e8101c 971.2px,#e8101c 974.4px,#f6c6cf 974.4px,#f6c6cf 977.4px,#e8101c 977.4px,#e8101c 980.6px,#f6c6cf 980.6px,#f6c6cf 983.6px,#e8101c 983.6px,#e8101c 989.2px,#f6c6cf 989.2px,#f6c6cf 992.2px,#e8101c 992.2px,#e8101c 995.6px,#f6c6cf 995.6px,#f6c6cf 998.4px,#e8101c 998.4px,#e8101c 1001.8px,#f6c6cf 1001.8px,#f6c6cf 1004.6px,#e8101c 1004.6px,#e8101c 1010.2px,#f6c6cf 1010.2px,#f6c6cf 1013.0px,#e8101c 1013.0px,#e8101c 1016.4px,#f6c6cf 1016.4px,#f6c6cf 1019.2px,#e8101c 1019.2px,#e8101c 1022.6px,#f6c6cf 1022.6px,#f6c6cf 1025.0px,#e8101c 1025.0px,#e8101c 1028.2px,#f6c6cf 1028.2px,#f6c6cf 1031.0px,#e8101c 1031.0px,#e8101c 1034.4px,#f6c6cf 1034.4px,#f6c6cf 1037.2px,#e8101c 1037.2px,#e8101c 1040.4px,#f6c6cf 1040.4px,#f6c6cf 1043.4px,#e8101c 1043.4px,#e8101c 1046.2px,#f6c6cf 1046.2px,#f6c6cf 1048.6px)"></div>
<svg class="abs" style="left:624px;top:110px" width="1063" height="104" viewBox="624 110 1063 104"><defs><pattern id="dots" width="3" height="3" patternUnits="userSpaceOnUse"><rect width="3" height="3" fill="#e9c05f"/><rect x="0" y="0" width="1" height="1" fill="#d3a944"/><rect x="1.5" y="1.5" width="1" height="1" fill="#dbb24e"/></pattern></defs>
<polygon points="636,148.7 640,133 644,129.6 1690,129.6 1690,148.7" fill="#c6c9d2"/>
<polygon points="640,148.7 642,136 645,131.5 646.0,131.0 651.2,130.5 659.4,130.3 665.5,131.7 668.9,131.2 675.6,130.4 680.9,131.4 686.6,131.5 690.6,130.7 694.2,131.1 702.8,131.2 710.4,130.9 717.9,130.5 722.6,131.4 730.0,131.0 733.5,130.7 737.8,130.7 745.6,130.6 754.0,131.7 757.3,130.9 763.2,130.3 768.8,131.8 772.5,131.3 776.2,131.2 784.6,130.6 787.6,130.4 793.8,130.3 797.4,131.1 805.9,131.0 811.3,131.3 814.8,131.2 818.9,131.3 827.6,130.4 833.9,131.3 837.8,130.7 846.8,131.9 850.5,131.4 859.2,130.7 865.9,130.4 871.1,131.4 877.7,131.5 881.2,130.9 889.4,131.2 895.1,130.9 904.0,131.2 907.1,131.6 912.1,131.0 916.3,131.0 921.3,130.4 928.1,130.5 935.8,130.3 943.5,131.6 949.4,131.4 953.9,131.5 959.5,130.7 968.3,130.9 973.5,131.7 978.7,131.4 982.7,131.6 987.3,130.4 996.2,130.6 1004.8,131.9 1011.5,130.3 1014.8,130.6 1020.2,131.3 1029.0,130.9 1032.8,131.2 1036.6,130.4 1043.0,131.4 1046.4,131.0 1053.6,131.5 1058.9,131.7 1062.9,131.4 1070.5,131.7 1076.5,130.5 1079.8,131.1 1083.8,131.3 1087.3,131.5 1091.7,130.3 1095.7,131.0 1102.1,130.9 1106.1,131.1 1114.8,131.2 1123.4,130.3 1132.4,131.7 1138.7,131.1 1144.9,131.8 1148.3,131.3 1154.5,130.8 1161.9,131.5 1165.5,131.4 1171.2,131.1 1178.0,130.4 1184.7,130.9 1192.9,130.7 1200.9,131.5 1207.6,131.7 1210.8,131.3 1217.5,131.4 1223.0,130.4 1227.1,131.3 1231.2,130.4 1236.3,131.1 1242.5,130.3 1250.2,130.8 1257.9,130.3 1266.6,131.2 1275.5,131.9 1283.5,130.5 1288.5,130.7 1296.2,130.6 1300.6,130.5 1304.3,131.8 1313.1,130.9 1320.6,131.0 1326.7,130.9 1333.5,130.7 1338.1,131.1 1342.2,131.0 1350.9,130.3 1354.5,131.6 1357.9,130.7 1366.0,131.3 1370.3,130.4 1375.0,130.8 1382.8,131.9 1390.5,131.7 1399.1,131.7 1407.6,131.8 1411.1,130.8 1415.6,131.3 1421.6,130.9 1429.6,130.9 1433.9,130.7 1439.6,131.3 1446.0,131.0 1450.2,130.9 1455.1,130.6 1461.4,130.6 1468.6,131.4 1472.5,131.3 1477.5,131.0 1484.1,131.5 1492.4,131.5 1496.7,131.2 1501.7,130.3 1508.0,131.1 1516.2,130.8 1524.2,131.1 1527.8,131.4 1532.5,131.2 1536.0,130.3 1544.5,130.4 1548.4,130.6 1552.0,131.6 1560.9,131.3 1566.3,131.7 1572.3,130.5 1579.5,130.9 1584.1,130.8 1589.4,130.6 1596.1,131.7 1602.5,130.3 1609.6,130.3 1615.5,131.7 1622.6,131.8 1630.1,130.7 1633.9,131.0 1641.0,130.7 1646.0,131.5 1651.1,131.3 1657.4,131.8 1660.5,130.6 1668.2,131.4 1671.8,130.5 1676.0,131.2 1684.5,130.6 1688.7,131.4 1690,148.7" fill="url(#dots)"/>
<polygon points="754,129.6 762,129.6 758,136.5" fill="#c6c9d2"/>
<polygon points="886,129.6 894,129.6 890,132" fill="#c6c9d2"/>
<polygon points="962,129.6 970,129.6 966,133" fill="#c6c9d2"/>
<polygon points="1177,129.6 1185,129.6 1181,133.5" fill="#c6c9d2"/>
<polygon points="1225,129.6 1233,129.6 1229,131.5" fill="#c6c9d2"/>
<polygon points="1383,129.6 1391,129.6 1387,135.5" fill="#c6c9d2"/>
<polygon points="1606,129.6 1614,129.6 1610,133.5" fill="#c6c9d2"/>
<polygon points="1556,129.6 1564,129.6 1560,131.5" fill="#c6c9d2"/>
<polygon points="1086,129.6 1094,129.6 1090,131.5" fill="#c6c9d2"/>
<polygon points="826,129.6 834,129.6 830,131.5" fill="#c6c9d2"/>
<ellipse cx="900.6" cy="148.6" rx="2.1" ry="0.7" fill="#a98cf0" opacity="0.75"/>
<ellipse cx="1036.8" cy="148.6" rx="2.2" ry="0.7" fill="#a98cf0" opacity="0.75"/>
<ellipse cx="1300.7" cy="148.6" rx="1.3" ry="0.7" fill="#a98cf0" opacity="0.75"/>
<ellipse cx="668.6" cy="148.6" rx="2.5" ry="0.7" fill="#a98cf0" opacity="0.75"/>
<ellipse cx="922.7" cy="148.6" rx="1.6" ry="0.7" fill="#a98cf0" opacity="0.75"/>
<ellipse cx="1682.5" cy="148.6" rx="2.0" ry="0.7" fill="#a98cf0" opacity="0.75"/>
<ellipse cx="1518.2" cy="148.6" rx="2.0" ry="0.7" fill="#a98cf0" opacity="0.75"/>
<ellipse cx="1314.5" cy="148.6" rx="1.5" ry="0.7" fill="#a98cf0" opacity="0.75"/>
<ellipse cx="1310.2" cy="148.6" rx="2.6" ry="0.7" fill="#a98cf0" opacity="0.75"/>
<ellipse cx="1194.9" cy="148.6" rx="2.4" ry="0.7" fill="#a98cf0" opacity="0.75"/>
<ellipse cx="1347.9" cy="148.6" rx="1.3" ry="0.7" fill="#a98cf0" opacity="0.75"/>
<ellipse cx="1437.5" cy="148.6" rx="2.1" ry="0.7" fill="#a98cf0" opacity="0.75"/>
<ellipse cx="965.9" cy="148.6" rx="1.3" ry="0.7" fill="#a98cf0" opacity="0.75"/>
<ellipse cx="1548.2" cy="148.6" rx="2.0" ry="0.7" fill="#a98cf0" opacity="0.75"/>
<ellipse cx="1396.8" cy="148.6" rx="2.6" ry="0.7" fill="#a98cf0" opacity="0.75"/>
<ellipse cx="1392.0" cy="148.6" rx="2.6" ry="0.7" fill="#a98cf0" opacity="0.75"/>
<ellipse cx="1062.6" cy="148.6" rx="2.5" ry="0.7" fill="#a98cf0" opacity="0.75"/>
<ellipse cx="1113.8" cy="148.6" rx="2.7" ry="0.7" fill="#a98cf0" opacity="0.75"/>
<ellipse cx="1562.0" cy="148.6" rx="1.4" ry="0.7" fill="#a98cf0" opacity="0.75"/>
<ellipse cx="795.3" cy="148.6" rx="1.6" ry="0.7" fill="#a98cf0" opacity="0.75"/>
<ellipse cx="1651.4" cy="148.6" rx="1.9" ry="0.7" fill="#a98cf0" opacity="0.75"/>
<ellipse cx="1301.7" cy="148.6" rx="1.7" ry="0.7" fill="#a98cf0" opacity="0.75"/>
<ellipse cx="1178.5" cy="148.6" rx="1.8" ry="0.7" fill="#a98cf0" opacity="0.75"/>
<ellipse cx="1017.1" cy="148.6" rx="2.1" ry="0.7" fill="#a98cf0" opacity="0.75"/>
<ellipse cx="1257.9" cy="148.6" rx="2.6" ry="0.7" fill="#a98cf0" opacity="0.75"/>
<ellipse cx="1358.8" cy="148.6" rx="2.6" ry="0.7" fill="#a98cf0" opacity="0.75"/>
<ellipse cx="1538.8" cy="148.6" rx="2.7" ry="0.7" fill="#a98cf0" opacity="0.75"/>
<ellipse cx="1347.8" cy="148.6" rx="1.5" ry="0.7" fill="#a98cf0" opacity="0.75"/>
<ellipse cx="1543.2" cy="148.6" rx="2.7" ry="0.7" fill="#a98cf0" opacity="0.75"/>
<ellipse cx="1588.6" cy="148.6" rx="2.1" ry="0.7" fill="#a98cf0" opacity="0.75"/>
<ellipse cx="1391.7" cy="148.6" rx="1.6" ry="0.7" fill="#a98cf0" opacity="0.75"/>
<ellipse cx="1513.2" cy="148.6" rx="2.1" ry="0.7" fill="#a98cf0" opacity="0.75"/>
<ellipse cx="949.1" cy="148.6" rx="1.3" ry="0.7" fill="#a98cf0" opacity="0.75"/>
<ellipse cx="1536.3" cy="148.6" rx="2.7" ry="0.7" fill="#a98cf0" opacity="0.75"/>
<ellipse cx="746.4" cy="148.6" rx="2.5" ry="0.7" fill="#a98cf0" opacity="0.75"/>
<ellipse cx="1078.6" cy="148.6" rx="1.5" ry="0.7" fill="#a98cf0" opacity="0.75"/>
<ellipse cx="958.3" cy="148.6" rx="2.4" ry="0.7" fill="#a98cf0" opacity="0.75"/>
<ellipse cx="1555.7" cy="148.6" rx="1.3" ry="0.7" fill="#a98cf0" opacity="0.75"/>
<ellipse cx="1289.2" cy="148.6" rx="1.3" ry="0.7" fill="#a98cf0" opacity="0.75"/>
<ellipse cx="1396.4" cy="148.6" rx="1.7" ry="0.7" fill="#a98cf0" opacity="0.75"/>
<ellipse cx="1564.1" cy="148.6" rx="2.7" ry="0.7" fill="#a98cf0" opacity="0.75"/>
<ellipse cx="1176.6" cy="148.6" rx="2.7" ry="0.7" fill="#a98cf0" opacity="0.75"/>
<ellipse cx="974.6" cy="148.6" rx="1.4" ry="0.7" fill="#a98cf0" opacity="0.75"/>
<ellipse cx="1274.0" cy="148.6" rx="1.3" ry="0.7" fill="#a98cf0" opacity="0.75"/>
<ellipse cx="858.7" cy="148.6" rx="1.9" ry="0.7" fill="#a98cf0" opacity="0.75"/>
<ellipse cx="1285.0" cy="148.6" rx="1.5" ry="0.7" fill="#a98cf0" opacity="0.75"/>
<ellipse cx="698.8" cy="148.6" rx="2.6" ry="0.7" fill="#a98cf0" opacity="0.75"/>
<ellipse cx="978.9" cy="148.6" rx="2.7" ry="0.7" fill="#a98cf0" opacity="0.75"/>
<ellipse cx="1580.4" cy="148.6" rx="1.8" ry="0.7" fill="#a98cf0" opacity="0.75"/>
<ellipse cx="1130.1" cy="148.6" rx="2.0" ry="0.7" fill="#a98cf0" opacity="0.75"/>
<ellipse cx="1319.5" cy="148.6" rx="2.1" ry="0.7" fill="#a98cf0" opacity="0.75"/>
<ellipse cx="1232.2" cy="148.6" rx="2.2" ry="0.7" fill="#a98cf0" opacity="0.75"/>
<ellipse cx="1625.7" cy="148.6" rx="2.0" ry="0.7" fill="#a98cf0" opacity="0.75"/>
<ellipse cx="1100.0" cy="148.6" rx="2.3" ry="0.7" fill="#a98cf0" opacity="0.75"/>
<ellipse cx="900.2" cy="148.6" rx="1.7" ry="0.7" fill="#a98cf0" opacity="0.75"/>
<ellipse cx="1664.1" cy="148.6" rx="2.0" ry="0.7" fill="#a98cf0" opacity="0.75"/>
<ellipse cx="1221.0" cy="148.6" rx="1.3" ry="0.7" fill="#a98cf0" opacity="0.75"/>
<ellipse cx="1083.5" cy="148.6" rx="2.1" ry="0.7" fill="#a98cf0" opacity="0.75"/>
<ellipse cx="675.7" cy="148.6" rx="2.2" ry="0.7" fill="#a98cf0" opacity="0.75"/>
<ellipse cx="1307.4" cy="148.6" rx="1.3" ry="0.7" fill="#a98cf0" opacity="0.75"/>
<ellipse cx="1302.4" cy="148.6" rx="1.9" ry="0.7" fill="#a98cf0" opacity="0.75"/>
<ellipse cx="1356.0" cy="148.6" rx="1.8" ry="0.7" fill="#a98cf0" opacity="0.75"/>
<ellipse cx="1384.6" cy="148.6" rx="2.4" ry="0.7" fill="#a98cf0" opacity="0.75"/>
<ellipse cx="677.9" cy="148.6" rx="1.3" ry="0.7" fill="#a98cf0" opacity="0.75"/>
<ellipse cx="1352.7" cy="148.6" rx="2.7" ry="0.7" fill="#a98cf0" opacity="0.75"/>
<ellipse cx="914.2" cy="148.6" rx="1.9" ry="0.7" fill="#a98cf0" opacity="0.75"/>
<ellipse cx="1266.6" cy="148.6" rx="1.7" ry="0.7" fill="#a98cf0" opacity="0.75"/>
<ellipse cx="1030.6" cy="148.6" rx="1.7" ry="0.7" fill="#a98cf0" opacity="0.75"/>
<ellipse cx="1036.0" cy="148.6" rx="2.1" ry="0.7" fill="#a98cf0" opacity="0.75"/>
<ellipse cx="965.0" cy="148.6" rx="1.8" ry="0.7" fill="#a98cf0" opacity="0.75"/>
<ellipse cx="1452.0" cy="148.6" rx="1.3" ry="0.7" fill="#a98cf0" opacity="0.75"/>
<ellipse cx="1242.5" cy="148.6" rx="2.4" ry="0.7" fill="#a98cf0" opacity="0.75"/>
<ellipse cx="974.9" cy="148.6" rx="1.6" ry="0.7" fill="#a98cf0" opacity="0.75"/>
<ellipse cx="1484.5" cy="148.6" rx="1.6" ry="0.7" fill="#a98cf0" opacity="0.75"/>
<ellipse cx="848.4" cy="148.6" rx="1.9" ry="0.7" fill="#a98cf0" opacity="0.75"/>
<path d="M624 146 l4 -4 M626 149 l7 -7 M630 149 l6 -6" stroke="#b8bcc6" stroke-width="1"/>
<rect x="626.0" y="155.3" width="6.8" height="2.6" fill="#a3c4f1"/>
<rect x="638.4" y="155.3" width="10.3" height="2.6" fill="#a3c4f1"/>
<rect x="652.2" y="155.3" width="13.9" height="2.6" fill="#a3c4f1"/>
<rect x="670.9" y="155.3" width="7.6" height="2.6" fill="#a3c4f1"/>
<rect x="681.0" y="155.3" width="11.4" height="2.6" fill="#a3c4f1"/>
<rect x="695.2" y="155.3" width="7.6" height="2.6" fill="#a3c4f1"/>
<rect x="714.3" y="155.3" width="16.0" height="2.6" fill="#a3c4f1"/>
<rect x="736.1" y="155.3" width="11.8" height="2.6" fill="#a3c4f1"/>
<rect x="750.5" y="155.3" width="10.5" height="2.6" fill="#a3c4f1"/>
<rect x="764.0" y="155.3" width="9.1" height="2.6" fill="#a3c4f1"/>
<rect x="776.3" y="155.3" width="6.4" height="2.6" fill="#a3c4f1"/>
<rect x="789.3" y="155.3" width="11.1" height="2.6" fill="#a3c4f1"/>
<rect x="804.5" y="155.3" width="7.1" height="2.6" fill="#a3c4f1"/>
<rect x="814.2" y="155.3" width="7.6" height="2.6" fill="#a3c4f1"/>
<rect x="827.8" y="155.3" width="15.7" height="2.6" fill="#a3c4f1"/>
<rect x="849.9" y="155.3" width="13.4" height="2.6" fill="#a3c4f1"/>
<rect x="868.5" y="155.3" width="6.3" height="2.6" fill="#a3c4f1"/>
<rect x="879.4" y="155.3" width="7.2" height="2.6" fill="#a3c4f1"/>
<rect x="893.3" y="155.3" width="9.5" height="2.6" fill="#a3c4f1"/>
<rect x="907.0" y="155.3" width="9.2" height="2.6" fill="#a3c4f1"/>
<rect x="923.2" y="155.3" width="5.3" height="2.6" fill="#a3c4f1"/>
<rect x="931.4" y="155.3" width="15.9" height="2.6" fill="#a3c4f1"/>
<rect x="952.0" y="155.3" width="11.1" height="2.6" fill="#a3c4f1"/>
<rect x="969.0" y="155.3" width="11.7" height="2.6" fill="#a3c4f1"/>
<rect x="985.7" y="155.3" width="7.0" height="2.6" fill="#a3c4f1"/>
<rect x="995.9" y="155.3" width="15.2" height="2.6" fill="#a3c4f1"/>
<rect x="1015.2" y="155.3" width="8.4" height="2.6" fill="#a3c4f1"/>
<rect x="1034.5" y="155.3" width="14.0" height="2.6" fill="#a3c4f1"/>
<rect x="1054.5" y="155.3" width="12.5" height="2.6" fill="#a3c4f1"/>
<rect x="1072.5" y="155.3" width="15.5" height="2.6" fill="#a3c4f1"/>
<rect x="1092.4" y="155.3" width="15.6" height="2.6" fill="#a3c4f1"/>
<rect x="1113.1" y="155.3" width="10.4" height="2.6" fill="#a3c4f1"/>
<rect x="1127.7" y="155.3" width="14.6" height="2.6" fill="#a3c4f1"/>
<rect x="1153.6" y="155.3" width="13.9" height="2.6" fill="#a3c4f1"/>
<rect x="1173.4" y="155.3" width="14.2" height="2.6" fill="#a3c4f1"/>
<rect x="1190.4" y="155.3" width="8.2" height="2.6" fill="#a3c4f1"/>
<rect x="1202.9" y="155.3" width="5.8" height="2.6" fill="#a3c4f1"/>
<rect x="1212.7" y="155.3" width="15.8" height="2.6" fill="#a3c4f1"/>
<rect x="1234.4" y="155.3" width="7.8" height="2.6" fill="#a3c4f1"/>
<rect x="1249.0" y="155.3" width="13.0" height="2.6" fill="#a3c4f1"/>
<rect x="1264.6" y="155.3" width="14.2" height="2.6" fill="#a3c4f1"/>
<rect x="1284.9" y="155.3" width="11.6" height="2.6" fill="#a3c4f1"/>
<rect x="1301.0" y="155.3" width="14.3" height="2.6" fill="#a3c4f1"/>
<rect x="1319.2" y="155.3" width="8.0" height="2.6" fill="#a3c4f1"/>
<rect x="1341.2" y="155.3" width="12.5" height="2.6" fill="#a3c4f1"/>
<rect x="1368.5" y="155.3" width="11.5" height="2.6" fill="#a3c4f1"/>
<rect x="1385.4" y="155.3" width="11.4" height="2.6" fill="#a3c4f1"/>
<rect x="1400.5" y="155.3" width="15.5" height="2.6" fill="#a3c4f1"/>
<rect x="1422.7" y="155.3" width="6.0" height="2.6" fill="#a3c4f1"/>
<rect x="1439.6" y="155.3" width="9.9" height="2.6" fill="#a3c4f1"/>
<rect x="1452.7" y="155.3" width="12.2" height="2.6" fill="#a3c4f1"/>
<rect x="1467.9" y="155.3" width="8.6" height="2.6" fill="#a3c4f1"/>
<rect x="1481.2" y="155.3" width="6.8" height="2.6" fill="#a3c4f1"/>
<rect x="1491.4" y="155.3" width="12.8" height="2.6" fill="#a3c4f1"/>
<rect x="1517.2" y="155.3" width="12.8" height="2.6" fill="#a3c4f1"/>
<rect x="1536.4" y="155.3" width="13.7" height="2.6" fill="#a3c4f1"/>
<rect x="1552.7" y="155.3" width="5.7" height="2.6" fill="#a3c4f1"/>
<rect x="1564.3" y="155.3" width="12.8" height="2.6" fill="#a3c4f1"/>
<rect x="1580.8" y="155.3" width="8.4" height="2.6" fill="#a3c4f1"/>
<rect x="1591.9" y="155.3" width="8.4" height="2.6" fill="#a3c4f1"/>
<rect x="1606.9" y="155.3" width="10.5" height="2.6" fill="#a3c4f1"/>
<rect x="1622.4" y="155.3" width="6.1" height="2.6" fill="#a3c4f1"/>
<rect x="1633.7" y="155.3" width="13.1" height="2.6" fill="#a3c4f1"/>
<rect x="1653.6" y="155.3" width="12.7" height="2.6" fill="#a3c4f1"/>
<rect x="1671.1" y="155.3" width="5.7" height="2.6" fill="#a3c4f1"/>
<rect x="1683.0" y="155.3" width="8.9" height="2.6" fill="#a3c4f1"/>
<rect x="626" y="155.3" width="60" height="2.6" fill="#a3c4f1"/>
<rect x="746.4" y="151.2" width="5" height="2.6" fill="#5b8fd8"/>
<rect x="781.6" y="151.2" width="6" height="2.6" fill="#5b8fd8"/>
<rect x="872.9" y="151.2" width="15.5" height="2.6" fill="#5b8fd8"/>
<rect x="1001.5" y="151.2" width="14.5" height="2.6" fill="#5b8fd8"/>
<path d="M624 213.5 L624 204.5 L631.6 204.5 L633.1 203.8 L640.6 203.8 L642.1 203.2 L649.7 203.2 L651.2 202.5 L658.8 202.5 L660.3 201.8 L667.8 201.8 L669.3 201.2 L676.9 201.2 L678.4 200.5 L686.0 200.5 L687.5 199.8 L695.0 199.8 L696.5 199.2 L704.1 199.2 L705.6 198.5 L713.2 198.5 L714.7 197.8 L722.2 197.8 L723.7 197.2 L731.3 197.2 L732.8 196.5 L740.4 196.5 L741.9 195.8 L749.4 195.8 L750.9 195.2 L758.5 195.2 L760.0 194.5 L760.0 209.8 L767.7 209.5 L769.2 208.8 L776.8 208.8 L778.3 208.1 L786.0 208.1 L787.5 207.5 L795.1 207.5 L796.6 206.8 L804.3 206.8 L805.8 206.1 L813.5 206.1 L815.0 205.4 L822.6 205.4 L824.1 204.7 L831.8 204.7 L833.3 204.0 L840.9 204.0 L842.4 203.4 L850.1 203.4 L851.6 202.7 L859.2 202.7 L860.8 202.0 L868.4 202.0 L869.9 201.3 L877.6 201.3 L879.1 200.6 L886.7 200.6 L888.2 200.0 L895.9 200.0 L897.4 199.3 L905.0 199.3 L906.5 198.6 L914.2 198.6 L915.7 197.9 L923.4 197.9 L924.9 197.2 L932.5 197.2 L934.0 196.5 L941.7 196.5 L943.2 195.9 L950.8 195.9 L952.3 195.2 L960.0 195.2 L961.5 194.5 L961.5 209.8 L969.1 209.5 L970.6 208.9 L978.3 208.9 L979.8 208.2 L987.4 208.2 L988.9 207.6 L996.6 207.6 L998.1 207.0 L1005.7 207.0 L1007.2 206.4 L1014.9 206.4 L1016.4 205.8 L1024.0 205.8 L1025.5 205.1 L1033.2 205.1 L1034.7 204.5 L1042.3 204.5 L1043.8 203.9 L1051.5 203.9 L1053.0 203.2 L1060.6 203.2 L1062.1 202.6 L1069.8 202.6 L1071.2 202.0 L1078.9 202.0 L1080.4 201.4 L1088.0 201.4 L1089.5 200.8 L1097.2 200.8 L1098.7 200.1 L1106.3 200.1 L1107.8 199.5 L1115.5 199.5 L1117.0 198.9 L1124.6 198.9 L1126.1 198.2 L1133.8 198.2 L1135.3 197.6 L1142.9 197.6 L1144.4 197.0 L1152.1 197.0 L1153.6 196.4 L1161.2 196.4 L1162.7 195.8 L1170.4 195.8 L1171.9 195.1 L1179.5 195.1 L1181.0 194.5 L1181.0 209.8 L1188.5 209.5 L1190.0 208.8 L1197.5 208.8 L1199.0 208.2 L1206.6 208.2 L1208.1 207.5 L1215.6 207.5 L1217.1 206.9 L1224.6 206.9 L1226.1 206.2 L1233.6 206.2 L1235.1 205.6 L1242.7 205.6 L1244.2 204.9 L1251.7 204.9 L1253.2 204.3 L1260.7 204.3 L1262.2 203.6 L1269.7 203.6 L1271.2 203.0 L1278.7 203.0 L1280.2 202.3 L1287.8 202.3 L1289.3 201.7 L1296.8 201.7 L1298.3 201.0 L1305.8 201.0 L1307.3 200.4 L1314.8 200.4 L1316.3 199.7 L1323.8 199.7 L1325.3 199.1 L1332.9 199.1 L1334.4 198.4 L1341.9 198.4 L1343.4 197.8 L1350.9 197.8 L1352.4 197.1 L1359.9 197.1 L1361.4 196.5 L1369.0 196.5 L1370.5 195.8 L1378.0 195.8 L1379.5 195.2 L1387.0 195.2 L1388.5 194.5 L1388.5 209.8 L1396.2 209.5 L1397.7 208.9 L1405.5 208.9 L1407.0 208.2 L1414.7 208.2 L1416.2 207.6 L1423.9 207.6 L1425.4 207.0 L1433.1 207.0 L1434.6 206.4 L1442.4 206.4 L1443.9 205.8 L1451.6 205.8 L1453.1 205.1 L1460.8 205.1 L1462.3 204.5 L1470.1 204.5 L1471.6 203.9 L1479.3 203.9 L1480.8 203.2 L1488.5 203.2 L1490.0 202.6 L1497.8 202.6 L1499.2 202.0 L1507.0 202.0 L1508.5 201.4 L1516.2 201.4 L1517.7 200.8 L1525.4 200.8 L1526.9 200.1 L1534.7 200.1 L1536.2 199.5 L1543.9 199.5 L1545.4 198.9 L1553.1 198.9 L1554.6 198.2 L1562.4 198.2 L1563.9 197.6 L1571.6 197.6 L1573.1 197.0 L1580.8 197.0 L1582.3 196.4 L1590.0 196.4 L1591.5 195.8 L1599.3 195.8 L1600.8 195.1 L1608.5 195.1 L1610.0 194.5 L1610.0 209.8 L1618.9 209.5 L1627.8 209.2 L1636.7 208.9 L1645.6 208.6 L1654.4 208.2 L1663.3 207.9 L1672.2 207.6 L1681.1 207.3 L1690.0 207.0  L1690 213.5 Z" fill="#d3defa" stroke="none"/>
<path d="M624 204.5 L631.6 204.5 L633.1 203.8 L640.6 203.8 L642.1 203.2 L649.7 203.2 L651.2 202.5 L658.8 202.5 L660.3 201.8 L667.8 201.8 L669.3 201.2 L676.9 201.2 L678.4 200.5 L686.0 200.5 L687.5 199.8 L695.0 199.8 L696.5 199.2 L704.1 199.2 L705.6 198.5 L713.2 198.5 L714.7 197.8 L722.2 197.8 L723.7 197.2 L731.3 197.2 L732.8 196.5 L740.4 196.5 L741.9 195.8 L749.4 195.8 L750.9 195.2 L758.5 195.2 L760.0 194.5 L760.0 209.8 L767.7 209.5 L769.2 208.8 L776.8 208.8 L778.3 208.1 L786.0 208.1 L787.5 207.5 L795.1 207.5 L796.6 206.8 L804.3 206.8 L805.8 206.1 L813.5 206.1 L815.0 205.4 L822.6 205.4 L824.1 204.7 L831.8 204.7 L833.3 204.0 L840.9 204.0 L842.4 203.4 L850.1 203.4 L851.6 202.7 L859.2 202.7 L860.8 202.0 L868.4 202.0 L869.9 201.3 L877.6 201.3 L879.1 200.6 L886.7 200.6 L888.2 200.0 L895.9 200.0 L897.4 199.3 L905.0 199.3 L906.5 198.6 L914.2 198.6 L915.7 197.9 L923.4 197.9 L924.9 197.2 L932.5 197.2 L934.0 196.5 L941.7 196.5 L943.2 195.9 L950.8 195.9 L952.3 195.2 L960.0 195.2 L961.5 194.5 L961.5 209.8 L969.1 209.5 L970.6 208.9 L978.3 208.9 L979.8 208.2 L987.4 208.2 L988.9 207.6 L996.6 207.6 L998.1 207.0 L1005.7 207.0 L1007.2 206.4 L1014.9 206.4 L1016.4 205.8 L1024.0 205.8 L1025.5 205.1 L1033.2 205.1 L1034.7 204.5 L1042.3 204.5 L1043.8 203.9 L1051.5 203.9 L1053.0 203.2 L1060.6 203.2 L1062.1 202.6 L1069.8 202.6 L1071.2 202.0 L1078.9 202.0 L1080.4 201.4 L1088.0 201.4 L1089.5 200.8 L1097.2 200.8 L1098.7 200.1 L1106.3 200.1 L1107.8 199.5 L1115.5 199.5 L1117.0 198.9 L1124.6 198.9 L1126.1 198.2 L1133.8 198.2 L1135.3 197.6 L1142.9 197.6 L1144.4 197.0 L1152.1 197.0 L1153.6 196.4 L1161.2 196.4 L1162.7 195.8 L1170.4 195.8 L1171.9 195.1 L1179.5 195.1 L1181.0 194.5 L1181.0 209.8 L1188.5 209.5 L1190.0 208.8 L1197.5 208.8 L1199.0 208.2 L1206.6 208.2 L1208.1 207.5 L1215.6 207.5 L1217.1 206.9 L1224.6 206.9 L1226.1 206.2 L1233.6 206.2 L1235.1 205.6 L1242.7 205.6 L1244.2 204.9 L1251.7 204.9 L1253.2 204.3 L1260.7 204.3 L1262.2 203.6 L1269.7 203.6 L1271.2 203.0 L1278.7 203.0 L1280.2 202.3 L1287.8 202.3 L1289.3 201.7 L1296.8 201.7 L1298.3 201.0 L1305.8 201.0 L1307.3 200.4 L1314.8 200.4 L1316.3 199.7 L1323.8 199.7 L1325.3 199.1 L1332.9 199.1 L1334.4 198.4 L1341.9 198.4 L1343.4 197.8 L1350.9 197.8 L1352.4 197.1 L1359.9 197.1 L1361.4 196.5 L1369.0 196.5 L1370.5 195.8 L1378.0 195.8 L1379.5 195.2 L1387.0 195.2 L1388.5 194.5 L1388.5 209.8 L1396.2 209.5 L1397.7 208.9 L1405.5 208.9 L1407.0 208.2 L1414.7 208.2 L1416.2 207.6 L1423.9 207.6 L1425.4 207.0 L1433.1 207.0 L1434.6 206.4 L1442.4 206.4 L1443.9 205.8 L1451.6 205.8 L1453.1 205.1 L1460.8 205.1 L1462.3 204.5 L1470.1 204.5 L1471.6 203.9 L1479.3 203.9 L1480.8 203.2 L1488.5 203.2 L1490.0 202.6 L1497.8 202.6 L1499.2 202.0 L1507.0 202.0 L1508.5 201.4 L1516.2 201.4 L1517.7 200.8 L1525.4 200.8 L1526.9 200.1 L1534.7 200.1 L1536.2 199.5 L1543.9 199.5 L1545.4 198.9 L1553.1 198.9 L1554.6 198.2 L1562.4 198.2 L1563.9 197.6 L1571.6 197.6 L1573.1 197.0 L1580.8 197.0 L1582.3 196.4 L1590.0 196.4 L1591.5 195.8 L1599.3 195.8 L1600.8 195.1 L1608.5 195.1 L1610.0 194.5 L1610.0 209.8 L1618.9 209.5 L1627.8 209.2 L1636.7 208.9 L1645.6 208.6 L1654.4 208.2 L1663.3 207.9 L1672.2 207.6 L1681.1 207.3 L1690.0 207.0 " fill="none" stroke="#6b9bf0" stroke-width="1"/>
<rect x="1576.9" y="129.8" width="10.4" height="19" fill="#e9c05f"/><rect x="1576.9" y="149" width="10.4" height="12.5" fill="#fff"/>
<rect x="1576.9" y="189" width="10.4" height="7.5" fill="#fff"/><rect x="1576.9" y="196.5" width="10.4" height="17.5" fill="#fff" opacity="0.45"/>
<rect x="1573.3" y="110" width="3.6" height="18" fill="#8c8c8c"/><rect x="1587.2" y="110" width="3.6" height="18" fill="#8c8c8c"/>
<path d="M1576.9 128 V214 M1587.3 128 V214" stroke="#c4c0e8" stroke-width="0.8" stroke-dasharray="1.5 1.5"/>
</svg>
<div class="abs shot" style="left:625.6px"><div class="abs" style="left:2px;top:4px;width:2px;height:18px;background:repeating-linear-gradient(#c9ccd2 0 1px,transparent 1px 3px)"></div><div class="abs" style="left:37px;top:4px;width:6px;height:14px;background:repeating-linear-gradient(#d0d3d8 0 1px,transparent 1px 3px)"></div><div class="abs" style="left:36px;top:21px;width:8px;height:1px;background:#e7a0a0"></div><div class="abs sm" style="left:6.6px;top:0px"><i style="left:21.0px;top:9.5px;background:#e8d21c"></i><i style="left:5.8px;top:23.6px;background:#d8b818"></i><i style="left:12.9px;top:14.8px;background:#e8d21c"></i><i style="left:4.6px;top:16.5px;background:#e8d21c"></i><i style="left:22.3px;top:2.7px;background:#e0a020"></i><i style="left:5.3px;top:20.7px;background:#e0a020"></i><i style="left:5.6px;top:9.4px;background:#e8d21c"></i><i style="left:14.8px;top:8.0px;background:#e0a020"></i><i style="left:6.1px;top:6.4px;background:#e8d21c"></i><i style="left:22.1px;top:18.0px;background:#e0a020"></i><i style="left:15.9px;top:14.4px;background:#e8d21c"></i><i style="left:22.0px;top:24.6px;background:#e8d21c"></i><i style="left:19.6px;top:21.5px;background:#e8d21c"></i><i style="left:15.4px;top:21.0px;background:#e8d21c"></i><i style="left:7.8px;top:16.4px;background:#e8d21c"></i><i style="left:9.8px;top:14.2px;background:#e0a020"></i><i style="left:19.8px;top:23.8px;background:#e8d21c"></i><i style="left:6.5px;top:12.9px;background:#e8d21c"></i><i style="left:20.2px;top:10.8px;background:#e8d21c"></i><i style="left:2.3px;top:16.5px;background:#d8b818"></i><i style="left:20.0px;top:12.0px;background:#d8b818"></i><i style="left:25.6px;top:22.8px;background:#e0a020"></i><i style="left:2.4px;top:12.8px;background:#e8d21c"></i><i style="left:4.7px;top:14.2px;background:#e8d21c"></i><i style="left:22.1px;top:23.1px;background:#e0a020"></i><i style="left:15.4px;top:3.4px;background:#e0a020"></i><i style="left:4.7px;top:21.1px;background:#e8d21c"></i><i style="left:18.5px;top:7.5px;background:#e0a020"></i><i style="left:3.8px;top:11.0px;background:#e0a020"></i><i style="left:3.6px;top:21.7px;background:#e8d21c"></i><i style="left:7.5px;top:19.8px;background:#e8d21c"></i><i style="left:5.0px;top:5.4px;background:#e8d21c"></i><i style="left:25.0px;top:7.4px;background:#e0a020"></i><i style="left:25.2px;top:15.3px;background:#e0a020"></i><i style="left:13.2px;top:8.2px;background:#e8d21c"></i><i style="left:12.8px;top:11.5px;background:#d8b818"></i><i style="left:8.2px;top:22.1px;background:#e8d21c"></i><i style="left:15.8px;top:3.6px;background:#e8d21c"></i><i style="left:19.4px;top:2.2px;background:#e8d21c"></i><i style="left:13.8px;top:17.6px;background:#e0a020"></i><i style="left:5.1px;top:23.9px;background:#e0a020"></i><i style="left:8.1px;top:22.2px;background:#e0a020"></i><i style="left:5.8px;top:21.1px;background:#e0a020"></i><i style="left:22.1px;top:8.5px;background:#e8d21c"></i><i style="left:22.5px;top:9.4px;background:#e8d21c"></i><i style="left:20.4px;top:24.3px;background:#e0a020"></i><i style="left:25.6px;top:19.7px;background:#e0a020"></i><i style="left:13.6px;top:11.2px;background:#d8b818"></i><i style="left:10.5px;top:19.2px;background:#d8b818"></i><i style="left:24.1px;top:8.3px;background:#e8d21c"></i><i style="left:4.6px;top:10.3px;background:#e8d21c"></i><i style="left:6.3px;top:21.0px;background:#e8d21c"></i><i style="left:14.2px;top:21.7px;background:#e8d21c"></i><i style="left:17.0px;top:20.9px;background:#d8b818"></i><i style="left:20.9px;top:17.0px;background:#d8b818"></i><i style="left:2.5px;top:13.9px;background:#e0a020"></i><i style="left:3.2px;top:18.2px;background:#e8d21c"></i><i style="left:10.0px;top:16.9px;background:#e8d21c"></i><i style="left:2.2px;top:19.2px;background:#e8d21c"></i><i style="left:13.4px;top:20.1px;background:#e8d21c"></i></div><div class="abs" style="left:0;top:0;width:46px;height:1.3px;background:#3a3f4a"></div></div>
<div class="abs shot" style="left:674.6px"><div class="abs" style="left:2px;top:4px;width:2px;height:18px;background:repeating-linear-gradient(#c9ccd2 0 1px,transparent 1px 3px)"></div><div class="abs" style="left:37px;top:4px;width:6px;height:14px;background:repeating-linear-gradient(#d0d3d8 0 1px,transparent 1px 3px)"></div><div class="abs" style="left:36px;top:21px;width:8px;height:1px;background:#e7a0a0"></div><div class="abs sm" style="left:6.6px;top:0px"><i style="left:11.7px;top:4.5px;background:#e0a020"></i><i style="left:20.5px;top:2.9px;background:#d8b818"></i><i style="left:21.4px;top:23.5px;background:#e8d21c"></i><i style="left:14.6px;top:17.4px;background:#e8d21c"></i><i style="left:2.1px;top:25.0px;background:#e0a020"></i><i style="left:13.8px;top:3.6px;background:#e0a020"></i><i style="left:6.1px;top:15.1px;background:#d8b818"></i><i style="left:9.1px;top:7.3px;background:#e0a020"></i><i style="left:15.4px;top:23.6px;background:#e0a020"></i><i style="left:19.4px;top:22.0px;background:#e8d21c"></i><i style="left:11.0px;top:4.2px;background:#d8b818"></i><i style="left:17.1px;top:9.6px;background:#e0a020"></i><i style="left:5.8px;top:13.5px;background:#e8d21c"></i><i style="left:7.4px;top:20.3px;background:#e8d21c"></i><i style="left:9.6px;top:5.3px;background:#d8b818"></i><i style="left:14.2px;top:12.3px;background:#d8b818"></i><i style="left:13.3px;top:18.0px;background:#e8d21c"></i><i style="left:13.0px;top:17.7px;background:#d8b818"></i><i style="left:8.2px;top:24.2px;background:#d8b818"></i><i style="left:15.6px;top:11.9px;background:#e0a020"></i><i style="left:18.3px;top:22.2px;background:#e8d21c"></i><i style="left:18.2px;top:20.5px;background:#d8b818"></i><i style="left:12.8px;top:23.0px;background:#e8d21c"></i><i style="left:10.6px;top:21.9px;background:#e0a020"></i><i style="left:16.3px;top:8.0px;background:#d8b818"></i><i style="left:24.7px;top:12.1px;background:#e0a020"></i><i style="left:18.0px;top:2.5px;background:#e8d21c"></i><i style="left:10.7px;top:22.8px;background:#d8b818"></i><i style="left:17.4px;top:15.7px;background:#e8d21c"></i><i style="left:9.8px;top:5.4px;background:#e0a020"></i><i style="left:18.5px;top:5.3px;background:#e8d21c"></i><i style="left:13.3px;top:8.8px;background:#d8b818"></i><i style="left:24.7px;top:22.3px;background:#d8b818"></i><i style="left:20.3px;top:5.1px;background:#d8b818"></i><i style="left:11.7px;top:2.6px;background:#e8d21c"></i><i style="left:13.7px;top:11.9px;background:#e8d21c"></i><i style="left:19.0px;top:15.5px;background:#e0a020"></i><i style="left:3.7px;top:24.9px;background:#e8d21c"></i><i style="left:3.3px;top:3.3px;background:#d8b818"></i><i style="left:13.2px;top:8.4px;background:#e8d21c"></i><i style="left:22.8px;top:13.7px;background:#e8d21c"></i><i style="left:15.6px;top:22.1px;background:#e8d21c"></i><i style="left:17.6px;top:20.3px;background:#e8d21c"></i><i style="left:5.5px;top:14.9px;background:#e8d21c"></i><i style="left:7.9px;top:23.8px;background:#e8d21c"></i><i style="left:19.5px;top:14.3px;background:#e8d21c"></i><i style="left:10.2px;top:12.4px;background:#e0a020"></i><i style="left:24.6px;top:4.6px;background:#e0a020"></i><i style="left:12.2px;top:10.8px;background:#e0a020"></i><i style="left:15.8px;top:4.2px;background:#e8d21c"></i><i style="left:4.1px;top:13.4px;background:#d8b818"></i><i style="left:21.2px;top:13.7px;background:#d8b818"></i><i style="left:19.6px;top:9.6px;background:#e0a020"></i><i style="left:10.1px;top:9.2px;background:#e8d21c"></i><i style="left:2.1px;top:24.3px;background:#e8d21c"></i><i style="left:20.3px;top:15.8px;background:#e8d21c"></i><i style="left:11.6px;top:4.1px;background:#e8d21c"></i><i style="left:19.2px;top:17.5px;background:#e0a020"></i><i style="left:6.7px;top:13.2px;background:#e8d21c"></i><i style="left:8.6px;top:7.4px;background:#e8d21c"></i></div><div class="abs" style="left:0;top:0;width:46px;height:1.3px;background:#3a3f4a"></div></div>
<div class="abs shot" style="left:723.6px"><div class="abs" style="left:2px;top:4px;width:2px;height:18px;background:repeating-linear-gradient(#c9ccd2 0 1px,transparent 1px 3px)"></div><div class="abs" style="left:37px;top:4px;width:6px;height:14px;background:repeating-linear-gradient(#d0d3d8 0 1px,transparent 1px 3px)"></div><div class="abs" style="left:36px;top:21px;width:8px;height:1px;background:#e7a0a0"></div><div class="abs sm" style="left:6.6px;top:0px"><i style="left:17.2px;top:13.2px;background:#e0a020"></i><i style="left:5.5px;top:11.2px;background:#e0a020"></i><i style="left:4.8px;top:2.7px;background:#e8d21c"></i><i style="left:2.2px;top:2.4px;background:#d8b818"></i><i style="left:25.1px;top:13.3px;background:#e0a020"></i><i style="left:13.7px;top:21.1px;background:#e0a020"></i><i style="left:24.5px;top:21.8px;background:#e8d21c"></i><i style="left:16.3px;top:22.8px;background:#e8d21c"></i><i style="left:4.4px;top:10.4px;background:#e8d21c"></i><i style="left:3.6px;top:5.7px;background:#d8b818"></i><i style="left:19.9px;top:23.2px;background:#e8d21c"></i><i style="left:25.2px;top:10.5px;background:#d8b818"></i><i style="left:1.4px;top:8.7px;background:#e0a020"></i><i style="left:6.6px;top:7.8px;background:#d8b818"></i><i style="left:5.3px;top:2.2px;background:#e0a020"></i><i style="left:22.5px;top:6.3px;background:#e8d21c"></i><i style="left:20.9px;top:2.7px;background:#e0a020"></i><i style="left:17.1px;top:6.9px;background:#e0a020"></i><i style="left:4.2px;top:23.2px;background:#e8d21c"></i><i style="left:21.9px;top:23.1px;background:#e8d21c"></i><i style="left:16.9px;top:12.7px;background:#e8d21c"></i><i style="left:14.6px;top:17.7px;background:#e8d21c"></i><i style="left:4.2px;top:19.8px;background:#e8d21c"></i><i style="left:13.8px;top:2.6px;background:#d8b818"></i><i style="left:11.5px;top:12.3px;background:#e8d21c"></i><i style="left:7.0px;top:21.0px;background:#e8d21c"></i><i style="left:20.3px;top:20.6px;background:#d8b818"></i><i style="left:16.1px;top:14.0px;background:#e0a020"></i><i style="left:11.0px;top:18.3px;background:#e8d21c"></i><i style="left:6.0px;top:2.9px;background:#e8d21c"></i><i style="left:10.8px;top:11.8px;background:#e8d21c"></i><i style="left:14.7px;top:14.0px;background:#d8b818"></i><i style="left:16.1px;top:13.6px;background:#e8d21c"></i><i style="left:5.1px;top:8.9px;background:#e8d21c"></i><i style="left:23.5px;top:14.3px;background:#e8d21c"></i><i style="left:1.0px;top:19.9px;background:#d8b818"></i><i style="left:10.8px;top:5.4px;background:#e8d21c"></i><i style="left:19.4px;top:12.5px;background:#e8d21c"></i><i style="left:11.2px;top:12.5px;background:#e0a020"></i><i style="left:7.4px;top:21.7px;background:#e8d21c"></i><i style="left:25.8px;top:4.8px;background:#d8b818"></i><i style="left:2.4px;top:16.2px;background:#e8d21c"></i><i style="left:25.8px;top:20.9px;background:#e8d21c"></i><i style="left:12.0px;top:12.0px;background:#e0a020"></i><i style="left:8.9px;top:23.1px;background:#d8b818"></i><i style="left:11.7px;top:22.2px;background:#d8b818"></i><i style="left:8.4px;top:9.0px;background:#d8b818"></i><i style="left:10.0px;top:24.5px;background:#e8d21c"></i><i style="left:13.4px;top:12.9px;background:#d8b818"></i><i style="left:22.7px;top:23.5px;background:#e8d21c"></i><i style="left:23.2px;top:15.1px;background:#e0a020"></i><i style="left:21.9px;top:7.5px;background:#e8d21c"></i><i style="left:15.5px;top:2.3px;background:#e0a020"></i><i style="left:1.8px;top:24.2px;background:#e0a020"></i><i style="left:10.3px;top:19.5px;background:#e8d21c"></i><i style="left:2.1px;top:2.5px;background:#e8d21c"></i><i style="left:10.6px;top:21.8px;background:#e8d21c"></i><i style="left:7.2px;top:10.5px;background:#d8b818"></i><i style="left:25.3px;top:11.2px;background:#e8d21c"></i><i style="left:11.5px;top:17.7px;background:#e0a020"></i></div><div class="abs" style="left:0;top:0;width:46px;height:1.3px;background:#3a3f4a"></div></div>
<div class="abs shot" style="left:772.5px"><div class="abs" style="left:2px;top:4px;width:2px;height:18px;background:repeating-linear-gradient(#c9ccd2 0 1px,transparent 1px 3px)"></div><div class="abs" style="left:37px;top:4px;width:6px;height:14px;background:repeating-linear-gradient(#d0d3d8 0 1px,transparent 1px 3px)"></div><div class="abs" style="left:36px;top:21px;width:8px;height:1px;background:#e7a0a0"></div><div class="abs sm" style="left:6.6px;top:0px"><i style="left:11.9px;top:2.2px;background:#e8d21c"></i><i style="left:24.6px;top:4.1px;background:#e0a020"></i><i style="left:8.4px;top:9.8px;background:#d8b818"></i><i style="left:6.5px;top:14.6px;background:#e8d21c"></i><i style="left:9.3px;top:5.0px;background:#d8b818"></i><i style="left:9.8px;top:22.6px;background:#e8d21c"></i><i style="left:5.0px;top:5.1px;background:#e0a020"></i><i style="left:21.2px;top:6.3px;background:#e8d21c"></i><i style="left:21.7px;top:20.6px;background:#e0a020"></i><i style="left:4.4px;top:19.3px;background:#e8d21c"></i><i style="left:15.8px;top:21.7px;background:#e8d21c"></i><i style="left:24.7px;top:11.2px;background:#e8d21c"></i><i style="left:13.7px;top:17.9px;background:#e8d21c"></i><i style="left:17.0px;top:7.4px;background:#e8d21c"></i><i style="left:17.0px;top:23.4px;background:#e0a020"></i><i style="left:22.8px;top:13.9px;background:#e0a020"></i><i style="left:12.8px;top:2.9px;background:#d8b818"></i><i style="left:5.0px;top:8.3px;background:#e8d21c"></i><i style="left:3.5px;top:15.1px;background:#e8d21c"></i><i style="left:12.9px;top:24.2px;background:#d8b818"></i><i style="left:8.7px;top:4.2px;background:#e0a020"></i><i style="left:24.0px;top:14.2px;background:#e8d21c"></i><i style="left:4.5px;top:4.5px;background:#d8b818"></i><i style="left:15.8px;top:7.9px;background:#e0a020"></i><i style="left:24.5px;top:9.3px;background:#e8d21c"></i><i style="left:17.4px;top:17.5px;background:#e0a020"></i><i style="left:26.0px;top:24.3px;background:#e8d21c"></i><i style="left:4.6px;top:3.0px;background:#e8d21c"></i><i style="left:1.2px;top:9.3px;background:#e0a020"></i><i style="left:3.3px;top:12.4px;background:#e8d21c"></i><i style="left:8.5px;top:12.1px;background:#e0a020"></i><i style="left:8.9px;top:14.1px;background:#e8d21c"></i><i style="left:19.6px;top:5.5px;background:#e8d21c"></i><i style="left:24.7px;top:14.7px;background:#e8d21c"></i><i style="left:15.2px;top:24.1px;background:#d8b818"></i><i style="left:6.0px;top:9.5px;background:#d8b818"></i><i style="left:2.4px;top:2.8px;background:#d8b818"></i><i style="left:10.2px;top:6.1px;background:#e8d21c"></i><i style="left:20.4px;top:16.5px;background:#d8b818"></i><i style="left:11.9px;top:6.4px;background:#d8b818"></i><i style="left:2.8px;top:9.4px;background:#e8d21c"></i><i style="left:2.1px;top:19.5px;background:#e8d21c"></i><i style="left:2.1px;top:14.6px;background:#d8b818"></i><i style="left:2.1px;top:22.0px;background:#e8d21c"></i><i style="left:25.5px;top:16.7px;background:#e8d21c"></i><i style="left:3.6px;top:18.7px;background:#e8d21c"></i><i style="left:23.8px;top:13.0px;background:#e8d21c"></i><i style="left:17.9px;top:21.6px;background:#e0a020"></i><i style="left:13.8px;top:17.2px;background:#e8d21c"></i><i style="left:13.1px;top:22.9px;background:#e0a020"></i><i style="left:5.3px;top:12.8px;background:#d8b818"></i><i style="left:14.5px;top:10.4px;background:#e0a020"></i><i style="left:11.0px;top:24.8px;background:#e0a020"></i><i style="left:17.9px;top:22.2px;background:#e8d21c"></i><i style="left:11.9px;top:16.1px;background:#e8d21c"></i><i style="left:15.4px;top:9.4px;background:#d8b818"></i><i style="left:23.3px;top:6.0px;background:#d8b818"></i><i style="left:24.0px;top:18.8px;background:#e8d21c"></i><i style="left:20.4px;top:8.6px;background:#e0a020"></i><i style="left:6.8px;top:7.7px;background:#e0a020"></i></div><div class="abs" style="left:0;top:0;width:46px;height:1.3px;background:#3a3f4a"></div></div>
<div class="abs shot" style="left:821.5px"><div class="abs" style="left:2px;top:4px;width:2px;height:18px;background:repeating-linear-gradient(#c9ccd2 0 1px,transparent 1px 3px)"></div><div class="abs" style="left:37px;top:4px;width:6px;height:14px;background:repeating-linear-gradient(#d0d3d8 0 1px,transparent 1px 3px)"></div><div class="abs" style="left:36px;top:21px;width:8px;height:1px;background:#e7a0a0"></div><div class="abs sm" style="left:6.6px;top:0px"><i style="left:15.1px;top:14.1px;background:#e8d21c"></i><i style="left:12.9px;top:2.3px;background:#e8d21c"></i><i style="left:1.5px;top:20.7px;background:#d8b818"></i><i style="left:6.8px;top:21.7px;background:#e0a020"></i><i style="left:10.7px;top:5.8px;background:#d8b818"></i><i style="left:23.5px;top:20.3px;background:#e0a020"></i><i style="left:17.0px;top:21.3px;background:#e8d21c"></i><i style="left:17.2px;top:15.5px;background:#e8d21c"></i><i style="left:15.5px;top:23.3px;background:#e0a020"></i><i style="left:24.5px;top:19.0px;background:#d8b818"></i><i style="left:20.3px;top:13.7px;background:#e8d21c"></i><i style="left:13.4px;top:11.8px;background:#e8d21c"></i><i style="left:2.4px;top:20.5px;background:#e0a020"></i><i style="left:21.1px;top:17.9px;background:#e0a020"></i><i style="left:22.5px;top:22.6px;background:#e8d21c"></i><i style="left:2.2px;top:8.5px;background:#e8d21c"></i><i style="left:3.0px;top:14.5px;background:#e0a020"></i><i style="left:1.2px;top:17.5px;background:#d8b818"></i><i style="left:19.0px;top:4.8px;background:#d8b818"></i><i style="left:21.9px;top:23.8px;background:#e0a020"></i><i style="left:24.7px;top:5.3px;background:#d8b818"></i><i style="left:24.6px;top:9.5px;background:#e8d21c"></i><i style="left:11.9px;top:17.8px;background:#e0a020"></i><i style="left:2.8px;top:22.5px;background:#e8d21c"></i><i style="left:22.5px;top:20.3px;background:#d8b818"></i><i style="left:25.3px;top:8.5px;background:#e8d21c"></i><i style="left:24.7px;top:9.5px;background:#e8d21c"></i><i style="left:24.3px;top:2.3px;background:#e8d21c"></i><i style="left:6.2px;top:3.4px;background:#e0a020"></i><i style="left:11.6px;top:16.4px;background:#d8b818"></i><i style="left:12.2px;top:10.9px;background:#d8b818"></i><i style="left:23.2px;top:9.7px;background:#e8d21c"></i><i style="left:8.2px;top:8.5px;background:#e8d21c"></i><i style="left:4.4px;top:16.4px;background:#e8d21c"></i><i style="left:20.1px;top:11.1px;background:#e0a020"></i><i style="left:6.6px;top:11.3px;background:#e8d21c"></i><i style="left:14.4px;top:21.1px;background:#d8b818"></i><i style="left:3.1px;top:9.6px;background:#e8d21c"></i><i style="left:17.4px;top:3.3px;background:#e8d21c"></i><i style="left:5.6px;top:12.5px;background:#e8d21c"></i><i style="left:19.1px;top:3.7px;background:#e8d21c"></i><i style="left:22.9px;top:16.8px;background:#d8b818"></i><i style="left:9.0px;top:11.9px;background:#d8b818"></i><i style="left:6.6px;top:15.9px;background:#e8d21c"></i><i style="left:7.1px;top:4.3px;background:#d8b818"></i><i style="left:22.8px;top:16.7px;background:#e8d21c"></i><i style="left:18.4px;top:2.4px;background:#e8d21c"></i><i style="left:7.0px;top:14.9px;background:#d8b818"></i><i style="left:5.0px;top:11.1px;background:#e8d21c"></i><i style="left:14.8px;top:21.9px;background:#d8b818"></i><i style="left:17.2px;top:4.6px;background:#e0a020"></i><i style="left:8.3px;top:19.4px;background:#e8d21c"></i><i style="left:20.0px;top:4.2px;background:#e0a020"></i><i style="left:25.5px;top:23.9px;background:#d8b818"></i><i style="left:5.9px;top:10.6px;background:#d8b818"></i><i style="left:11.7px;top:17.2px;background:#e0a020"></i><i style="left:2.1px;top:13.7px;background:#e8d21c"></i><i style="left:19.6px;top:21.9px;background:#e0a020"></i><i style="left:19.8px;top:2.7px;background:#e8d21c"></i><i style="left:22.2px;top:12.9px;background:#e8d21c"></i></div><div class="abs" style="left:0;top:0;width:46px;height:1.3px;background:#3a3f4a"></div></div>
<div class="abs shot" style="left:870.5px"><div class="abs" style="left:2px;top:4px;width:2px;height:18px;background:repeating-linear-gradient(#c9ccd2 0 1px,transparent 1px 3px)"></div><div class="abs" style="left:37px;top:4px;width:6px;height:14px;background:repeating-linear-gradient(#d0d3d8 0 1px,transparent 1px 3px)"></div><div class="abs" style="left:36px;top:21px;width:8px;height:1px;background:#e7a0a0"></div><div class="abs sm" style="left:6.6px;top:0px"><i style="left:4.9px;top:6.8px;background:#e8d21c"></i><i style="left:5.2px;top:8.9px;background:#d8b818"></i><i style="left:25.2px;top:12.4px;background:#e8d21c"></i><i style="left:21.5px;top:4.1px;background:#e8d21c"></i><i style="left:20.1px;top:9.8px;background:#d8b818"></i><i style="left:17.2px;top:22.4px;background:#e8d21c"></i><i style="left:15.8px;top:18.1px;background:#e8d21c"></i><i style="left:24.6px;top:17.0px;background:#e8d21c"></i><i style="left:12.7px;top:23.9px;background:#d8b818"></i><i style="left:12.1px;top:21.1px;background:#e8d21c"></i></div><div class="abs" style="left:0;top:0;width:46px;height:1.3px;background:#3a3f4a"></div></div>
<div class="abs shot" style="left:919.5px"><div class="abs" style="left:2px;top:4px;width:2px;height:18px;background:repeating-linear-gradient(#c9ccd2 0 1px,transparent 1px 3px)"></div><div class="abs" style="left:37px;top:4px;width:6px;height:14px;background:repeating-linear-gradient(#d0d3d8 0 1px,transparent 1px 3px)"></div><div class="abs" style="left:36px;top:21px;width:8px;height:1px;background:#e7a0a0"></div><div class="abs sm" style="left:6.6px;top:0px"><i style="left:2.0px;top:24.2px;background:#e8d21c"></i><i style="left:2.7px;top:23.4px;background:#e8d21c"></i><i style="left:11.1px;top:17.2px;background:#d8b818"></i><i style="left:23.8px;top:9.7px;background:#e0a020"></i><i style="left:11.2px;top:7.8px;background:#e0a020"></i><i style="left:19.5px;top:2.2px;background:#d8b818"></i><i style="left:12.4px;top:2.0px;background:#e8d21c"></i><i style="left:11.8px;top:10.4px;background:#e8d21c"></i><i style="left:10.3px;top:23.3px;background:#d8b818"></i><i style="left:20.4px;top:11.7px;background:#e8d21c"></i></div><div class="abs" style="left:0;top:0;width:46px;height:1.3px;background:#3a3f4a"></div></div>
<div class="abs shot" style="left:968.5px"><div class="abs" style="left:2px;top:4px;width:2px;height:18px;background:repeating-linear-gradient(#c9ccd2 0 1px,transparent 1px 3px)"></div><div class="abs" style="left:37px;top:4px;width:6px;height:14px;background:repeating-linear-gradient(#d0d3d8 0 1px,transparent 1px 3px)"></div><div class="abs" style="left:36px;top:21px;width:8px;height:1px;background:#e7a0a0"></div><div class="abs sm" style="left:6.6px;top:0px"><i style="left:21.6px;top:16.3px;background:#d8b818"></i><i style="left:16.2px;top:12.3px;background:#e0a020"></i><i style="left:10.3px;top:16.2px;background:#e0a020"></i><i style="left:15.5px;top:2.7px;background:#e0a020"></i><i style="left:21.8px;top:20.6px;background:#e8d21c"></i><i style="left:8.3px;top:4.8px;background:#d8b818"></i><i style="left:10.3px;top:23.6px;background:#d8b818"></i><i style="left:10.3px;top:24.8px;background:#e8d21c"></i><i style="left:14.6px;top:4.8px;background:#d8b818"></i><i style="left:5.1px;top:10.5px;background:#d8b818"></i></div><div class="abs" style="left:0;top:0;width:46px;height:1.3px;background:#3a3f4a"></div></div>
<div class="abs shot" style="left:1017.4px"><div class="abs" style="left:2px;top:4px;width:2px;height:18px;background:repeating-linear-gradient(#c9ccd2 0 1px,transparent 1px 3px)"></div><div class="abs" style="left:37px;top:4px;width:6px;height:14px;background:repeating-linear-gradient(#d0d3d8 0 1px,transparent 1px 3px)"></div><div class="abs" style="left:36px;top:21px;width:8px;height:1px;background:#e7a0a0"></div><div class="abs sm" style="left:6.6px;top:0px"><i style="left:7.3px;top:11.2px;background:#e8d21c"></i><i style="left:4.3px;top:23.1px;background:#d8b818"></i><i style="left:10.0px;top:17.1px;background:#d8b818"></i><i style="left:22.9px;top:23.3px;background:#e0a020"></i><i style="left:4.1px;top:2.0px;background:#e8d21c"></i><i style="left:15.1px;top:3.5px;background:#d8b818"></i><i style="left:10.0px;top:8.3px;background:#d8b818"></i><i style="left:1.8px;top:24.0px;background:#e8d21c"></i><i style="left:5.2px;top:21.0px;background:#e0a020"></i><i style="left:18.4px;top:23.0px;background:#e0a020"></i></div><div class="abs" style="left:0;top:0;width:46px;height:1.3px;background:#3a3f4a"></div></div>
<div class="abs shot" style="left:1066.4px"><div class="abs" style="left:2px;top:4px;width:2px;height:18px;background:repeating-linear-gradient(#c9ccd2 0 1px,transparent 1px 3px)"></div><div class="abs" style="left:37px;top:4px;width:6px;height:14px;background:repeating-linear-gradient(#d0d3d8 0 1px,transparent 1px 3px)"></div><div class="abs" style="left:36px;top:21px;width:8px;height:1px;background:#e7a0a0"></div><div class="abs sm" style="left:6.6px;top:0px"><i style="left:18.5px;top:12.5px;background:#d8b818"></i><i style="left:3.6px;top:5.2px;background:#e0a020"></i><i style="left:22.4px;top:14.5px;background:#e8d21c"></i><i style="left:16.2px;top:13.9px;background:#d8b818"></i><i style="left:13.0px;top:3.3px;background:#d8b818"></i><i style="left:7.9px;top:22.7px;background:#e0a020"></i><i style="left:5.3px;top:18.8px;background:#e8d21c"></i><i style="left:6.6px;top:19.6px;background:#e8d21c"></i><i style="left:5.5px;top:9.2px;background:#d8b818"></i><i style="left:18.6px;top:18.4px;background:#e0a020"></i></div><div class="abs" style="left:0;top:0;width:46px;height:1.3px;background:#3a3f4a"></div></div>
<div class="abs shot" style="left:1115.4px"><div class="abs" style="left:2px;top:4px;width:2px;height:18px;background:repeating-linear-gradient(#c9ccd2 0 1px,transparent 1px 3px)"></div><div class="abs" style="left:37px;top:4px;width:6px;height:14px;background:repeating-linear-gradient(#d0d3d8 0 1px,transparent 1px 3px)"></div><div class="abs" style="left:36px;top:21px;width:8px;height:1px;background:#e7a0a0"></div><div class="abs sm" style="left:6.6px;top:0px"><i style="left:9.1px;top:13.5px;background:#d8b818"></i><i style="left:8.0px;top:15.6px;background:#e8d21c"></i><i style="left:17.8px;top:22.9px;background:#e8d21c"></i><i style="left:14.5px;top:2.8px;background:#d8b818"></i><i style="left:22.9px;top:8.0px;background:#e0a020"></i><i style="left:4.9px;top:2.1px;background:#e8d21c"></i><i style="left:9.0px;top:8.4px;background:#e8d21c"></i><i style="left:3.6px;top:6.1px;background:#e8d21c"></i><i style="left:11.4px;top:10.7px;background:#e8d21c"></i><i style="left:25.7px;top:2.0px;background:#e0a020"></i></div><div class="abs" style="left:0;top:0;width:46px;height:1.3px;background:#3a3f4a"></div></div>
<div class="abs shot" style="left:1164.4px"><div class="abs" style="left:2px;top:4px;width:2px;height:18px;background:repeating-linear-gradient(#c9ccd2 0 1px,transparent 1px 3px)"></div><div class="abs" style="left:37px;top:4px;width:6px;height:14px;background:repeating-linear-gradient(#d0d3d8 0 1px,transparent 1px 3px)"></div><div class="abs" style="left:36px;top:21px;width:8px;height:1px;background:#e7a0a0"></div><div class="abs sm" style="left:6.6px;top:0px"><i style="left:7.0px;top:16.7px;background:#e8d21c"></i><i style="left:18.6px;top:19.3px;background:#e0a020"></i><i style="left:17.9px;top:22.3px;background:#e8d21c"></i><i style="left:13.9px;top:15.5px;background:#d8b818"></i><i style="left:11.4px;top:11.0px;background:#e8d21c"></i><i style="left:15.7px;top:5.3px;background:#e8d21c"></i><i style="left:10.7px;top:16.0px;background:#d8b818"></i><i style="left:17.3px;top:8.4px;background:#e8d21c"></i><i style="left:17.9px;top:24.6px;background:#d8b818"></i><i style="left:1.3px;top:4.1px;background:#e8d21c"></i><i style="left:19.0px;top:12.3px;background:#e0a020"></i><i style="left:9.4px;top:20.5px;background:#e8d21c"></i><i style="left:2.1px;top:4.1px;background:#d8b818"></i><i style="left:11.5px;top:22.2px;background:#e0a020"></i><i style="left:2.3px;top:21.1px;background:#e8d21c"></i><i style="left:18.5px;top:8.1px;background:#e8d21c"></i><i style="left:11.6px;top:18.6px;background:#d8b818"></i><i style="left:8.6px;top:7.7px;background:#e0a020"></i><i style="left:6.7px;top:3.7px;background:#e0a020"></i><i style="left:2.3px;top:4.8px;background:#e8d21c"></i><i style="left:6.0px;top:24.3px;background:#e8d21c"></i><i style="left:15.1px;top:24.6px;background:#e0a020"></i><i style="left:24.7px;top:9.8px;background:#e8d21c"></i><i style="left:23.0px;top:24.8px;background:#d8b818"></i><i style="left:15.2px;top:22.8px;background:#e8d21c"></i><i style="left:18.2px;top:3.4px;background:#e8d21c"></i><i style="left:19.3px;top:2.7px;background:#e8d21c"></i><i style="left:17.8px;top:6.3px;background:#d8b818"></i><i style="left:10.7px;top:8.0px;background:#e8d21c"></i><i style="left:13.8px;top:21.8px;background:#e8d21c"></i><i style="left:18.2px;top:9.1px;background:#d8b818"></i><i style="left:4.8px;top:19.5px;background:#d8b818"></i><i style="left:8.4px;top:11.1px;background:#e0a020"></i><i style="left:25.0px;top:10.5px;background:#e8d21c"></i><i style="left:3.7px;top:9.3px;background:#e8d21c"></i><i style="left:1.9px;top:24.5px;background:#d8b818"></i><i style="left:3.4px;top:9.5px;background:#e8d21c"></i><i style="left:14.7px;top:13.2px;background:#e0a020"></i><i style="left:25.1px;top:8.8px;background:#e8d21c"></i><i style="left:12.7px;top:4.5px;background:#e0a020"></i><i style="left:16.0px;top:21.2px;background:#e8d21c"></i><i style="left:3.5px;top:11.0px;background:#d8b818"></i><i style="left:1.4px;top:4.5px;background:#e8d21c"></i><i style="left:16.7px;top:6.0px;background:#e8d21c"></i><i style="left:13.5px;top:23.3px;background:#e8d21c"></i><i style="left:11.7px;top:6.6px;background:#e0a020"></i><i style="left:5.2px;top:18.6px;background:#e8d21c"></i><i style="left:24.6px;top:9.6px;background:#e8d21c"></i><i style="left:22.3px;top:13.3px;background:#d8b818"></i><i style="left:9.8px;top:12.2px;background:#e0a020"></i><i style="left:13.4px;top:3.4px;background:#e8d21c"></i><i style="left:1.9px;top:20.7px;background:#e8d21c"></i><i style="left:14.7px;top:23.5px;background:#e0a020"></i><i style="left:22.3px;top:23.6px;background:#e8d21c"></i><i style="left:8.7px;top:15.5px;background:#e8d21c"></i><i style="left:10.3px;top:15.5px;background:#e8d21c"></i><i style="left:7.5px;top:22.1px;background:#d8b818"></i><i style="left:18.6px;top:11.3px;background:#e8d21c"></i><i style="left:18.0px;top:16.9px;background:#e8d21c"></i><i style="left:15.1px;top:3.2px;background:#d8b818"></i></div><div class="abs" style="left:0;top:0;width:46px;height:1.3px;background:#3a3f4a"></div></div>
<div class="abs shot" style="left:1213.4px"><div class="abs" style="left:2px;top:4px;width:2px;height:18px;background:repeating-linear-gradient(#c9ccd2 0 1px,transparent 1px 3px)"></div><div class="abs" style="left:37px;top:4px;width:6px;height:14px;background:repeating-linear-gradient(#d0d3d8 0 1px,transparent 1px 3px)"></div><div class="abs" style="left:36px;top:21px;width:8px;height:1px;background:#e7a0a0"></div><div class="abs sm" style="left:6.6px;top:0px"><i style="left:22.3px;top:21.0px;background:#e0a020"></i><i style="left:2.0px;top:8.3px;background:#e8d21c"></i><i style="left:7.7px;top:23.2px;background:#e0a020"></i><i style="left:2.9px;top:17.5px;background:#e0a020"></i><i style="left:24.0px;top:15.3px;background:#e0a020"></i><i style="left:1.5px;top:2.8px;background:#e8d21c"></i><i style="left:18.0px;top:16.4px;background:#e0a020"></i><i style="left:20.6px;top:12.1px;background:#d8b818"></i><i style="left:24.2px;top:6.8px;background:#e0a020"></i><i style="left:19.4px;top:7.6px;background:#e8d21c"></i><i style="left:8.7px;top:15.0px;background:#e8d21c"></i><i style="left:7.5px;top:6.6px;background:#d8b818"></i><i style="left:7.0px;top:10.7px;background:#e8d21c"></i><i style="left:18.6px;top:18.0px;background:#e8d21c"></i><i style="left:17.7px;top:18.2px;background:#d8b818"></i><i style="left:6.2px;top:3.4px;background:#e8d21c"></i><i style="left:14.2px;top:12.9px;background:#e8d21c"></i><i style="left:5.0px;top:8.2px;background:#e0a020"></i><i style="left:15.9px;top:14.8px;background:#e8d21c"></i><i style="left:20.1px;top:22.5px;background:#e8d21c"></i><i style="left:9.9px;top:22.4px;background:#d8b818"></i><i style="left:20.3px;top:11.1px;background:#e8d21c"></i><i style="left:9.9px;top:21.4px;background:#e8d21c"></i><i style="left:19.2px;top:15.3px;background:#e8d21c"></i><i style="left:15.6px;top:8.7px;background:#e0a020"></i><i style="left:19.7px;top:5.8px;background:#e0a020"></i><i style="left:24.4px;top:17.6px;background:#d8b818"></i><i style="left:7.5px;top:3.0px;background:#e8d21c"></i><i style="left:18.5px;top:6.2px;background:#e8d21c"></i><i style="left:5.8px;top:8.4px;background:#e0a020"></i><i style="left:22.6px;top:15.0px;background:#e0a020"></i><i style="left:4.9px;top:9.1px;background:#e0a020"></i><i style="left:9.5px;top:19.8px;background:#e0a020"></i><i style="left:19.9px;top:5.2px;background:#e8d21c"></i><i style="left:1.6px;top:15.7px;background:#e0a020"></i><i style="left:15.4px;top:16.8px;background:#d8b818"></i><i style="left:25.1px;top:10.5px;background:#e0a020"></i><i style="left:24.6px;top:8.8px;background:#e0a020"></i><i style="left:11.4px;top:12.3px;background:#e8d21c"></i><i style="left:12.8px;top:5.4px;background:#d8b818"></i><i style="left:14.2px;top:23.6px;background:#e8d21c"></i><i style="left:21.9px;top:23.7px;background:#e8d21c"></i><i style="left:23.6px;top:17.0px;background:#e8d21c"></i><i style="left:9.0px;top:8.2px;background:#e8d21c"></i><i style="left:7.8px;top:10.0px;background:#e0a020"></i><i style="left:1.9px;top:6.9px;background:#e8d21c"></i><i style="left:8.2px;top:24.8px;background:#e8d21c"></i><i style="left:12.5px;top:3.3px;background:#e0a020"></i><i style="left:15.5px;top:7.2px;background:#e8d21c"></i><i style="left:1.9px;top:15.1px;background:#e8d21c"></i><i style="left:10.3px;top:23.5px;background:#e8d21c"></i><i style="left:1.6px;top:18.4px;background:#e0a020"></i><i style="left:16.8px;top:23.0px;background:#d8b818"></i><i style="left:12.1px;top:8.8px;background:#e8d21c"></i><i style="left:22.7px;top:12.7px;background:#e8d21c"></i><i style="left:18.4px;top:24.5px;background:#e8d21c"></i><i style="left:19.4px;top:8.3px;background:#e0a020"></i><i style="left:16.5px;top:9.6px;background:#d8b818"></i><i style="left:20.4px;top:8.6px;background:#e8d21c"></i><i style="left:24.8px;top:16.7px;background:#e8d21c"></i></div><div class="abs" style="left:0;top:0;width:46px;height:1.3px;background:#3a3f4a"></div></div>
<div class="abs shot" style="left:1262.3px"><div class="abs" style="left:2px;top:4px;width:2px;height:18px;background:repeating-linear-gradient(#c9ccd2 0 1px,transparent 1px 3px)"></div><div class="abs" style="left:37px;top:4px;width:6px;height:14px;background:repeating-linear-gradient(#d0d3d8 0 1px,transparent 1px 3px)"></div><div class="abs" style="left:36px;top:21px;width:8px;height:1px;background:#e7a0a0"></div><div class="abs sm" style="left:6.6px;top:0px"><i style="left:21.6px;top:9.6px;background:#d8b818"></i><i style="left:13.7px;top:20.0px;background:#e0a020"></i><i style="left:6.2px;top:19.6px;background:#e8d21c"></i><i style="left:25.1px;top:16.8px;background:#e0a020"></i><i style="left:18.3px;top:6.9px;background:#d8b818"></i><i style="left:22.8px;top:5.0px;background:#e8d21c"></i><i style="left:1.6px;top:22.2px;background:#e8d21c"></i><i style="left:19.5px;top:11.1px;background:#d8b818"></i><i style="left:5.3px;top:2.1px;background:#e0a020"></i><i style="left:22.3px;top:12.4px;background:#e8d21c"></i><i style="left:13.0px;top:21.1px;background:#e0a020"></i><i style="left:3.3px;top:11.6px;background:#e8d21c"></i><i style="left:11.0px;top:21.6px;background:#e0a020"></i><i style="left:11.6px;top:23.3px;background:#e8d21c"></i><i style="left:11.2px;top:21.7px;background:#d8b818"></i><i style="left:11.6px;top:8.4px;background:#e8d21c"></i><i style="left:23.9px;top:2.5px;background:#e0a020"></i><i style="left:25.0px;top:17.6px;background:#d8b818"></i><i style="left:8.0px;top:15.1px;background:#e8d21c"></i><i style="left:9.6px;top:4.3px;background:#e8d21c"></i><i style="left:8.9px;top:21.4px;background:#e8d21c"></i><i style="left:22.2px;top:11.1px;background:#e8d21c"></i><i style="left:9.1px;top:24.2px;background:#e8d21c"></i><i style="left:10.5px;top:15.4px;background:#d8b818"></i><i style="left:19.6px;top:23.3px;background:#e0a020"></i><i style="left:11.6px;top:11.4px;background:#d8b818"></i><i style="left:7.6px;top:13.5px;background:#d8b818"></i><i style="left:22.9px;top:10.8px;background:#e0a020"></i><i style="left:6.4px;top:10.7px;background:#e0a020"></i><i style="left:20.3px;top:24.8px;background:#e0a020"></i><i style="left:1.8px;top:16.6px;background:#d8b818"></i><i style="left:25.6px;top:19.5px;background:#e8d21c"></i><i style="left:24.7px;top:14.8px;background:#e8d21c"></i><i style="left:15.0px;top:21.4px;background:#e0a020"></i><i style="left:8.5px;top:6.2px;background:#e0a020"></i><i style="left:11.4px;top:22.5px;background:#e0a020"></i><i style="left:2.1px;top:12.0px;background:#d8b818"></i><i style="left:19.4px;top:21.2px;background:#d8b818"></i><i style="left:19.1px;top:21.9px;background:#e8d21c"></i><i style="left:23.9px;top:22.7px;background:#e8d21c"></i><i style="left:5.0px;top:18.3px;background:#e8d21c"></i><i style="left:18.4px;top:23.9px;background:#e8d21c"></i><i style="left:16.2px;top:23.1px;background:#e8d21c"></i><i style="left:24.5px;top:5.6px;background:#e8d21c"></i><i style="left:7.7px;top:5.1px;background:#e8d21c"></i><i style="left:22.8px;top:13.7px;background:#d8b818"></i><i style="left:19.9px;top:16.3px;background:#d8b818"></i><i style="left:20.7px;top:6.0px;background:#e8d21c"></i><i style="left:13.2px;top:23.0px;background:#e0a020"></i><i style="left:8.6px;top:11.0px;background:#e8d21c"></i><i style="left:3.8px;top:8.3px;background:#e0a020"></i><i style="left:9.8px;top:22.6px;background:#d8b818"></i><i style="left:1.9px;top:18.5px;background:#d8b818"></i><i style="left:9.3px;top:17.8px;background:#e0a020"></i><i style="left:19.6px;top:12.0px;background:#e8d21c"></i><i style="left:9.6px;top:2.2px;background:#e8d21c"></i><i style="left:4.6px;top:15.2px;background:#e0a020"></i><i style="left:7.5px;top:21.7px;background:#e8d21c"></i><i style="left:19.9px;top:17.7px;background:#e8d21c"></i><i style="left:5.2px;top:16.1px;background:#e0a020"></i></div><div class="abs" style="left:0;top:0;width:46px;height:1.3px;background:#3a3f4a"></div></div>
<div class="abs shot" style="left:1311.3px"><div class="abs" style="left:2px;top:4px;width:2px;height:18px;background:repeating-linear-gradient(#c9ccd2 0 1px,transparent 1px 3px)"></div><div class="abs" style="left:37px;top:4px;width:6px;height:14px;background:repeating-linear-gradient(#d0d3d8 0 1px,transparent 1px 3px)"></div><div class="abs" style="left:36px;top:21px;width:8px;height:1px;background:#e7a0a0"></div><div class="abs sm" style="left:6.6px;top:0px"><i style="left:23.2px;top:10.4px;background:#d8b818"></i><i style="left:22.4px;top:21.2px;background:#e8d21c"></i><i style="left:1.8px;top:15.5px;background:#e8d21c"></i><i style="left:13.7px;top:4.1px;background:#e8d21c"></i><i style="left:13.7px;top:5.2px;background:#e0a020"></i><i style="left:5.1px;top:20.4px;background:#d8b818"></i><i style="left:18.9px;top:11.3px;background:#e8d21c"></i><i style="left:2.9px;top:12.6px;background:#e8d21c"></i><i style="left:18.0px;top:4.0px;background:#d8b818"></i><i style="left:1.7px;top:14.0px;background:#e8d21c"></i><i style="left:6.0px;top:16.8px;background:#e8d21c"></i><i style="left:19.5px;top:19.7px;background:#e8d21c"></i><i style="left:11.1px;top:21.4px;background:#d8b818"></i><i style="left:10.3px;top:5.3px;background:#e8d21c"></i><i style="left:11.0px;top:3.7px;background:#e0a020"></i><i style="left:16.4px;top:17.9px;background:#e8d21c"></i><i style="left:19.6px;top:24.0px;background:#e8d21c"></i><i style="left:1.2px;top:6.1px;background:#e8d21c"></i><i style="left:11.7px;top:9.9px;background:#e8d21c"></i><i style="left:19.4px;top:15.9px;background:#d8b818"></i><i style="left:20.4px;top:9.4px;background:#d8b818"></i><i style="left:2.3px;top:6.2px;background:#e8d21c"></i><i style="left:5.3px;top:11.3px;background:#d8b818"></i><i style="left:21.1px;top:13.1px;background:#e0a020"></i><i style="left:9.1px;top:18.8px;background:#e0a020"></i><i style="left:12.4px;top:2.7px;background:#e8d21c"></i><i style="left:4.4px;top:2.8px;background:#e8d21c"></i><i style="left:8.5px;top:13.1px;background:#d8b818"></i><i style="left:16.5px;top:9.1px;background:#d8b818"></i><i style="left:4.3px;top:21.4px;background:#e8d21c"></i><i style="left:8.3px;top:15.2px;background:#e0a020"></i><i style="left:18.7px;top:21.9px;background:#e0a020"></i><i style="left:15.1px;top:5.5px;background:#e8d21c"></i><i style="left:14.2px;top:18.1px;background:#e8d21c"></i><i style="left:1.4px;top:20.0px;background:#d8b818"></i><i style="left:13.3px;top:3.3px;background:#e8d21c"></i><i style="left:16.7px;top:24.3px;background:#e0a020"></i><i style="left:3.3px;top:14.9px;background:#d8b818"></i><i style="left:19.6px;top:14.5px;background:#e8d21c"></i><i style="left:22.9px;top:12.1px;background:#d8b818"></i><i style="left:17.4px;top:24.4px;background:#e8d21c"></i><i style="left:23.3px;top:16.0px;background:#e8d21c"></i><i style="left:5.5px;top:19.6px;background:#e0a020"></i><i style="left:17.2px;top:6.0px;background:#e8d21c"></i><i style="left:1.3px;top:2.2px;background:#d8b818"></i><i style="left:1.6px;top:16.6px;background:#e8d21c"></i><i style="left:16.8px;top:17.2px;background:#e8d21c"></i><i style="left:15.3px;top:23.8px;background:#d8b818"></i><i style="left:12.4px;top:6.3px;background:#e0a020"></i><i style="left:9.3px;top:23.7px;background:#e8d21c"></i><i style="left:16.9px;top:20.7px;background:#e0a020"></i><i style="left:14.8px;top:12.2px;background:#e8d21c"></i><i style="left:8.8px;top:14.1px;background:#e8d21c"></i><i style="left:18.5px;top:4.9px;background:#e8d21c"></i><i style="left:7.1px;top:21.5px;background:#e0a020"></i><i style="left:23.1px;top:9.5px;background:#e0a020"></i><i style="left:24.7px;top:14.7px;background:#d8b818"></i><i style="left:1.8px;top:18.0px;background:#d8b818"></i><i style="left:18.1px;top:5.7px;background:#e8d21c"></i><i style="left:22.6px;top:20.5px;background:#e8d21c"></i></div><div class="abs" style="left:0;top:0;width:46px;height:1.3px;background:#3a3f4a"></div></div>
<div class="abs shot" style="left:1360.3px"><div class="abs" style="left:2px;top:4px;width:2px;height:18px;background:repeating-linear-gradient(#c9ccd2 0 1px,transparent 1px 3px)"></div><div class="abs" style="left:37px;top:4px;width:6px;height:14px;background:repeating-linear-gradient(#d0d3d8 0 1px,transparent 1px 3px)"></div><div class="abs" style="left:36px;top:21px;width:8px;height:1px;background:#e7a0a0"></div><div class="abs sm" style="left:6.6px;top:0px"><i style="left:2.9px;top:17.5px;background:#e0a020"></i><i style="left:9.0px;top:8.2px;background:#d8b818"></i><i style="left:12.2px;top:16.5px;background:#e0a020"></i><i style="left:21.6px;top:16.6px;background:#e8d21c"></i><i style="left:15.5px;top:5.3px;background:#e8d21c"></i><i style="left:10.2px;top:17.7px;background:#e8d21c"></i><i style="left:25.4px;top:10.8px;background:#e8d21c"></i><i style="left:16.0px;top:16.8px;background:#e0a020"></i><i style="left:20.7px;top:5.1px;background:#e8d21c"></i><i style="left:14.0px;top:17.3px;background:#e0a020"></i><i style="left:25.8px;top:16.3px;background:#e0a020"></i><i style="left:1.2px;top:12.2px;background:#e8d21c"></i><i style="left:16.4px;top:18.6px;background:#e0a020"></i><i style="left:22.7px;top:6.7px;background:#e8d21c"></i><i style="left:13.1px;top:5.3px;background:#e0a020"></i><i style="left:4.4px;top:18.5px;background:#e8d21c"></i><i style="left:10.9px;top:3.4px;background:#e8d21c"></i><i style="left:6.5px;top:9.7px;background:#e0a020"></i><i style="left:8.8px;top:6.7px;background:#e0a020"></i><i style="left:14.0px;top:5.2px;background:#e8d21c"></i><i style="left:23.3px;top:23.7px;background:#e8d21c"></i><i style="left:11.5px;top:2.9px;background:#e0a020"></i><i style="left:21.8px;top:2.8px;background:#e8d21c"></i><i style="left:8.2px;top:19.0px;background:#e0a020"></i><i style="left:5.3px;top:15.1px;background:#e0a020"></i><i style="left:4.6px;top:9.5px;background:#d8b818"></i><i style="left:11.2px;top:24.2px;background:#e8d21c"></i><i style="left:18.6px;top:16.3px;background:#e8d21c"></i><i style="left:5.8px;top:4.2px;background:#e8d21c"></i><i style="left:7.1px;top:22.8px;background:#d8b818"></i><i style="left:4.4px;top:4.5px;background:#e8d21c"></i><i style="left:22.9px;top:17.8px;background:#e8d21c"></i><i style="left:5.5px;top:15.3px;background:#e8d21c"></i><i style="left:6.0px;top:7.2px;background:#e8d21c"></i><i style="left:15.5px;top:14.0px;background:#d8b818"></i><i style="left:9.4px;top:11.7px;background:#d8b818"></i><i style="left:11.0px;top:11.3px;background:#e8d21c"></i><i style="left:21.7px;top:12.5px;background:#e8d21c"></i><i style="left:18.6px;top:12.9px;background:#d8b818"></i><i style="left:7.1px;top:12.8px;background:#e8d21c"></i><i style="left:11.4px;top:8.0px;background:#e8d21c"></i><i style="left:22.9px;top:10.2px;background:#e8d21c"></i><i style="left:14.4px;top:18.9px;background:#e8d21c"></i><i style="left:20.0px;top:19.4px;background:#e0a020"></i><i style="left:2.7px;top:11.1px;background:#d8b818"></i><i style="left:23.0px;top:4.6px;background:#e8d21c"></i><i style="left:6.1px;top:14.4px;background:#d8b818"></i><i style="left:12.5px;top:15.3px;background:#d8b818"></i><i style="left:16.8px;top:16.3px;background:#e8d21c"></i><i style="left:3.6px;top:13.3px;background:#e0a020"></i><i style="left:11.5px;top:5.8px;background:#e0a020"></i><i style="left:12.7px;top:9.6px;background:#e8d21c"></i><i style="left:23.4px;top:17.0px;background:#e8d21c"></i><i style="left:1.7px;top:14.7px;background:#e8d21c"></i><i style="left:2.1px;top:12.3px;background:#e0a020"></i><i style="left:21.0px;top:20.2px;background:#e8d21c"></i><i style="left:13.5px;top:7.4px;background:#e8d21c"></i><i style="left:16.1px;top:18.9px;background:#e8d21c"></i><i style="left:21.2px;top:4.3px;background:#d8b818"></i><i style="left:18.5px;top:6.3px;background:#e8d21c"></i></div><div class="abs" style="left:0;top:0;width:46px;height:1.3px;background:#3a3f4a"></div></div>
<div class="abs shot" style="left:1409.3px"><div class="abs" style="left:2px;top:4px;width:2px;height:18px;background:repeating-linear-gradient(#c9ccd2 0 1px,transparent 1px 3px)"></div><div class="abs" style="left:37px;top:4px;width:6px;height:14px;background:repeating-linear-gradient(#d0d3d8 0 1px,transparent 1px 3px)"></div><div class="abs" style="left:36px;top:21px;width:8px;height:1px;background:#e7a0a0"></div><div class="abs sm" style="left:6.6px;top:0px"><i style="left:15.2px;top:7.9px;background:#e8d21c"></i><i style="left:4.3px;top:6.2px;background:#e0a020"></i><i style="left:12.7px;top:13.6px;background:#e8d21c"></i><i style="left:12.9px;top:6.9px;background:#d8b818"></i><i style="left:24.0px;top:9.4px;background:#e0a020"></i><i style="left:11.9px;top:8.0px;background:#e0a020"></i><i style="left:23.8px;top:10.4px;background:#e8d21c"></i><i style="left:24.4px;top:21.6px;background:#e8d21c"></i><i style="left:12.7px;top:8.0px;background:#e0a020"></i><i style="left:17.2px;top:5.0px;background:#e8d21c"></i><i style="left:19.0px;top:9.4px;background:#d8b818"></i><i style="left:9.1px;top:12.0px;background:#d8b818"></i><i style="left:1.0px;top:16.9px;background:#e8d21c"></i><i style="left:14.6px;top:24.5px;background:#e8d21c"></i><i style="left:9.8px;top:21.8px;background:#e8d21c"></i><i style="left:10.9px;top:2.4px;background:#e0a020"></i><i style="left:16.9px;top:9.3px;background:#d8b818"></i><i style="left:6.2px;top:2.4px;background:#e0a020"></i><i style="left:19.7px;top:16.4px;background:#e8d21c"></i><i style="left:25.4px;top:22.0px;background:#d8b818"></i><i style="left:1.7px;top:6.0px;background:#e8d21c"></i><i style="left:6.9px;top:24.5px;background:#e0a020"></i><i style="left:10.6px;top:8.8px;background:#d8b818"></i><i style="left:12.8px;top:8.6px;background:#e0a020"></i><i style="left:2.3px;top:13.3px;background:#e8d21c"></i><i style="left:3.8px;top:12.3px;background:#e0a020"></i><i style="left:19.4px;top:10.7px;background:#e8d21c"></i><i style="left:24.4px;top:17.6px;background:#e8d21c"></i><i style="left:16.4px;top:21.8px;background:#e0a020"></i><i style="left:13.0px;top:3.2px;background:#d8b818"></i><i style="left:17.9px;top:9.9px;background:#e8d21c"></i><i style="left:25.6px;top:11.8px;background:#d8b818"></i><i style="left:6.5px;top:2.2px;background:#e8d21c"></i><i style="left:10.7px;top:5.0px;background:#e8d21c"></i><i style="left:22.1px;top:22.0px;background:#d8b818"></i><i style="left:1.4px;top:11.6px;background:#d8b818"></i><i style="left:9.4px;top:10.4px;background:#e8d21c"></i><i style="left:12.5px;top:22.7px;background:#e8d21c"></i><i style="left:8.5px;top:23.1px;background:#d8b818"></i><i style="left:11.1px;top:12.5px;background:#e8d21c"></i><i style="left:25.2px;top:11.5px;background:#e8d21c"></i><i style="left:17.9px;top:7.5px;background:#e0a020"></i><i style="left:1.6px;top:8.4px;background:#d8b818"></i><i style="left:18.5px;top:9.9px;background:#e0a020"></i><i style="left:2.2px;top:11.9px;background:#e0a020"></i><i style="left:3.4px;top:11.2px;background:#e8d21c"></i><i style="left:2.0px;top:23.1px;background:#e8d21c"></i><i style="left:13.7px;top:17.7px;background:#e8d21c"></i><i style="left:23.7px;top:3.2px;background:#e0a020"></i><i style="left:15.9px;top:14.9px;background:#e8d21c"></i><i style="left:20.6px;top:15.8px;background:#d8b818"></i><i style="left:19.1px;top:13.0px;background:#e8d21c"></i><i style="left:19.7px;top:17.9px;background:#e8d21c"></i><i style="left:18.1px;top:5.9px;background:#e8d21c"></i><i style="left:4.6px;top:15.4px;background:#d8b818"></i><i style="left:10.3px;top:18.3px;background:#e0a020"></i><i style="left:22.0px;top:24.3px;background:#e8d21c"></i><i style="left:18.9px;top:3.9px;background:#e8d21c"></i><i style="left:8.6px;top:22.9px;background:#e8d21c"></i><i style="left:19.4px;top:12.5px;background:#e8d21c"></i></div><div class="abs" style="left:0;top:0;width:46px;height:1.3px;background:#3a3f4a"></div></div>
<div class="abs shot" style="left:1458.3px"><div class="abs" style="left:2px;top:4px;width:2px;height:18px;background:repeating-linear-gradient(#c9ccd2 0 1px,transparent 1px 3px)"></div><div class="abs" style="left:37px;top:4px;width:6px;height:14px;background:repeating-linear-gradient(#d0d3d8 0 1px,transparent 1px 3px)"></div><div class="abs" style="left:36px;top:21px;width:8px;height:1px;background:#e7a0a0"></div><div class="abs sm" style="left:6.6px;top:0px"><i style="left:11.3px;top:8.2px;background:#e8d21c"></i><i style="left:13.7px;top:10.9px;background:#e8d21c"></i><i style="left:3.4px;top:3.0px;background:#e8d21c"></i><i style="left:11.8px;top:22.4px;background:#e8d21c"></i><i style="left:11.8px;top:7.3px;background:#e8d21c"></i><i style="left:23.7px;top:7.6px;background:#e8d21c"></i><i style="left:8.1px;top:13.7px;background:#d8b818"></i><i style="left:9.9px;top:22.8px;background:#e8d21c"></i><i style="left:3.1px;top:13.4px;background:#e0a020"></i><i style="left:23.4px;top:3.0px;background:#d8b818"></i><i style="left:3.5px;top:11.7px;background:#d8b818"></i><i style="left:25.7px;top:12.0px;background:#e0a020"></i><i style="left:15.7px;top:9.1px;background:#d8b818"></i><i style="left:12.8px;top:11.1px;background:#e8d21c"></i><i style="left:5.7px;top:18.5px;background:#e8d21c"></i><i style="left:14.5px;top:14.9px;background:#e0a020"></i><i style="left:21.5px;top:13.8px;background:#e8d21c"></i><i style="left:17.5px;top:11.0px;background:#d8b818"></i><i style="left:22.5px;top:7.3px;background:#d8b818"></i><i style="left:6.9px;top:20.2px;background:#d8b818"></i><i style="left:9.8px;top:7.6px;background:#e8d21c"></i><i style="left:2.4px;top:20.8px;background:#d8b818"></i><i style="left:22.0px;top:7.0px;background:#d8b818"></i><i style="left:14.6px;top:16.0px;background:#d8b818"></i><i style="left:22.0px;top:2.7px;background:#d8b818"></i><i style="left:14.8px;top:17.9px;background:#d8b818"></i><i style="left:21.1px;top:11.7px;background:#e8d21c"></i><i style="left:25.2px;top:13.6px;background:#e8d21c"></i><i style="left:18.5px;top:3.1px;background:#d8b818"></i><i style="left:11.7px;top:15.5px;background:#e8d21c"></i><i style="left:15.2px;top:17.2px;background:#d8b818"></i><i style="left:7.0px;top:16.6px;background:#d8b818"></i><i style="left:12.7px;top:5.8px;background:#e8d21c"></i><i style="left:14.1px;top:24.9px;background:#e8d21c"></i><i style="left:7.2px;top:13.4px;background:#d8b818"></i><i style="left:11.4px;top:19.4px;background:#e8d21c"></i><i style="left:7.7px;top:16.2px;background:#d8b818"></i><i style="left:11.5px;top:9.9px;background:#e0a020"></i><i style="left:16.5px;top:13.1px;background:#d8b818"></i><i style="left:2.8px;top:12.9px;background:#e0a020"></i><i style="left:17.9px;top:18.8px;background:#e8d21c"></i><i style="left:6.5px;top:5.2px;background:#e8d21c"></i><i style="left:12.3px;top:21.6px;background:#e8d21c"></i><i style="left:17.3px;top:12.1px;background:#d8b818"></i><i style="left:1.9px;top:6.0px;background:#e0a020"></i><i style="left:23.9px;top:11.2px;background:#d8b818"></i><i style="left:10.8px;top:5.7px;background:#d8b818"></i><i style="left:11.8px;top:16.2px;background:#e8d21c"></i><i style="left:9.1px;top:5.2px;background:#e0a020"></i><i style="left:3.2px;top:8.7px;background:#d8b818"></i><i style="left:24.6px;top:18.8px;background:#e8d21c"></i><i style="left:18.9px;top:21.7px;background:#d8b818"></i><i style="left:10.8px;top:11.8px;background:#d8b818"></i><i style="left:4.8px;top:14.7px;background:#e8d21c"></i><i style="left:6.8px;top:11.7px;background:#e0a020"></i><i style="left:4.3px;top:20.6px;background:#e0a020"></i><i style="left:14.6px;top:21.8px;background:#e0a020"></i><i style="left:6.3px;top:14.5px;background:#e8d21c"></i><i style="left:15.8px;top:11.8px;background:#e8d21c"></i><i style="left:21.8px;top:9.4px;background:#d8b818"></i></div><div class="abs" style="left:0;top:0;width:46px;height:1.3px;background:#3a3f4a"></div></div>
<div class="abs shot" style="left:1507.2px"><div class="abs" style="left:2px;top:4px;width:2px;height:18px;background:repeating-linear-gradient(#c9ccd2 0 1px,transparent 1px 3px)"></div><div class="abs" style="left:37px;top:4px;width:6px;height:14px;background:repeating-linear-gradient(#d0d3d8 0 1px,transparent 1px 3px)"></div><div class="abs" style="left:36px;top:21px;width:8px;height:1px;background:#e7a0a0"></div><div class="abs sm" style="left:6.6px;top:0px"><i style="left:15.3px;top:19.3px;background:#e0a020"></i><i style="left:18.7px;top:5.4px;background:#e0a020"></i><i style="left:23.6px;top:8.6px;background:#e8d21c"></i><i style="left:10.0px;top:20.0px;background:#d8b818"></i><i style="left:8.3px;top:21.3px;background:#e0a020"></i><i style="left:14.4px;top:4.8px;background:#e8d21c"></i><i style="left:11.8px;top:14.1px;background:#e0a020"></i><i style="left:25.8px;top:14.1px;background:#e0a020"></i><i style="left:15.4px;top:10.2px;background:#d8b818"></i><i style="left:16.9px;top:14.7px;background:#e8d21c"></i><i style="left:6.3px;top:18.7px;background:#d8b818"></i><i style="left:5.6px;top:10.8px;background:#e0a020"></i><i style="left:22.7px;top:12.5px;background:#e8d21c"></i><i style="left:23.2px;top:8.5px;background:#e8d21c"></i><i style="left:6.6px;top:19.9px;background:#d8b818"></i><i style="left:22.3px;top:11.4px;background:#e8d21c"></i><i style="left:7.0px;top:12.8px;background:#e8d21c"></i><i style="left:5.7px;top:21.7px;background:#d8b818"></i><i style="left:5.0px;top:2.2px;background:#e8d21c"></i><i style="left:13.8px;top:23.7px;background:#e8d21c"></i><i style="left:17.5px;top:3.3px;background:#d8b818"></i><i style="left:19.1px;top:14.3px;background:#e8d21c"></i><i style="left:21.3px;top:13.0px;background:#e8d21c"></i><i style="left:2.5px;top:8.8px;background:#e8d21c"></i><i style="left:1.8px;top:8.9px;background:#e8d21c"></i><i style="left:9.9px;top:15.2px;background:#e0a020"></i><i style="left:11.8px;top:15.7px;background:#e8d21c"></i><i style="left:15.4px;top:13.9px;background:#e8d21c"></i><i style="left:3.1px;top:5.8px;background:#e8d21c"></i><i style="left:19.9px;top:13.8px;background:#d8b818"></i><i style="left:16.3px;top:10.7px;background:#e8d21c"></i><i style="left:16.5px;top:23.8px;background:#e8d21c"></i><i style="left:8.9px;top:5.2px;background:#d8b818"></i><i style="left:25.0px;top:22.3px;background:#e8d21c"></i><i style="left:2.3px;top:22.8px;background:#e8d21c"></i><i style="left:18.9px;top:16.4px;background:#e8d21c"></i><i style="left:19.8px;top:8.7px;background:#d8b818"></i><i style="left:13.3px;top:18.1px;background:#e8d21c"></i><i style="left:25.6px;top:19.6px;background:#e8d21c"></i><i style="left:2.4px;top:13.3px;background:#e0a020"></i><i style="left:19.5px;top:10.8px;background:#e0a020"></i><i style="left:7.7px;top:13.3px;background:#e0a020"></i><i style="left:13.1px;top:19.4px;background:#e8d21c"></i><i style="left:24.0px;top:18.0px;background:#d8b818"></i><i style="left:25.7px;top:20.5px;background:#e8d21c"></i><i style="left:24.3px;top:23.4px;background:#d8b818"></i><i style="left:16.8px;top:7.6px;background:#e0a020"></i><i style="left:23.3px;top:23.2px;background:#e0a020"></i><i style="left:11.2px;top:14.8px;background:#e8d21c"></i><i style="left:15.2px;top:18.3px;background:#d8b818"></i><i style="left:16.5px;top:6.6px;background:#e8d21c"></i><i style="left:9.1px;top:11.0px;background:#e8d21c"></i><i style="left:9.5px;top:16.6px;background:#e8d21c"></i><i style="left:23.0px;top:24.5px;background:#d8b818"></i><i style="left:5.0px;top:19.5px;background:#e8d21c"></i><i style="left:6.4px;top:18.7px;background:#e8d21c"></i><i style="left:15.3px;top:24.9px;background:#e8d21c"></i><i style="left:3.2px;top:6.4px;background:#e0a020"></i><i style="left:6.6px;top:5.4px;background:#e8d21c"></i><i style="left:1.5px;top:8.9px;background:#e8d21c"></i></div><div class="abs" style="left:0;top:0;width:46px;height:1.3px;background:#3a3f4a"></div></div>
<div class="abs shot" style="left:1556.2px"><div class="abs" style="left:2px;top:4px;width:2px;height:18px;background:repeating-linear-gradient(#c9ccd2 0 1px,transparent 1px 3px)"></div><div class="abs" style="left:37px;top:4px;width:6px;height:14px;background:repeating-linear-gradient(#d0d3d8 0 1px,transparent 1px 3px)"></div><div class="abs" style="left:36px;top:21px;width:8px;height:1px;background:#e7a0a0"></div><div class="abs sm" style="left:6.6px;top:0px"><i style="left:6.3px;top:20.7px;background:#e0a020"></i><i style="left:13.7px;top:14.1px;background:#e8d21c"></i><i style="left:13.1px;top:15.0px;background:#e0a020"></i><i style="left:25.1px;top:8.9px;background:#e8d21c"></i><i style="left:18.4px;top:18.2px;background:#d8b818"></i><i style="left:8.3px;top:3.9px;background:#d8b818"></i><i style="left:23.0px;top:18.6px;background:#d8b818"></i><i style="left:24.7px;top:17.4px;background:#e8d21c"></i><i style="left:20.7px;top:22.3px;background:#d8b818"></i><i style="left:1.5px;top:12.5px;background:#e8d21c"></i><i style="left:11.4px;top:22.4px;background:#d8b818"></i><i style="left:21.4px;top:22.7px;background:#e0a020"></i><i style="left:20.7px;top:4.5px;background:#e0a020"></i><i style="left:19.6px;top:8.0px;background:#e8d21c"></i><i style="left:24.4px;top:22.1px;background:#e8d21c"></i><i style="left:5.9px;top:5.6px;background:#e0a020"></i><i style="left:18.3px;top:3.0px;background:#e8d21c"></i><i style="left:23.9px;top:19.6px;background:#d8b818"></i><i style="left:13.3px;top:8.6px;background:#e8d21c"></i><i style="left:17.0px;top:2.3px;background:#e0a020"></i><i style="left:22.7px;top:14.4px;background:#d8b818"></i><i style="left:24.0px;top:20.4px;background:#e8d21c"></i><i style="left:3.8px;top:8.3px;background:#e8d21c"></i><i style="left:13.2px;top:17.8px;background:#d8b818"></i><i style="left:24.1px;top:21.0px;background:#e8d21c"></i><i style="left:15.4px;top:24.3px;background:#d8b818"></i><i style="left:13.9px;top:14.4px;background:#e0a020"></i><i style="left:15.2px;top:17.5px;background:#e8d21c"></i><i style="left:6.9px;top:24.8px;background:#e8d21c"></i><i style="left:3.3px;top:4.8px;background:#e8d21c"></i><i style="left:10.2px;top:23.2px;background:#e8d21c"></i><i style="left:12.0px;top:24.6px;background:#d8b818"></i><i style="left:7.7px;top:12.6px;background:#e0a020"></i><i style="left:14.3px;top:19.2px;background:#e0a020"></i><i style="left:13.2px;top:6.8px;background:#e0a020"></i><i style="left:6.2px;top:3.2px;background:#d8b818"></i><i style="left:8.2px;top:8.1px;background:#e8d21c"></i><i style="left:5.6px;top:22.4px;background:#d8b818"></i><i style="left:8.3px;top:14.4px;background:#e0a020"></i><i style="left:14.4px;top:9.7px;background:#e8d21c"></i><i style="left:13.2px;top:6.7px;background:#e8d21c"></i><i style="left:6.8px;top:6.8px;background:#e8d21c"></i><i style="left:5.3px;top:9.2px;background:#e8d21c"></i><i style="left:1.5px;top:18.1px;background:#e8d21c"></i><i style="left:10.9px;top:9.2px;background:#d8b818"></i><i style="left:13.5px;top:17.0px;background:#e8d21c"></i><i style="left:2.2px;top:16.7px;background:#e8d21c"></i><i style="left:16.3px;top:11.4px;background:#e8d21c"></i><i style="left:6.2px;top:23.9px;background:#e8d21c"></i><i style="left:3.7px;top:24.3px;background:#e8d21c"></i><i style="left:23.3px;top:13.9px;background:#e0a020"></i><i style="left:14.3px;top:11.7px;background:#e8d21c"></i><i style="left:12.6px;top:7.9px;background:#e8d21c"></i><i style="left:18.6px;top:8.4px;background:#e8d21c"></i><i style="left:3.8px;top:2.7px;background:#e8d21c"></i><i style="left:24.1px;top:17.0px;background:#e8d21c"></i><i style="left:15.4px;top:12.9px;background:#d8b818"></i><i style="left:2.7px;top:13.4px;background:#e8d21c"></i><i style="left:15.6px;top:10.0px;background:#e8d21c"></i><i style="left:6.4px;top:10.1px;background:#e0a020"></i></div><div class="abs" style="left:0;top:0;width:46px;height:1.3px;background:#3a3f4a"></div></div>
<div class="abs shot" style="left:1605.2px"><div class="abs" style="left:2px;top:4px;width:2px;height:18px;background:repeating-linear-gradient(#c9ccd2 0 1px,transparent 1px 3px)"></div><div class="abs" style="left:37px;top:4px;width:6px;height:14px;background:repeating-linear-gradient(#d0d3d8 0 1px,transparent 1px 3px)"></div><div class="abs" style="left:36px;top:21px;width:8px;height:1px;background:#e7a0a0"></div><div class="abs sm" style="left:6.6px;top:0px"><i style="left:20.3px;top:24.4px;background:#e0a020"></i><i style="left:6.7px;top:24.7px;background:#e8d21c"></i><i style="left:10.3px;top:23.1px;background:#e8d21c"></i><i style="left:14.4px;top:8.1px;background:#e0a020"></i><i style="left:13.6px;top:2.4px;background:#e8d21c"></i><i style="left:7.0px;top:13.4px;background:#e8d21c"></i><i style="left:19.9px;top:9.9px;background:#e0a020"></i><i style="left:17.6px;top:18.4px;background:#e8d21c"></i><i style="left:2.8px;top:11.0px;background:#e8d21c"></i><i style="left:10.3px;top:14.7px;background:#e8d21c"></i><i style="left:16.4px;top:10.5px;background:#e0a020"></i><i style="left:19.4px;top:6.0px;background:#e8d21c"></i><i style="left:14.5px;top:5.7px;background:#e8d21c"></i><i style="left:8.4px;top:13.6px;background:#e8d21c"></i><i style="left:6.3px;top:3.5px;background:#e0a020"></i><i style="left:12.2px;top:21.6px;background:#e0a020"></i><i style="left:15.8px;top:16.5px;background:#e8d21c"></i><i style="left:3.0px;top:4.3px;background:#e8d21c"></i><i style="left:15.0px;top:13.6px;background:#e8d21c"></i><i style="left:8.5px;top:16.2px;background:#d8b818"></i><i style="left:4.2px;top:20.7px;background:#d8b818"></i><i style="left:19.6px;top:6.2px;background:#e8d21c"></i><i style="left:19.0px;top:10.5px;background:#d8b818"></i><i style="left:20.5px;top:23.3px;background:#d8b818"></i><i style="left:20.7px;top:10.3px;background:#d8b818"></i><i style="left:6.5px;top:19.6px;background:#e8d21c"></i><i style="left:11.7px;top:19.6px;background:#e8d21c"></i><i style="left:18.3px;top:23.1px;background:#e8d21c"></i><i style="left:5.5px;top:18.9px;background:#e0a020"></i><i style="left:15.5px;top:15.1px;background:#d8b818"></i><i style="left:5.8px;top:15.6px;background:#e8d21c"></i><i style="left:10.8px;top:4.0px;background:#e0a020"></i><i style="left:2.4px;top:4.4px;background:#e0a020"></i><i style="left:4.5px;top:17.2px;background:#d8b818"></i><i style="left:7.2px;top:6.6px;background:#e0a020"></i><i style="left:21.0px;top:14.6px;background:#e8d21c"></i><i style="left:6.2px;top:2.4px;background:#d8b818"></i><i style="left:17.1px;top:4.9px;background:#d8b818"></i><i style="left:16.1px;top:22.7px;background:#d8b818"></i><i style="left:4.4px;top:16.7px;background:#d8b818"></i><i style="left:23.6px;top:6.9px;background:#e8d21c"></i><i style="left:8.5px;top:15.9px;background:#e8d21c"></i><i style="left:6.4px;top:15.2px;background:#d8b818"></i><i style="left:21.7px;top:13.8px;background:#d8b818"></i><i style="left:10.9px;top:6.5px;background:#d8b818"></i><i style="left:10.3px;top:24.6px;background:#e8d21c"></i><i style="left:12.7px;top:19.9px;background:#e8d21c"></i><i style="left:20.1px;top:13.1px;background:#e8d21c"></i><i style="left:25.1px;top:2.3px;background:#e0a020"></i><i style="left:16.3px;top:6.3px;background:#e0a020"></i><i style="left:23.9px;top:17.5px;background:#d8b818"></i><i style="left:17.2px;top:9.2px;background:#e8d21c"></i><i style="left:11.2px;top:5.4px;background:#e0a020"></i><i style="left:12.1px;top:5.0px;background:#d8b818"></i><i style="left:7.0px;top:16.8px;background:#d8b818"></i><i style="left:2.7px;top:6.9px;background:#e0a020"></i><i style="left:18.4px;top:15.5px;background:#d8b818"></i><i style="left:3.2px;top:10.2px;background:#e8d21c"></i><i style="left:23.0px;top:22.8px;background:#e8d21c"></i><i style="left:19.3px;top:18.0px;background:#e8d21c"></i></div><div class="abs" style="left:0;top:0;width:46px;height:1.3px;background:#3a3f4a"></div></div>
<div class="abs shot" style="left:1654.2px"><div class="abs" style="left:2px;top:4px;width:2px;height:18px;background:repeating-linear-gradient(#c9ccd2 0 1px,transparent 1px 3px)"></div><div class="abs" style="left:37px;top:4px;width:6px;height:14px;background:repeating-linear-gradient(#d0d3d8 0 1px,transparent 1px 3px)"></div><div class="abs" style="left:36px;top:21px;width:8px;height:1px;background:#e7a0a0"></div><div class="abs sm" style="left:6.6px;top:0px"><i style="left:6.8px;top:2.9px;background:#e8d21c"></i><i style="left:8.6px;top:17.4px;background:#d8b818"></i><i style="left:8.9px;top:20.0px;background:#d8b818"></i><i style="left:23.4px;top:7.2px;background:#d8b818"></i><i style="left:14.1px;top:14.1px;background:#e8d21c"></i><i style="left:9.6px;top:11.1px;background:#e8d21c"></i><i style="left:10.5px;top:2.4px;background:#e0a020"></i><i style="left:12.2px;top:20.6px;background:#e8d21c"></i><i style="left:18.4px;top:16.2px;background:#d8b818"></i><i style="left:20.3px;top:8.1px;background:#e8d21c"></i><i style="left:13.3px;top:6.0px;background:#d8b818"></i><i style="left:11.6px;top:19.9px;background:#e0a020"></i><i style="left:2.0px;top:9.0px;background:#d8b818"></i><i style="left:9.0px;top:22.5px;background:#e8d21c"></i><i style="left:15.5px;top:9.8px;background:#e8d21c"></i><i style="left:16.6px;top:20.6px;background:#e0a020"></i><i style="left:6.7px;top:21.0px;background:#e8d21c"></i><i style="left:19.1px;top:18.3px;background:#e8d21c"></i><i style="left:17.8px;top:10.9px;background:#d8b818"></i><i style="left:6.6px;top:13.3px;background:#e0a020"></i><i style="left:6.8px;top:23.7px;background:#e8d21c"></i><i style="left:9.9px;top:5.8px;background:#e0a020"></i><i style="left:23.1px;top:23.3px;background:#e8d21c"></i><i style="left:21.4px;top:13.1px;background:#e8d21c"></i><i style="left:16.1px;top:20.9px;background:#e0a020"></i><i style="left:11.6px;top:14.0px;background:#e8d21c"></i><i style="left:18.3px;top:11.6px;background:#d8b818"></i><i style="left:12.4px;top:2.9px;background:#e8d21c"></i><i style="left:24.5px;top:9.2px;background:#e0a020"></i><i style="left:20.1px;top:21.1px;background:#e8d21c"></i><i style="left:14.0px;top:5.4px;background:#e8d21c"></i><i style="left:7.7px;top:24.0px;background:#e8d21c"></i><i style="left:16.7px;top:9.5px;background:#e8d21c"></i><i style="left:24.1px;top:7.2px;background:#e8d21c"></i><i style="left:11.5px;top:11.0px;background:#e8d21c"></i><i style="left:23.0px;top:12.3px;background:#e8d21c"></i><i style="left:10.0px;top:4.4px;background:#e8d21c"></i><i style="left:16.6px;top:11.5px;background:#e8d21c"></i><i style="left:10.9px;top:11.6px;background:#e8d21c"></i><i style="left:10.4px;top:20.9px;background:#e0a020"></i><i style="left:10.9px;top:23.5px;background:#e8d21c"></i><i style="left:1.1px;top:16.5px;background:#e8d21c"></i><i style="left:2.8px;top:11.3px;background:#e0a020"></i><i style="left:17.2px;top:19.8px;background:#e8d21c"></i><i style="left:24.7px;top:2.4px;background:#e8d21c"></i><i style="left:2.6px;top:16.4px;background:#e8d21c"></i><i style="left:25.4px;top:16.3px;background:#e8d21c"></i><i style="left:12.5px;top:13.7px;background:#d8b818"></i><i style="left:20.9px;top:19.4px;background:#e8d21c"></i><i style="left:1.9px;top:11.6px;background:#d8b818"></i><i style="left:12.3px;top:3.0px;background:#e0a020"></i><i style="left:6.0px;top:16.3px;background:#d8b818"></i><i style="left:1.2px;top:6.7px;background:#e0a020"></i><i style="left:18.4px;top:24.2px;background:#e8d21c"></i><i style="left:24.1px;top:10.9px;background:#e8d21c"></i><i style="left:10.0px;top:11.5px;background:#d8b818"></i><i style="left:14.9px;top:10.5px;background:#e8d21c"></i><i style="left:23.4px;top:17.6px;background:#e8d21c"></i><i style="left:12.2px;top:21.6px;background:#e8d21c"></i><i style="left:10.1px;top:20.1px;background:#e8d21c"></i></div><div class="abs" style="left:0;top:0;width:46px;height:1.3px;background:#3a3f4a"></div></div>
<div class="abs" style="left:1648px;top:198px;font-size:11.7px;line-height:14px;color:#5f6368;background:rgba(236,240,250,0.8);white-space:nowrap;padding:0 2px">46.9 MB</div>
<div class="abs" style="left:624px;top:214px;width:1063px;height:131px;background:#fff"></div>
<div class="abs" style="left:624px;top:0;width:1063px;height:260px;overflow:hidden;pointer-events:none">
<div class="abs" style="left:8.6px;top:214px;width:1px;height:34px;background:#dcdfe4"></div>
<div class="abs rl" style="left:-76.1px">21000 ms</div>
<div class="abs" style="left:80.3px;top:214px;width:1px;height:34px;background:#dcdfe4"></div>
<div class="abs rl" style="left:-4.4px">21020 ms</div>
<div class="abs" style="left:152.0px;top:214px;width:1px;height:34px;background:#dcdfe4"></div>
<div class="abs rl" style="left:67.3px">21040 ms</div>
<div class="abs" style="left:223.7px;top:214px;width:1px;height:34px;background:#dcdfe4"></div>
<div class="abs rl" style="left:139.0px">21060 ms</div>
<div class="abs" style="left:295.4px;top:214px;width:1px;height:34px;background:#dcdfe4"></div>
<div class="abs rl" style="left:210.7px">21080 ms</div>
<div class="abs" style="left:367.1px;top:214px;width:1px;height:34px;background:#dcdfe4"></div>
<div class="abs rl" style="left:282.4px">21100 ms</div>
<div class="abs" style="left:438.8px;top:214px;width:1px;height:34px;background:#dcdfe4"></div>
<div class="abs rl" style="left:354.1px">21120 ms</div>
<div class="abs" style="left:510.5px;top:214px;width:1px;height:34px;background:#dcdfe4"></div>
<div class="abs rl" style="left:425.8px">21140 ms</div>
<div class="abs" style="left:582.2px;top:214px;width:1px;height:34px;background:#dcdfe4"></div>
<div class="abs rl" style="left:497.5px">21160 ms</div>
<div class="abs" style="left:653.9px;top:214px;width:1px;height:34px;background:#dcdfe4"></div>
<div class="abs rl" style="left:569.2px">21180 ms</div>
<div class="abs" style="left:725.6px;top:214px;width:1px;height:34px;background:#dcdfe4"></div>
<div class="abs rl" style="left:640.9px">21200 ms</div>
<div class="abs" style="left:797.3px;top:214px;width:1px;height:34px;background:#dcdfe4"></div>
<div class="abs rl" style="left:712.6px">21220 ms</div>
<div class="abs" style="left:869.0px;top:214px;width:1px;height:34px;background:#dcdfe4"></div>
<div class="abs rl" style="left:784.3px">21240 ms</div>
<div class="abs" style="left:940.7px;top:214px;width:1px;height:34px;background:#dcdfe4"></div>
<div class="abs rl" style="left:856.0px">21260 ms</div>
<div class="abs" style="left:1012.4px;top:214px;width:1px;height:34px;background:#dcdfe4"></div>
<div class="abs rl" style="left:927.7px">21280 ms</div>
<div class="abs rl" style="left:999.4px">21300 ms</div>
</div>
<div class="abs" style="left:624px;top:248px;width:1063px;height:1px;background:#dcdfe4"></div>
<div class="abs" style="left:631.3px;top:235px;width:0;height:0;border:4px solid transparent;border-left:6.4px solid #4a4f55;border-right:0"></div>
<div class="abs" style="left:642.3px;top:232px;font-size:11.3px;line-height:15px;color:#444a50">Network</div>
<div class="abs" style="left:630px;top:248.5px;font-size:11px;line-height:15px;color:#444a50">Web Vitals</div>
<div class="abs" style="left:624px;top:272px;width:1063px;height:1px;background:#e3e5e9"></div>
<div class="abs" style="left:624px;top:296px;width:1063px;height:1px;background:#e3e5e9"></div>
<div class="abs" style="left:624px;top:320px;width:1063px;height:1px;background:#e3e5e9"></div>
<div class="abs" style="left:624px;top:344px;width:1063px;height:1px;background:#dcdfe4"></div>
<div class="abs" style="left:624px;top:345px;width:1063px;height:272px;background:#f8f9fd"></div>
<div class="abs" style="left:624px;top:346px;width:27px;height:20px;border-radius:0 0 3px 0;background:repeating-linear-gradient(135deg,#13233f 0 1.3px,#3f7be0 1.3px 3.2px)"></div>
<div class="abs" style="left:665px;top:346px;width:489px;height:20px;border-radius:3px;background:#4285f4;overflow:hidden"><div class="abs" style="left:179px;top:0;width:310px;height:20px;background:repeating-linear-gradient(135deg,#13233f 0 1.3px,#3f7be0 1.3px 3.2px)"></div></div>
<div class="abs" style="left:1169px;top:346px;width:512px;height:20px;border-radius:3px;background:#4285f4;overflow:hidden"><div class="abs" style="left:179px;top:0;width:333px;height:20px;background:repeating-linear-gradient(135deg,#13233f 0 1.3px,#3f7be0 1.3px 3.2px)"></div></div>
<div class="abs" style="left:624px;top:346px;width:63px;height:11.5px;background:rgba(255,255,255,0.62);font-size:9.6px;line-height:12px;color:#5a6068;white-space:nowrap;overflow:hidden"><span style="display:inline-block;transform:scaleX(0.83);transform-origin:0 50%;padding-left:8.5px">LONG TASKS</span></div>
<div class="abs" style="left:626px;top:369px;width:24px;height:11px;background:repeating-linear-gradient(135deg,#e4a9a9 0 1.1px,#cdc4c4 1.1px 3px);overflow:hidden;font-size:10.6px;line-height:11px;color:#333;white-space:nowrap"><span style="position:relative;top:-2.2px;padding-left:4px">T...</span></div>
<div class="abs" style="left:646px;top:369px;width:0;height:0;border:2px solid transparent;border-top-color:#e8141c;border-right-color:#e8141c"></div>
<div class="abs" style="left:652px;top:369px;width:4px;height:11px;background:#c9c9c9;overflow:hidden;font-size:10.6px;line-height:11px;color:#333;white-space:nowrap"></div>
<div class="abs" style="left:660px;top:369px;width:3px;height:11px;background:#c9c9c9;overflow:hidden;font-size:10.6px;line-height:11px;color:#333;white-space:nowrap"></div>
<div class="abs" style="left:665px;top:369px;width:179px;height:11px;background:#c9c9c9;overflow:hidden;font-size:10.6px;line-height:11px;color:#333;white-space:nowrap"><span style="position:relative;top:-2.2px;padding-left:6px">Task</span></div>
<div class="abs" style="left:844px;top:369px;width:309px;height:11px;background:repeating-linear-gradient(135deg,#e4a9a9 0 1.1px,#cdc4c4 1.1px 3px);overflow:hidden;font-size:10.6px;line-height:11px;color:#333;white-space:nowrap"></div>
<div class="abs" style="left:1149px;top:369px;width:0;height:0;border:2px solid transparent;border-top-color:#e8141c;border-right-color:#e8141c"></div>
<div class="abs" style="left:1155px;top:369px;width:10px;height:11px;background:#c9c9c9;overflow:hidden;font-size:10.6px;line-height:11px;color:#333;white-space:nowrap"></div>
<div class="abs" style="left:1169px;top:369px;width:179px;height:11px;background:#c9c9c9;overflow:hidden;font-size:10.6px;line-height:11px;color:#333;white-space:nowrap"><span style="position:relative;top:-2.2px;padding-left:6px">Task</span></div>
<div class="abs" style="left:1348px;top:369px;width:333px;height:11px;background:repeating-linear-gradient(135deg,#e4a9a9 0 1.1px,#cdc4c4 1.1px 3px);overflow:hidden;font-size:10.6px;line-height:11px;color:#333;white-space:nowrap"></div>
<div class="abs" style="left:1677px;top:369px;width:0;height:0;border:2px solid transparent;border-top-color:#e8141c;border-right-color:#e8141c"></div>
<div class="fb" style="left:626.2px;top:381px;width:21.2px;background:#e9c05f;"></div>
<div class="fb" style="left:626.2px;top:398px;width:21.2px;background:#e9c05f;"><span style="padding-left:2.8px">F...</span></div>
<div class="fb" style="left:626.2px;top:415px;width:21.2px;background:#c0f0c0;"><span style="padding-left:2.8px">(...</span></div>
<div class="fb" style="left:626.2px;top:432px;width:21.2px;background:#c0f0c0;"><span style="padding-left:2.8px">j...</span></div>
<div class="fb" style="left:626.2px;top:449px;width:21.2px;background:#eed9c6;"><span style="padding-left:2.8px">e...</span></div>
<div class="abs" style="left:626.2px;top:466px;width:21.2px;height:50px;background:#eed9c6"><i class="sp" style="left:5.8px"></i><i class="sp" style="left:14.1px"></i><i class="sp" style="left:18.8px"></i></div>
<div class="abs" style="left:626.6px;top:517px;width:20.4px;height:16px;background:#f6e9de"></div>
<div class="abs" style="left:635px;top:517px;width:1.1px;height:16px;background:#f3dfae"></div><div class="abs" style="left:637px;top:517px;width:1.1px;height:16px;background:#f3dfae"></div><div class="abs" style="left:641px;top:517px;width:1.1px;height:16px;background:#f3dfae"></div><div class="abs" style="left:645px;top:517px;width:1.1px;height:16px;background:#f3dfae"></div>
<div class="abs" style="left:626.6px;top:534px;width:13.4px;height:16px;background:#f6e9de"></div>
<div class="abs" style="left:637px;top:534px;width:1px;height:16px;background:#f3dfae"></div><div class="abs" style="left:642px;top:534px;width:1px;height:16px;background:#f3dfae"></div><div class="abs" style="left:646.5px;top:534px;width:1px;height:16px;background:#f3dfae"></div>
<div class="abs" style="left:628px;top:551px;width:1.2px;height:16px;background:#f3dfae"></div><div class="abs" style="left:629.5px;top:551px;width:1.2px;height:16px;background:#f3dfae"></div>
<div class="abs" style="left:639px;top:551px;width:0.8px;height:33px;background:#f6e9de"></div>
<div class="abs" style="left:640px;top:381px;width:0;height:0;border:3.5px solid transparent;border-top-color:#e8141c;border-right-color:#e8141c"></div>
<div class="abs" style="left:648px;top:381px;width:2.5px;height:33px;background:#f3dfae"></div>
<div class="abs" style="left:651.5px;top:381px;width:4.5px;height:16px;background:#f3dfae"></div>
<div class="abs" style="left:657px;top:381px;width:4px;height:16px;background:#f0dfb4"></div>
<div class="abs" style="left:662px;top:381px;width:2px;height:16px;background:#a9c6f2"></div>
<div class="abs" style="left:653px;top:398px;width:1px;height:118px;background:#f3dfae"></div><div class="abs" style="left:659.5px;top:398px;width:1px;height:118px;background:#f3dfae"></div>
<div class="abs" style="left:650.5px;top:415px;width:1.5px;height:67px;background:#e6ebf7"></div><div class="abs" style="left:656.5px;top:415px;width:1.5px;height:67px;background:#e6ebf7"></div>
<div class="fb" style="left:666px;top:381px;width:10.5px;background:#9a80e8;"></div>
<div class="fb" style="left:676.5px;top:381px;width:1.5px;background:#c9bdf0;"></div>
<div class="fb" style="left:678.5px;top:381px;width:160.5px;background:#e9c05f;"><span style="padding-left:5.5px">Animation Frame Fired</span></div>
<div class="fb" style="left:841px;top:381px;width:309px;background:#e9c05f;"><span style="padding-left:5px">Animation Frame Fired</span></div>
<div class="fb" style="left:678.5px;top:398px;width:160.5px;background:#e9c05f;"><span style="padding-left:5.5px">Function Call</span></div>
<div class="fb" style="left:841px;top:398px;width:309px;background:#e9c05f;"><span style="padding-left:5px">Function Call</span></div>
<div class="fb" style="left:678.5px;top:415px;width:160.5px;background:#c0f0c0;"><span style="padding-left:5.5px">(anonymous)</span></div>
<div class="fb" style="left:841px;top:415px;width:309px;background:#c0f0c0;"><span style="padding-left:5px">(anonymous)</span></div>
<div class="fb" style="left:678.5px;top:432px;width:160.5px;background:#c0f0c0;"><span style="padding-left:5.5px">js.Yf</span></div>
<div class="fb" style="left:841px;top:432px;width:309px;background:#c0f0c0;"><span style="padding-left:5px">js.Yf</span></div>
<div class="abs" style="left:1143px;top:381px;width:0;height:0;border:3.5px solid transparent;border-top-color:#e8141c;border-right-color:#e8141c"></div>
<div class="abs" style="left:1150.6px;top:381px;width:1.8px;height:33px;background:#f3dfae"></div>
<div class="abs" style="left:1150.6px;top:415px;width:1.8px;height:33px;background:#e3e6f5"></div>
<div class="abs" style="left:679px;top:449px;width:5.5px;height:50px;background:#c0f0c0"><i class="sp" style="left:1.6px"></i><i class="sp" style="left:3.4px"></i></div>
<div class="fb" style="left:685.5px;top:449px;width:153px;background:#eed9c6;"><span style="padding-left:4.5px">e.renderFrame</span></div>
<div class="fb" style="left:841px;top:449px;width:113.5px;background:#c0f0c0;"><span style="padding-left:6px">ki.loadData</span></div>
<div class="fb" style="left:956px;top:449px;width:194px;background:#eed9c6;"><span style="padding-left:5px">e.renderFrame</span></div>
<div class="abs" style="left:685.5px;top:466px;width:6.5px;height:33px;background:#c0f0c0"><i class="sp" style="left:1.5px"></i><i class="sp" style="left:3.9px"></i></div>
<div class="fb" style="left:693px;top:466px;width:65px;background:#eed9c6;"><span style="padding-left:5px">e.ren...rame</span></div>
<div class="abs" style="left:759px;top:466px;width:4.6px;height:16px;background:#c0f0c0"><i class="sp" style="left:1.5px"></i><i class="sp" style="left:3px"></i></div>
<div class="fb" style="left:764.5px;top:466px;width:74px;background:#eed9c6;"><span style="padding-left:5.5px">e.ren...Frame</span></div>
<div class="fb" style="left:842px;top:466px;width:2.5px;background:#c0f0c0;"></div>
<div class="fb" style="left:845.5px;top:466px;width:109px;background:#c0f0c0;"><span style="padding-left:2.5px">gt.loadData</span></div>
<div class="fb" style="left:956.1px;top:466px;width:39.9px;background:#eed9c6;"><span style="padding-left:4.9px">e.IS</span></div>
<div class="fb" style="left:997.5px;top:466px;width:79.5px;background:#eed9c6;"><span style="padding-left:5.5px">e.rend...Frame</span></div>
<div class="fb" style="left:1078px;top:466px;width:2px;background:#c7d3f5;"></div>
<div class="fb" style="left:1081.5px;top:466px;width:66.5px;background:#eed9c6;"><span style="padding-left:5.5px">e.re...rame</span></div>
<div class="fb" style="left:1149px;top:466px;width:2px;background:#f3dfae;"></div>
<div class="fb" style="left:693px;top:483px;width:58px;background:#eed9c6;"><span style="padding-left:17px">e.Tc</span></div>
<div class="abs" style="left:752px;top:483px;width:6.6px;height:16px;background:#eed9c6"><i class="sp" style="left:2px"></i><i class="sp" style="left:4.4px"></i></div>
<div class="abs" style="left:760px;top:483px;width:2px;height:67px;background:#c3cdf5"></div>
<div class="fb" style="left:765px;top:483px;width:73.5px;background:#eed9c6;"><span style="padding-left:16px">e.Ns</span></div>
<i class="abs sp2" style="left:825px;top:483px"></i>
<div class="abs" style="left:842px;top:483px;width:4px;height:16px;background:#c0f0c0"><i class="sp" style="left:1.4px"></i></div>
<div class="fb" style="left:848px;top:483px;width:106.5px;background:#c0f0c0;"><span style="padding-left:5px">gt.As</span></div>
<div class="fb" style="left:956.4px;top:483px;width:39.9px;background:#c0f0c0;"><span style="padding-left:5.6px">es.cS</span></div>
<div class="fb" style="left:998px;top:483px;width:78px;background:#eed9c6;"><span style="padding-left:21px">e.Tc</span></div>
<div class="abs" style="left:1013.5px;top:483px;width:0.9px;height:16px;background:#f8f9fd"></div><div class="abs" style="left:1062.5px;top:483px;width:0.9px;height:16px;background:#f8f9fd"></div>
<div class="abs" style="left:1078px;top:483px;width:2px;height:33px;background:#c3cdf5"></div>
<div class="fb" style="left:1081.5px;top:483px;width:64.5px;background:#eed9c6;"><span style="padding-left:6.5px">e.Ns</span></div>
<div class="abs" style="left:1129.5px;top:483px;width:0.9px;height:16px;background:#f8f9fd"></div><div class="abs" style="left:1134.5px;top:483px;width:0.9px;height:16px;background:#f8f9fd"></div>
<div class="abs" style="left:1147px;top:483px;width:1.6px;height:33px;background:#d9e1f7"></div>
<div class="abs" style="left:1150px;top:483px;width:1.2px;height:33px;background:#f3dfae"></div>
<div class="abs" style="left:685px;top:500px;width:5px;height:33px;background:#eed9c6"></div>
<div class="abs" style="left:685px;top:534px;width:3px;height:84px;background:#c0f0c0"></div>
<div class="abs" style="left:692px;top:500px;width:11px;height:33px;background:repeating-linear-gradient(90deg,#eed9c6 0 2.4px,#f8f9fd 2.4px 3.4px)"></div>
<div class="abs" style="left:692px;top:534px;width:11px;height:16px;background:repeating-linear-gradient(90deg,#f6e9de 0 2.4px,#f8f9fd 2.4px 3.4px)"></div>
<div class="abs" style="left:689.5px;top:551px;width:13.5px;height:67px;background:repeating-linear-gradient(90deg,#c0f0c0 0 2.0px,#f8f9fd 2.0px 3.1px)"></div>
<div class="abs" style="left:704.5px;top:500px;width:40.5px;height:84px;background:#eed9c6"><i class="sp" style="left:8.5px"></i><i class="sp" style="left:30px"></i></div>
<div class="abs" style="left:704.5px;top:585px;width:40.5px;height:33px;background:#c0f0c0"><i class="sp" style="left:8.5px"></i><i class="sp" style="left:30px"></i></div>
<div class="abs" style="left:746px;top:500px;width:12.6px;height:16px;background:#eed9c6"><i class="sp" style="left:3px"></i><i class="sp" style="left:6px"></i></div>
<div class="abs" style="left:746px;top:517px;width:12.6px;height:33px;background:#f6e9de"><i class="sp" style="left:4px"></i><i class="sp" style="left:8.5px"></i></div>
<div class="abs" style="left:746px;top:551px;width:29px;height:16px;background:repeating-linear-gradient(90deg,#f3dfae 0 1.5px,#f8f9fd 1.5px 3.2px)"></div>
<div class="abs" style="left:747.5px;top:568px;width:1px;height:16px;background:#f3dfae"></div><div class="abs" style="left:763px;top:568px;width:1px;height:16px;background:#f3dfae"></div>
<div class="abs" style="left:751px;top:585px;width:0.9px;height:16px;background:#f6e9de"></div><div class="abs" style="left:752.6px;top:585px;width:0.9px;height:16px;background:#f6e9de"></div>
<div class="fb" style="left:765px;top:500px;width:73.6px;background:#eed9c6;"><span style="padding-left:16px">e.Kf</span></div>
<div class="abs" style="left:807.5px;top:500px;width:0.9px;height:16px;background:#f8f9fd"></div><div class="abs" style="left:821.6px;top:500px;width:0.9px;height:16px;background:#f8f9fd"></div><div class="abs" style="left:826px;top:500px;width:0.9px;height:16px;background:#f8f9fd"></div><div class="abs" style="left:830px;top:500px;width:0.9px;height:16px;background:#f8f9fd"></div><div class="abs" style="left:834px;top:500px;width:0.9px;height:16px;background:#f8f9fd"></div>
<div class="abs" style="left:765px;top:517px;width:10px;height:16px;background:repeating-linear-gradient(90deg,#eed9c6 0 2.0px,#f8f9fd 2.0px 3.0px)"></div>
<div class="abs" style="left:766px;top:534px;width:9px;height:16px;background:repeating-linear-gradient(90deg,#f6e9de 0 2.2px,#f8f9fd 2.2px 3.4px)"></div>
<div class="abs" style="left:776px;top:517px;width:7px;height:16px;background:#c0f0c0"><i class="sp" style="left:3.5px"></i></div>
<div class="abs" style="left:784px;top:517px;width:6px;height:16px;background:#eed9c6"></div>
<div class="abs" style="left:791px;top:517px;width:2.4px;height:16px;background:#c0f0c0"></div>
<div class="abs" style="left:794px;top:517px;width:10px;height:16px;background:#eed9c6"><i class="sp" style="left:3px"></i></div>
<div class="abs" style="left:807px;top:517px;width:16px;height:101px;background:#c0f0c0"><i class="sp" style="left:6px"></i><i class="sp" style="left:8.2px"></i><i class="sp" style="left:11.5px"></i><i class="sp" style="left:14px"></i></div>
<div class="abs" style="left:825px;top:517px;width:13px;height:16px;background:#f6e9de"><i class="sp" style="left:4px"></i><i class="sp" style="left:8px"></i></div>
<div class="abs" style="left:838.8px;top:517px;width:1px;height:16px;background:#f3dfae"></div>
<div class="abs" style="left:776px;top:534px;width:28px;height:50px;background:#c0f0c0"><i class="sp" style="left:3.5px"></i><i class="sp" style="left:13px"></i><i class="sp" style="left:21px"></i></div>
<div class="abs" style="left:783px;top:534px;width:13px;height:50px;background:#dff6df"><i class="sp" style="left:6px"></i></div>
<div class="abs" style="left:776px;top:585px;width:7.5px;height:33px;background:#c0f0c0"><i class="sp" style="left:3.5px"></i></div>
<div class="fb" style="left:799px;top:585px;width:5.4px;background:#e9c05f;"></div>
<div class="abs" style="left:824.5px;top:534px;width:1px;height:16px;background:#f3dfae"></div><div class="abs" style="left:830px;top:534px;width:1px;height:16px;background:#f3dfae"></div><div class="abs" style="left:834px;top:534px;width:1px;height:16px;background:#f3dfae"></div>
<div class="abs" style="left:831px;top:551px;width:1px;height:16px;background:#f3dfae"></div>
<div class="abs" style="left:836px;top:585px;width:1px;height:16px;background:#f6e9de"></div>
<div class="abs" style="left:834px;top:602px;width:1px;height:16px;background:#f3dfae"></div><div class="abs" style="left:836px;top:602px;width:1px;height:16px;background:#f3dfae"></div>
<div class="abs" style="left:848px;top:500px;width:4.4px;height:16px;background:#c0f0c0"></div>
<div class="abs" style="left:842px;top:500px;width:1.2px;height:16px;background:#c0f0c0"></div><div class="abs" style="left:845px;top:500px;width:1.2px;height:16px;background:#c0f0c0"></div>
<div class="abs" style="left:848px;top:517px;width:1.3px;height:16px;background:#dff6df"></div><div class="abs" style="left:850.3px;top:517px;width:1.3px;height:16px;background:#dff6df"></div>
<div class="fb" style="left:853.5px;top:500px;width:101px;background:#c0f0c0;"><span style="padding-left:5.5px">Tn.loadImages</span></div>
<div class="fb" style="left:853.5px;top:517px;width:101px;background:#c0f0c0;"><span style="padding-left:5.5px">cb</span></div>
<div class="fb" style="left:853.5px;top:534px;width:101px;background:#c0f0c0;"><span style="padding-left:5.5px">zn.getData</span></div>
<div class="fb" style="left:853.5px;top:551px;width:101px;background:#c0f0c0;"><span style="padding-left:5.5px">(anonymous)</span></div>
<div class="fb" style="left:853.5px;top:568px;width:101px;background:#c0f0c0;"><span style="padding-left:5.5px">gt.qL</span></div>
<div class="fb" style="left:853.5px;top:585px;width:101px;background:#c0f0c0;"><span style="padding-left:5.5px">bFa.Ns</span></div>
<div class="abs" style="left:853.5px;top:602px;width:15px;height:16px;background:#c0f0c0"><i class="sp" style="left:3.5px"></i><i class="sp" style="left:7px"></i><i class="sp" style="left:10.5px"></i></div>
<div class="fb" style="left:869.5px;top:602px;width:85px;background:#c0f0c0;"><span style="padding-left:6.5px">bFa.ul</span></div>
<div class="abs" style="left:957px;top:500px;width:38.5px;height:16px;background:#c0f0c0"><i class="sp" style="left:15px"></i><i class="sp" style="left:18px"></i><i class="sp" style="left:23.4px"></i><i class="sp" style="left:31.5px"></i><i class="sp" style="left:34px"></i></div>
<div class="abs" style="left:957px;top:517px;width:30px;height:33px;background:repeating-linear-gradient(90deg,#dff6df 0 3.1px,#f8f9fd 3.1px 4.3px)"></div>
<div class="abs" style="left:984.7px;top:517px;width:2.3px;height:101px;background:#c0f0c0"></div>
<div class="abs" style="left:992px;top:517px;width:3.5px;height:33px;background:#c0f0c0"><i class="sp" style="left:1.6px"></i></div>
<div class="abs" style="left:957px;top:551px;width:1.2px;height:16px;background:#f3dfae"></div>
<div class="abs" style="left:964px;top:551px;width:1.2px;height:33px;background:#dff6df"></div><div class="abs" style="left:969px;top:551px;width:1.2px;height:33px;background:#dff6df"></div>
<div class="abs" style="left:998px;top:500px;width:17px;height:50px;background:#f6e9de"><i class="sp" style="left:8.4px"></i></div>
<div class="abs" style="left:998px;top:551px;width:17px;height:67px;background:#dff6df"><i class="sp" style="left:5.5px"></i><i class="sp" style="left:10.6px"></i></div>
<div class="abs" style="left:1016px;top:500px;width:46px;height:84px;background:#eed9c6"><i class="sp" style="left:6.5px"></i><i class="sp" style="left:21.7px"></i><i class="sp" style="left:25px"></i><i class="sp" style="left:30px"></i><i class="sp" style="left:34.2px"></i><i class="sp" style="left:40.8px"></i><i class="sp" style="left:43.3px"></i></div>
<div class="abs" style="left:1016px;top:585px;width:46px;height:33px;background:#c0f0c0"><i class="sp" style="left:6.5px"></i><i class="sp" style="left:21.7px"></i><i class="sp" style="left:25px"></i><i class="sp" style="left:30px"></i><i class="sp" style="left:34.2px"></i><i class="sp" style="left:40.8px"></i><i class="sp" style="left:43.3px"></i></div>
<div class="abs" style="left:1063.5px;top:500px;width:13.5px;height:50px;background:#eed9c6"><i class="sp" style="left:3.5px"></i><i class="sp" style="left:7.5px"></i><i class="sp" style="left:10.5px"></i></div>
<div class="abs" style="left:1064.5px;top:517px;width:1.2px;height:16px;background:#f3dfae"></div><div class="abs" style="left:1067.2px;top:517px;width:1.2px;height:16px;background:#f3dfae"></div>
<div class="abs" style="left:1064px;top:551px;width:11px;height:16px;background:repeating-linear-gradient(90deg,#f3dfae 0 1.4px,#f8f9fd 1.4px 3.3px)"></div>
<div class="abs" style="left:1069px;top:568px;width:1px;height:16px;background:#f6e9de"></div>
<div class="abs" style="left:1073px;top:585px;width:1px;height:16px;background:#f6e9de"></div>
<div class="abs" style="left:1079.3px;top:517px;width:1px;height:101px;background:#d3dbf7"></div>
<div class="fb" style="left:1082.6px;top:500px;width:46.4px;background:#eed9c6;"><span style="padding-left:5.4px">e.Kf</span></div>
<div class="abs" style="left:1112px;top:500px;width:0.9px;height:16px;background:#f8f9fd"></div>
<div class="abs" style="left:1082.6px;top:517px;width:46.4px;height:101px;background:#c0f0c0"><i class="sp" style="left:4.4px"></i><i class="sp" style="left:9.9px"></i><i class="sp" style="left:14.4px"></i><i class="sp" style="left:19.9px"></i><i class="sp" style="left:27.4px"></i><i class="sp" style="left:29.9px"></i><i class="sp" style="left:37.4px"></i><i class="sp" style="left:41.9px"></i></div>
<div class="abs" style="left:1092.5px;top:517px;width:10px;height:16px;background:#eed9c6"><i class="sp" style="left:4.5px"></i></div>
<div class="abs" style="left:1097px;top:534px;width:5.5px;height:50px;background:#dff6df"></div>
<div class="abs" style="left:1092.5px;top:585px;width:4px;height:33px;background:#f8f9fd"></div>
<div class="abs" style="left:1104px;top:585px;width:7px;height:33px;background:#f8f9fd"></div>
<div class="abs" style="left:1125px;top:585px;width:4px;height:33px;background:#f8f9fd"></div>
<div class="abs" style="left:1130.7px;top:500px;width:14.9px;height:16px;background:repeating-linear-gradient(90deg,#eed9c6 0 2.1px,#f8f9fd 2.1px 3.1px)"></div>
<div class="abs" style="left:1130.7px;top:517px;width:9.3px;height:33px;background:repeating-linear-gradient(90deg,#f6e9de 0 1.4px,#f8f9fd 1.4px 4.0px)"></div>
<div class="abs" style="left:1135px;top:551px;width:0.9px;height:33px;background:#f6e9de"></div><div class="abs" style="left:1146.5px;top:551px;width:0.9px;height:33px;background:#f6e9de"></div>
<div class="abs" style="left:1150px;top:551px;width:1.2px;height:16px;background:#f3dfae"></div>
<div class="abs" style="left:1139.6px;top:517px;width:1px;height:16px;background:#f3dfae"></div>
<div class="fb" style="left:1154px;top:381px;width:11px;background:#e9c05f;"></div>
<div class="fb" style="left:1169.5px;top:381px;width:19.5px;background:#9a80e8;"></div>
<div class="abs" style="left:1153.2px;top:398px;width:1.6px;height:118px;background:#f3dfae"></div>
<div class="abs" style="left:1156px;top:398px;width:1.2px;height:84px;background:#f5ecd6"></div>
<div class="fb" style="left:1193px;top:381px;width:165.5px;background:#e9c05f;"><span style="padding-left:6px">Animation Frame Fired</span></div>
<div class="fb" style="left:1360px;top:381px;width:318px;background:#e9c05f;"><span style="padding-left:4px">Animation Frame Fired</span></div>
<div class="fb" style="left:1360px;top:398px;width:318px;background:#e9c05f;"><span style="padding-left:4px">Function Call</span></div>
<div class="fb" style="left:1193px;top:415px;width:165.5px;background:#c0f0c0;"><span style="padding-left:6px">(anonymous)</span></div>
<div class="fb" style="left:1360px;top:415px;width:318px;background:#c0f0c0;"><span style="padding-left:4px">(anonymous)</span></div>
<div class="fb" style="left:1193px;top:432px;width:165.5px;background:#c0f0c0;"><span style="padding-left:6px">js.Yf</span></div>
<div class="fb" style="left:1360px;top:432px;width:318px;background:#c0f0c0;"><span style="padding-left:4px">js.Yf</span></div>
<div class="abs" style="left:1671px;top:381px;width:0;height:0;border:3.5px solid transparent;border-top-color:#e8141c;border-right-color:#e8141c"></div>
<div class="abs" style="left:1678.6px;top:381px;width:1.8px;height:33px;background:#f3dfae"></div>
<div class="abs" style="left:1678.6px;top:415px;width:1.8px;height:67px;background:#e3e6f5"></div>
<div class="abs" style="left:1682px;top:381px;width:5px;height:33px;background:#e9c05f"></div>
<div class="abs" style="left:1683px;top:415px;width:4px;height:33px;background:#c0f0c0"></div>
<div class="abs" style="left:1682.5px;top:449px;width:4.5px;height:84px;background:#eed9c6"><i class="sp" style="left:2.5px"></i></div>
<div class="abs" style="left:1193px;top:449px;width:2.4px;height:33px;background:#c0f0c0"></div>
<div class="fb" style="left:1196px;top:449px;width:162.5px;background:#eed9c6;"><span style="padding-left:5px">e.renderFrame</span></div>
<div class="fb" style="left:1360px;top:449px;width:118px;background:#c0f0c0;"><span style="padding-left:4px">ki.loadData</span></div>
<div class="fb" style="left:1479.2px;top:449px;width:198.8px;background:#eed9c6;"><span style="padding-left:4.8px">e.renderFrame</span></div>
<div class="abs" style="left:1196.5px;top:466px;width:5.5px;height:16px;background:#eed9c6"><i class="sp" style="left:2.1px"></i></div>
<div class="fb" style="left:1202.5px;top:466px;width:73px;background:#eed9c6;"><span style="padding-left:6.5px">e.ren...Frame</span></div>
<div class="fb" style="left:1278px;top:466px;width:79px;background:#eed9c6;"><span style="padding-left:6px">e.rend...Frame</span></div>
<div class="fb" style="left:1360px;top:466px;width:2px;background:#c0f0c0;"></div>
<div class="fb" style="left:1363px;top:466px;width:115px;background:#c0f0c0;"><span style="padding-left:3px">gt.loadData</span></div>
<div class="fb" style="left:1479.2px;top:466px;width:34px;background:#eed9c6;"><span style="padding-left:4.8px">e.IS</span></div>
<div class="fb" style="left:1515px;top:466px;width:81.2px;background:#eed9c6;"><span style="padding-left:5px">e.renderFrame</span></div>
<div class="fb" style="left:1599.5px;top:466px;width:75.5px;background:#eed9c6;"><span style="padding-left:4.5px">e.ren...Frame</span></div>
<div class="fb" style="left:1676px;top:466px;width:1.6px;background:#eed9c6;"></div>
<div class="abs" style="left:1196.5px;top:483px;width:5.8px;height:16px;background:#c0f0c0"></div>
<div class="abs" style="left:1204px;top:483px;width:14px;height:16px;background:#eed9c6"></div>
<div class="fb" style="left:1218.9px;top:483px;width:40.6px;background:#eed9c6;"><span style="padding-left:5.1px">e.Tc</span></div>
<div class="abs" style="left:1261px;top:483px;width:3.5px;height:16px;background:#eed9c6"></div>
<div class="abs" style="left:1266px;top:483px;width:10px;height:16px;background:#eed9c6"></div>
<div class="fb" style="left:1278.6px;top:483px;width:78px;background:#eed9c6;"><span style="padding-left:21.4px">e.Ns</span></div>
<div class="abs" style="left:1292.7px;top:483px;width:0.9px;height:16px;background:#f8f9fd"></div><div class="abs" style="left:1340px;top:483px;width:0.9px;height:16px;background:#f8f9fd"></div><div class="abs" style="left:1349px;top:483px;width:0.9px;height:16px;background:#f8f9fd"></div>
<div class="abs" style="left:1359.5px;top:483px;width:1px;height:16px;background:#c0f0c0"></div><div class="abs" style="left:1361px;top:483px;width:1px;height:16px;background:#c0f0c0"></div>
<div class="fb" style="left:1363.3px;top:483px;width:114.7px;background:#c0f0c0;"><span style="padding-left:4.7px">gt.As</span></div>
<div class="fb" style="left:1480px;top:483px;width:33.2px;background:#c0f0c0;"><span style="padding-left:5px">es.cS</span></div>
<div class="abs" style="left:1514.9px;top:483px;width:14.1px;height:16px;background:#eed9c6"></div>
<div class="fb" style="left:1530.6px;top:483px;width:65.6px;background:#eed9c6;"><span style="padding-left:5.4px">e.Tc</span></div>
<div class="abs" style="left:1564.7px;top:483px;width:0.9px;height:16px;background:#f8f9fd"></div><div class="abs" style="left:1587px;top:483px;width:0.9px;height:16px;background:#f8f9fd"></div>
<div class="abs" style="left:1597.2px;top:466px;width:1.6px;height:50px;background:#c9d5f7"></div>
<div class="fb" style="left:1602px;top:483px;width:73.9px;background:#eed9c6;"><span style="padding-left:5px">e.Ns</span></div>
<div class="abs" style="left:1636.9px;top:483px;width:0.9px;height:16px;background:#f8f9fd"></div><div class="abs" style="left:1659.3px;top:483px;width:0.9px;height:16px;background:#f8f9fd"></div>
<div class="abs" style="left:1675.2px;top:483px;width:1.8px;height:33px;background:#d9e1f7"></div>
<div class="abs" style="left:1197px;top:500px;width:4.5px;height:33px;background:#eed9c6"></div>
<div class="abs" style="left:1197px;top:534px;width:9px;height:84px;background:#dff6df"><i class="sp" style="left:3px"></i><i class="sp" style="left:6px"></i></div>
<div class="abs" style="left:1207px;top:500px;width:11px;height:67px;background:#f6e9de"></div>
<div class="abs" style="left:1207px;top:568px;width:11px;height:50px;background:#dff6df"></div>
<div class="abs" style="left:1205.6px;top:517px;width:1.3px;height:16px;background:#c0f0c0"></div>
<div class="abs" style="left:1218.9px;top:500px;width:40.1px;height:84px;background:#eed9c6"><i class="sp" style="left:9.6px"></i><i class="sp" style="left:11.6px"></i><i class="sp" style="left:20.9px"></i><i class="sp" style="left:22.1px"></i></div>
<div class="abs" style="left:1218.9px;top:585px;width:40.1px;height:33px;background:#c0f0c0"><i class="sp" style="left:9.6px"></i><i class="sp" style="left:11.6px"></i><i class="sp" style="left:20.9px"></i><i class="sp" style="left:22.1px"></i></div>
<div class="abs" style="left:1228.5px;top:500px;width:2px;height:118px;background:#f8f9fd"></div>
<div class="abs" style="left:1239.8px;top:500px;width:1.2px;height:118px;background:#f8f9fd"></div>
<div class="abs" style="left:1259.6px;top:500px;width:5.9px;height:50px;background:#f6e9de"></div>
<div class="abs" style="left:1261px;top:551px;width:6.8px;height:16px;background:#f3dfae"></div>
<div class="abs" style="left:1266px;top:500px;width:10px;height:16px;background:#eed9c6"></div>
<div class="abs" style="left:1267px;top:517px;width:9px;height:16px;background:repeating-linear-gradient(90deg,#eed9c6 0 1.9px,#f8f9fd 1.9px 3.0px)"></div>
<div class="abs" style="left:1269.5px;top:534px;width:6.5px;height:16px;background:repeating-linear-gradient(90deg,#eed9c6 0 1.8px,#f8f9fd 1.8px 3.2px)"></div>
<div class="abs" style="left:1270px;top:551px;width:9.5px;height:16px;background:repeating-linear-gradient(90deg,#f3dfae 0 1.6px,#f8f9fd 1.6px 3.0px)"></div>
<div class="abs" style="left:1273px;top:568px;width:1.1px;height:16px;background:#f3dfae"></div>
<div class="abs" style="left:1279.5px;top:500px;width:10.5px;height:16px;background:#eed9c6"><i class="sp" style="left:4.5px"></i></div>
<div class="fb" style="left:1292px;top:500px;width:26.5px;background:#eed9c6;"><span style="padding-left:8px">e...</span></div>
<div class="abs" style="left:1319px;top:500px;width:18.6px;height:16px;background:#eed9c6"><i class="sp" style="left:10px"></i></div>
<div class="abs" style="left:1338.5px;top:500px;width:18.1px;height:16px;background:repeating-linear-gradient(90deg,#eed9c6 0 2.2px,#f8f9fd 2.2px 3.2px)"></div>
<div class="abs" style="left:1346.7px;top:500px;width:1.4px;height:16px;background:#f3dfae"></div>
<div class="abs" style="left:1279.5px;top:517px;width:8.5px;height:16px;background:repeating-linear-gradient(90deg,#eed9c6 0 1.9px,#f8f9fd 1.9px 3.0px)"></div>
<div class="abs" style="left:1294.4px;top:517px;width:10.8px;height:101px;background:#c0f0c0"><i class="sp" style="left:5.6px"></i></div>
<div class="abs" style="left:1306px;top:517px;width:7.5px;height:16px;background:repeating-linear-gradient(90deg,#eed9c6 0 1.6px,#f8f9fd 1.6px 2.6px)"></div>
<div class="abs" style="left:1314px;top:517px;width:4.5px;height:16px;background:#f6e9de"></div>
<div class="abs" style="left:1320px;top:517px;width:10px;height:101px;background:#c0f0c0"><i class="sp" style="left:5px"></i></div>
<div class="abs" style="left:1331px;top:517px;width:6.6px;height:101px;background:#dff6df"><i class="sp" style="left:3px"></i></div>
<div class="abs" style="left:1339.5px;top:517px;width:1px;height:16px;background:#f6e9de"></div><div class="abs" style="left:1343px;top:517px;width:1px;height:16px;background:#f6e9de"></div><div class="abs" style="left:1349px;top:517px;width:1px;height:16px;background:#f6e9de"></div>
<div class="abs" style="left:1355.8px;top:517px;width:1.1px;height:16px;background:#f3dfae"></div>
<div class="abs" style="left:1306px;top:534px;width:12.5px;height:50px;background:#dff6df"><i class="sp" style="left:4px"></i><i class="sp" style="left:8px"></i></div>
<div class="abs" style="left:1309px;top:585px;width:4.5px;height:33px;background:#dff6df"></div>
<div class="abs" style="left:1282.8px;top:534px;width:1.1px;height:16px;background:#f3dfae"></div><div class="abs" style="left:1339px;top:534px;width:1.1px;height:16px;background:#f3dfae"></div><div class="abs" style="left:1345.5px;top:534px;width:1.1px;height:16px;background:#f3dfae"></div>
<div class="abs" style="left:1292.7px;top:551px;width:1.1px;height:16px;background:#f3dfae"></div>
<div class="abs" style="left:1287.4px;top:568px;width:1.1px;height:16px;background:#f3dfae"></div>
<div class="abs" style="left:1289.4px;top:585px;width:0.9px;height:16px;background:#f6e9de"></div><div class="abs" style="left:1291px;top:585px;width:0.9px;height:16px;background:#f6e9de"></div>
<div class="abs" style="left:1289.4px;top:602px;width:0.9px;height:16px;background:#f6e9de"></div>
<div class="abs" style="left:1364px;top:500px;width:8.4px;height:16px;background:#c0f0c0"><i class="sp" style="left:2.3px"></i><i class="sp" style="left:5px"></i></div>
<div class="abs" style="left:1365px;top:517px;width:1.2px;height:16px;background:#dff6df"></div><div class="abs" style="left:1367.5px;top:517px;width:1.2px;height:16px;background:#dff6df"></div><div class="abs" style="left:1370px;top:517px;width:1.2px;height:16px;background:#dff6df"></div>
<div class="abs" style="left:1361px;top:534px;width:1px;height:33px;background:#e6f3e6"></div>
<div class="fb" style="left:1373.2px;top:500px;width:104.8px;background:#c0f0c0;"><span style="padding-left:5.3px">Tn.loadImages</span></div>
<div class="fb" style="left:1373.2px;top:517px;width:104.8px;background:#c0f0c0;"><span style="padding-left:5.3px">cb</span></div>
<div class="fb" style="left:1373.2px;top:534px;width:104.8px;background:#c0f0c0;"><span style="padding-left:5.3px">zn.getData</span></div>
<div class="fb" style="left:1373.2px;top:551px;width:104.8px;background:#c0f0c0;"><span style="padding-left:5.3px">(anonymous)</span></div>
<div class="fb" style="left:1373.2px;top:568px;width:104.8px;background:#c0f0c0;"><span style="padding-left:5.3px">gt.qL</span></div>
<div class="fb" style="left:1373.2px;top:585px;width:104.8px;background:#c0f0c0;"><span style="padding-left:5.3px">bFa.Ns</span></div>
<div class="abs" style="left:1373.2px;top:602px;width:17.3px;height:16px;background:#c0f0c0"><i class="sp" style="left:3.8px"></i><i class="sp" style="left:7.3px"></i><i class="sp" style="left:11.3px"></i><i class="sp" style="left:14.8px"></i></div>
<div class="fb" style="left:1392.3px;top:602px;width:85.7px;background:#c0f0c0;"><span style="padding-left:5.7px">bFa.ul</span></div>
<div class="fb" style="left:1480.9px;top:500px;width:26.5px;background:#c0f0c0;"><span style="padding-left:5.1px">e...f</span></div>
<div class="abs" style="left:1508px;top:500px;width:5.2px;height:16px;background:#c0f0c0"><i class="sp" style="left:2px"></i></div>
<div class="abs" style="left:1480.9px;top:517px;width:21.5px;height:16px;background:repeating-linear-gradient(90deg,#dff6df 0 2.1px,#f8f9fd 2.1px 3.6px)"></div>
<div class="abs" style="left:1503px;top:517px;width:4.4px;height:50px;background:#c0f0c0"></div>
<div class="abs" style="left:1503px;top:568px;width:4.4px;height:50px;background:#dff6df"></div>
<div class="abs" style="left:1481px;top:534px;width:1.6px;height:16px;background:#c0f0c0"></div><div class="abs" style="left:1488px;top:534px;width:1.6px;height:16px;background:#c0f0c0"></div>
<div class="abs" style="left:1480.4px;top:551px;width:1px;height:16px;background:#f3dfae"></div>
<div class="abs" style="left:1514.9px;top:500px;width:14.9px;height:50px;background:#f6e9de"></div>
<div class="abs" style="left:1514.9px;top:551px;width:14.9px;height:67px;background:#dff6df"><i class="sp" style="left:4.6px"></i></div>
<div class="fb" style="left:1530.6px;top:500px;width:33.2px;background:#eed9c6;"><span style="padding-left:5.4px">ge...s</span></div>
<div class="fb" style="left:1530.6px;top:517px;width:33.2px;background:#eed9c6;"><span style="padding-left:5.4px">ge...s</span></div>
<div class="fb" style="left:1530.6px;top:534px;width:33.2px;background:#eed9c6;"><span style="padding-left:5.4px">e.An</span></div>
<div class="fb" style="left:1530.6px;top:551px;width:33.2px;background:#eed9c6;"><span style="padding-left:5.4px">e.Tn</span></div>
<div class="fb" style="left:1530.6px;top:568px;width:33.2px;background:#eed9c6;"><span style="padding-left:5.4px">e.Fn</span></div>
<div class="fb" style="left:1530.6px;top:585px;width:33.2px;background:#c0f0c0;"><span style="padding-left:5.4px">w...n</span></div>
<div class="fb" style="left:1530.6px;top:602px;width:33.2px;background:#c0f0c0;"><span style="padding-left:5.4px">Al...n</span></div>
<div class="abs" style="left:1565.5px;top:500px;width:30.5px;height:50px;background:#eed9c6"><i class="sp" style="left:6.5px"></i><i class="sp" style="left:8.5px"></i><i class="sp" style="left:11.5px"></i><i class="sp" style="left:17.5px"></i><i class="sp" style="left:21.5px"></i><i class="sp" style="left:24.5px"></i><i class="sp" style="left:26.5px"></i><i class="sp" style="left:28.5px"></i></div>
<div class="fb" style="left:1565.5px;top:551px;width:5.8px;background:#e9c05f;"></div>
<div class="abs" style="left:1573px;top:551px;width:10px;height:33px;background:#eed9c6"></div>
<div class="abs" style="left:1583.5px;top:551px;width:6.1px;height:16px;background:repeating-linear-gradient(90deg,#eed9c6 0 1.5px,#f8f9fd 1.5px 2.4px)"></div>
<div class="abs" style="left:1588.6px;top:551px;width:1.1px;height:16px;background:#f3dfae"></div><div class="abs" style="left:1590.6px;top:551px;width:1.1px;height:16px;background:#f3dfae"></div><div class="abs" style="left:1594.6px;top:551px;width:1.1px;height:16px;background:#f3dfae"></div>
<div class="abs" style="left:1585.4px;top:568px;width:1px;height:16px;background:#f6e9de"></div>
<div class="abs" style="left:1593.2px;top:568px;width:1.1px;height:16px;background:#f3dfae"></div>
<div class="abs" style="left:1573.8px;top:585px;width:9.2px;height:33px;background:#c0f0c0"></div>
<div class="abs" style="left:1585.4px;top:585px;width:1.2px;height:33px;background:#dff6df"></div>
<div class="fb" style="left:1602px;top:500px;width:57.3px;background:#eed9c6;"><span style="padding-left:5px">e.Kf</span></div>
<div class="abs" style="left:1636.9px;top:500px;width:0.9px;height:16px;background:#f8f9fd"></div>
<div class="abs" style="left:1660px;top:500px;width:17.5px;height:16px;background:repeating-linear-gradient(90deg,#eed9c6 0 2.1px,#f8f9fd 2.1px 3.4px)"></div>
<div class="abs" style="left:1602px;top:517px;width:3.3px;height:101px;background:#c0f0c0"></div>
<div class="abs" style="left:1606px;top:517px;width:7.6px;height:16px;background:#eed9c6"></div>
<div class="abs" style="left:1614.5px;top:517px;width:4.9px;height:16px;background:#c0f0c0"></div>
<div class="abs" style="left:1620.3px;top:517px;width:9.1px;height:16px;background:#f6e9de"></div>
<div class="abs" style="left:1630.2px;top:517px;width:3.3px;height:16px;background:#c0f0c0"></div>
<div class="abs" style="left:1634.4px;top:517px;width:6.6px;height:16px;background:#f6e9de"></div>
<div class="abs" style="left:1641.9px;top:517px;width:14.1px;height:101px;background:#c0f0c0"><i class="sp" style="left:2.6px"></i><i class="sp" style="left:5.1px"></i><i class="sp" style="left:9.1px"></i><i class="sp" style="left:11.6px"></i></div>
<div class="abs" style="left:1660px;top:517px;width:6px;height:16px;background:#f6e9de"></div>
<div class="abs" style="left:1677.5px;top:517px;width:1.1px;height:16px;background:#f3dfae"></div>
<div class="abs" style="left:1606px;top:534px;width:16.8px;height:50px;background:#c0f0c0"><i class="sp" style="left:7.6px"></i></div>
<div class="abs" style="left:1623.6px;top:534px;width:12.4px;height:50px;background:#dff6df"><i class="sp" style="left:5.4px"></i></div>
<div class="abs" style="left:1636.9px;top:534px;width:4.3px;height:67px;background:#c0f0c0"></div>
<div class="abs" style="left:1660px;top:534px;width:2.6px;height:16px;background:#f3dfae"></div>
<div class="abs" style="left:1670px;top:534px;width:1.1px;height:16px;background:#f3dfae"></div><div class="abs" style="left:1676px;top:534px;width:1.1px;height:16px;background:#f3dfae"></div>
<div class="abs" style="left:1667.2px;top:551px;width:1.1px;height:16px;background:#f3dfae"></div>
<div class="fb" style="left:1606.2px;top:585px;width:7.1px;background:#e9c05f;"></div>
<div class="abs" style="left:1614.5px;top:585px;width:8.3px;height:33px;background:#c0f0c0"></div>
<div class="abs" style="left:1623.6px;top:585px;width:9.9px;height:33px;background:#dff6df"><i class="sp" style="left:4.4px"></i></div>
<div class="abs" style="left:626.5px;top:397px;width:1061px;height:1px;background:#f8f9fd"></div>
<div class="abs" style="left:626.5px;top:414px;width:1061px;height:1px;background:#f8f9fd"></div>
<div class="abs" style="left:626.5px;top:431px;width:1061px;height:1px;background:#f8f9fd"></div>
<div class="abs" style="left:626.5px;top:448px;width:1061px;height:1px;background:#f8f9fd"></div>
<div class="abs" style="left:626.5px;top:465px;width:1061px;height:1px;background:#f8f9fd"></div>
<div class="abs" style="left:626.5px;top:482px;width:1061px;height:1px;background:#f8f9fd"></div>
<div class="abs" style="left:626.5px;top:499px;width:1061px;height:1px;background:#f8f9fd"></div>
<div class="abs" style="left:626.5px;top:516px;width:1061px;height:1px;background:#f8f9fd"></div>
<div class="abs" style="left:626.5px;top:533px;width:1061px;height:1px;background:#f8f9fd"></div>
<div class="abs" style="left:626.5px;top:550px;width:1061px;height:1px;background:#f8f9fd"></div>
<div class="abs" style="left:626.5px;top:567px;width:1061px;height:1px;background:#f8f9fd"></div>
<div class="abs" style="left:626.5px;top:584px;width:1061px;height:1px;background:#f8f9fd"></div>
<div class="abs" style="left:626.5px;top:601px;width:1061px;height:1px;background:#f8f9fd"></div>
<div class="abs" style="left:626.5px;top:618px;width:1061px;height:1px;background:#f8f9fd"></div>
<div class="fb" style="left:1192px;top:397px;width:167px;height:18px;border:1.5px solid #c8141c;line-height:17px;background-image:radial-gradient(#c9a24a 0.6px,transparent 0.8px);background-size:3px 3px;background-color:#e9c05f"><span style="padding-left:5.5px">Function Call</span></div>
<div class="abs" style="left:624.2px;top:369px;width:2px;height:248px;background:#3b78e7"></div>
<div class="abs" style="left:632.0px;top:369px;width:1px;height:248px;background:rgba(60,60,90,0.2)"></div>
<div class="abs" style="left:703.7px;top:369px;width:1px;height:248px;background:rgba(60,60,90,0.2)"></div>
<div class="abs" style="left:775.4px;top:369px;width:1px;height:248px;background:rgba(60,60,90,0.2)"></div>
<div class="abs" style="left:847.1px;top:369px;width:1px;height:248px;background:rgba(60,60,90,0.2)"></div>
<div class="abs" style="left:918.8px;top:369px;width:1px;height:248px;background:rgba(60,60,90,0.2)"></div>
<div class="abs" style="left:990.5px;top:369px;width:1px;height:248px;background:rgba(60,60,90,0.2)"></div>
<div class="abs" style="left:1062.2px;top:369px;width:1px;height:248px;background:rgba(60,60,90,0.2)"></div>
<div class="abs" style="left:1133.9px;top:369px;width:1px;height:248px;background:rgba(60,60,90,0.2)"></div>
<div class="abs" style="left:1205.6px;top:369px;width:1px;height:248px;background:rgba(60,60,90,0.2)"></div>
<div class="abs" style="left:1277.3px;top:369px;width:1px;height:248px;background:rgba(60,60,90,0.2)"></div>
<div class="abs" style="left:1349.0px;top:369px;width:1px;height:248px;background:rgba(60,60,90,0.2)"></div>
<div class="abs" style="left:1420.7px;top:369px;width:1px;height:248px;background:rgba(60,60,90,0.2)"></div>
<div class="abs" style="left:1492.4px;top:369px;width:1px;height:248px;background:rgba(60,60,90,0.2)"></div>
<div class="abs" style="left:1564.1px;top:369px;width:1px;height:248px;background:rgba(60,60,90,0.2)"></div>
<div class="abs" style="left:1635.8px;top:369px;width:1px;height:248px;background:rgba(60,60,90,0.2)"></div>
<div class="abs" style="left:624px;top:617px;width:1063px;height:28px;background:#f1f3f4;border-top:1px solid #cbcdd1;border-bottom:1px solid #cbcdd1"></div>
<div class="abs" style="left:633px;top:625px;font-size:12px;line-height:15px;color:#333;white-space:nowrap">Summary</div>
<div class="abs" style="left:703.5px;top:625px;font-size:12px;line-height:15px;color:#5f6368;white-space:nowrap">Bottom-Up</div>
<div class="abs" style="left:782px;top:625px;font-size:12px;line-height:15px;color:#5f6368;white-space:nowrap">Call Tree</div>
<div class="abs" style="left:846.5px;top:625px;font-size:12px;line-height:15px;color:#5f6368;white-space:nowrap">Event Log</div>
<div class="abs" style="left:624px;top:643px;width:70px;height:2px;background:#1a73e8"></div>
<div class="abs" style="left:624px;top:645px;width:1063px;height:145px;background:#fff"></div>
<div class="abs" style="left:632px;top:656px;width:12px;height:12px;background:#e9c05f;border:1px solid #d9b352"></div>
<div class="abs" style="left:648px;top:655px;font-size:13px;line-height:16px;color:#5f6368;white-space:nowrap">Function Call</div>
<div class="abs" style="left:634px;top:682px;font-size:12px;line-height:15px;color:#5f6368;white-space:nowrap">Total Time</div>
<div class="abs" style="left:698px;top:682px;font-size:12px;line-height:15px;color:#44484d;white-space:nowrap">45.79 ms</div>
<div class="abs" style="left:634px;top:707px;font-size:12px;line-height:15px;color:#5f6368;white-space:nowrap">Self Time</div>
<div class="abs" style="left:693px;top:707px;font-size:12px;line-height:15px;color:#44484d;white-space:nowrap">0.26 ms</div>
<div class="abs" style="left:634px;top:732px;font-size:12px;line-height:15px;color:#5f6368;white-space:nowrap">Function</div>
<div class="abs" style="left:690px;top:732px;font-size:12px;line-height:15px;color:#44484d;white-space:nowrap">(anonymous) @ </div>
<div class="abs" style="left:777px;top:732px;font-size:12px;line-height:15px;color:#1a73e8;text-decoration:underline;white-space:nowrap">VM28 maps:1:116145</div>
<div class="abs" style="left:624px;top:758px;width:1063px;height:1px;background:#dcdfe4"></div>
<div class="abs" style="left:632px;top:769px;font-size:13px;line-height:16px;color:#5f6368;white-space:nowrap">Aggregated Time</div>
<div class="abs" style="left:624px;top:789px;width:1063px;height:29px;background:#f1f3f4;border-top:1px solid #cbcdd1;border-bottom:1px solid #cbcdd1"></div>
<div class="abs" style="left:631px;top:798px;font-size:12px;line-height:15px;color:#44484d;white-space:nowrap">Total blocking time: 14185.70ms (estimated) <span style="text-decoration:underline;margin-left:2px">Learn more</span></div>
<div class="abs" style="left:624px;top:818px;width:1063px;height:27px;background:#f1f3f4;border-bottom:1px solid #cbcdd1"></div>
<div class="abs" style="left:639px;top:825px;width:3px;height:3px;border-radius:2px;background:#5f6368"></div>
<div class="abs" style="left:639px;top:830px;width:3px;height:3px;border-radius:2px;background:#5f6368"></div>
<div class="abs" style="left:639px;top:835px;width:3px;height:3px;border-radius:2px;background:#5f6368"></div>
<div class="abs" style="left:661px;top:825px;font-size:12px;line-height:15px;color:#5f6368">Console</div>
<div class="abs" style="left:723.5px;top:825px;font-size:12px;line-height:15px;color:#333;white-space:nowrap">What's New</div>
<svg class="abs" style="left:793px;top:828px" width="9" height="9" viewBox="0 0 9 9"><path d="M1.2 1.2 L7.8 7.8 M7.8 1.2 L1.2 7.8" stroke="#333" stroke-width="1.6"/></svg>
<div class="abs" style="left:715px;top:843px;width:92px;height:2px;background:#1a73e8"></div>
<div class="abs" style="left:624px;top:845px;width:1063px;height:27px;background:#f1f3f4;border-bottom:1px solid #cbcdd1"></div>
<div class="abs" style="left:639px;top:852px;font-size:12px;line-height:15px;color:#333;white-space:nowrap">Highlights from the Chrome 105 update</div>
<div class="abs" style="left:624px;top:872px;width:1063px;height:85px;background:#fff"></div>
<div class="abs" style="left:642px;top:886px;width:458px;height:47px;border:1px solid #d0d2d6;background:#fff"></div>
<div class="abs" style="left:651px;top:891px;font-size:13.7px;letter-spacing:0.1px;line-height:17px;color:#1a73e8;white-space:nowrap">Step-by-step replay in the Recorder panel</div>
<div class="abs" style="left:651px;top:911px;font-size:12.9px;line-height:16px;color:#5f6368;white-space:nowrap">Set a breakpoint and replay a recording step by step in the Recorder panel.</div>
<div class="abs" style="left:642px;top:937px;width:458px;height:47px;border:1px solid #d0d2d6;background:#fff"></div>
<div class="abs" style="left:651px;top:942px;font-size:13.6px;line-height:17px;color:#1a73e8;white-space:nowrap">View Largest Contentful Paint (LCP) details</div>
<svg class="abs" style="left:1148px;top:892px" width="260" height="66" viewBox="0 0 260 66"><rect width="260" height="66" fill="#2a7af8"/><g stroke="#4b93fb" stroke-width="0.8" fill="none"><path d="M64 0 V66 M110 0 V66 M180 0 V66 M0 17 H190 M0 30 H260 M0 59 H190"/><path d="M0 0 L90 80 M130 0 L40 80"/><circle cx="64" cy="59" r="88"/><circle cx="64" cy="59" r="60" stroke-dasharray="2 2"/></g><g stroke="#a6cbfb" stroke-width="2.7" fill="none"><circle cx="63.4" cy="60.3" r="32.6"/><circle cx="63.4" cy="60.3" r="45.6"/><path d="M63 19.5 H148.8"/><path d="M139.4 0 A97 97 0 0 1 160.2 66"/><path d="M0.6 37.8 L16 66"/></g></svg>
<svg class="abs" style="left:0;top:0;pointer-events:none" width="1687" height="957" viewBox="0 0 1687 957" fill="none" stroke="#f7363f" stroke-linecap="round" stroke-linejoin="round">
<path d="M423.0 388.0 C427.3 389.5 424.0 386.2 440.0 394.0 C456.0 401.8 467.0 407.2 487.0 419.0 C507.0 430.8 504.5 430.0 520.0 441.0 C535.5 452.0 533.7 449.7 549.0 463.0 C564.3 476.3 569.0 479.2 581.0 494.0 C593.0 508.8 592.2 510.5 597.0 522.0 C601.8 533.5 599.7 531.5 600.0 540.0 C600.3 548.5 602.0 546.7 598.0 556.0 C594.0 565.3 600.8 565.0 584.0 577.0 C567.2 589.0 563.3 591.0 531.0 604.0 C498.7 617.0 483.3 619.7 455.0 629.0 C426.7 638.3 441.5 635.0 418.0 641.0 C394.5 647.0 383.0 649.1 361.0 653.0 C339.0 656.9 345.3 656.5 330.0 656.5 C314.7 656.5 312.0 655.6 300.0 653.0 C288.0 650.4 291.5 650.8 282.0 646.0 C272.5 641.2 269.0 640.8 262.0 634.0 C255.0 627.2 256.8 626.8 254.0 619.0 C251.2 611.2 251.8 607.0 251.0 603.0" stroke-width="6.8"/>
<path d="M972 85.5 C990 86.5 1020 86 1041 84" stroke-width="5"/>
<path d="M1201 412 C1230 413 1275 412 1304 408" stroke-width="4"/>
<path d="M678 708 C698 702 725 698 748 696" stroke-width="5.5"/>
<path d="M1194.5 674.0 C1195.0 681.5 1196.9 692.5 1196.5 704.0 C1196.1 715.5 1195.8 713.5 1193.0 720.0 C1190.2 726.5 1191.8 724.5 1185.5 730.0 C1179.2 735.5 1177.8 736.0 1168.0 742.0 C1158.2 748.0 1159.8 748.5 1146.5 754.0 C1133.2 759.5 1131.0 759.6 1115.0 764.0 C1099.0 768.4 1110.3 767.7 1082.5 771.6 C1054.7 775.5 1039.6 777.4 1004.0 779.4 C968.4 781.4 973.8 780.7 940.0 779.6 C906.2 778.5 902.8 778.4 869.0 775.0 C835.2 771.6 831.6 770.4 805.0 766.0 C778.4 761.6 773.1 759.5 762.5 757.3" stroke-width="6"/>
</svg>
</body></html>
